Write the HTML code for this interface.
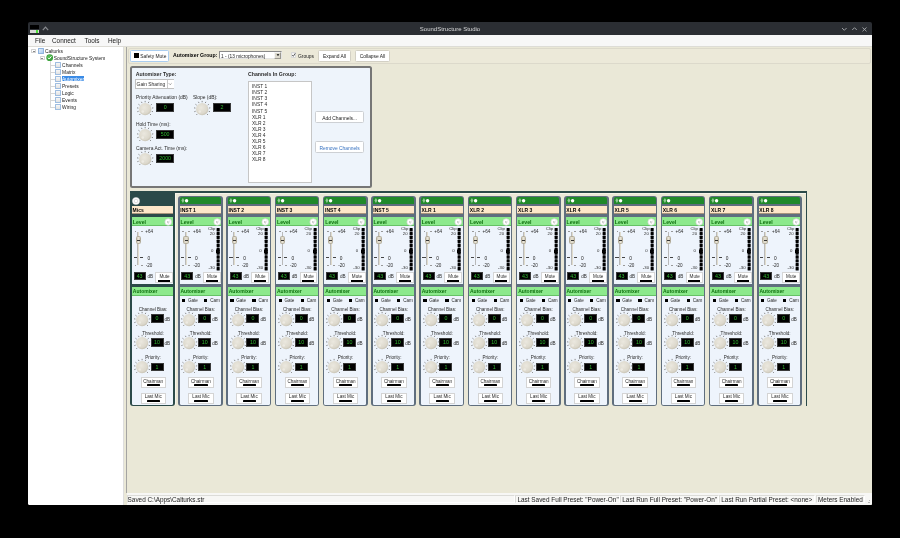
<!DOCTYPE html><html><head><meta charset="utf-8"><style>html,body{margin:0;padding:0;background:#000;width:900px;height:538px;overflow:hidden;position:relative}div{box-sizing:border-box}body{will-change:transform}</style></head><body>
<svg width="0" height="0" style="position:absolute"><defs><radialGradient id="kg" cx="0.42" cy="0.38" r="0.68"><stop offset="0" stop-color="#ebe8df"/><stop offset="0.7" stop-color="#dcd8cc"/><stop offset="1" stop-color="#c2bdae"/></radialGradient></defs></svg>
<div style="position:absolute;left:28px;top:22px;width:844px;height:13px;background:#2b2e33;border-radius:2px 2px 0 0"></div>
<div style="position:absolute;left:30px;top:25px;width:9px;height:4px;background:#000"></div>
<div style="position:absolute;left:30px;top:29.8px;width:9px;height:3.2px;background:#d8d8d8"></div>
<div style="position:absolute;left:36px;top:29.8px;width:1.8px;height:3.2px;background:#4fe03a"></div>
<svg style="position:absolute;left:42px;top:25px" width="7" height="7"><path d="M0.8 5.2 L3.5 2.2 L6.2 5.2" fill="none" stroke="#8a8c90" stroke-width="1.2"/></svg>
<div style="position:absolute;left:400px;top:25.5px;width:100px;text-align:center;font:normal 6.0px/6.90px 'Liberation Sans', sans-serif;color:#d8d9da;white-space:nowrap;">SoundStructure Studio</div>
<svg style="position:absolute;left:840px;top:25px" width="32" height="8"><g fill="none" stroke="#a8aaad" stroke-width="0.9"><path d="M2 3 L4.3 5.3 L6.6 3"/><path d="M12.2 5 L14.5 2.7 L16.8 5"/><path d="M22.5 2.5 L26.5 6.3 M26.5 2.5 L22.5 6.3"/></g></svg>
<div style="position:absolute;left:28px;top:35px;width:844px;height:11.5px;background:#f7f7f7"></div>
<div style="position:absolute;left:28px;top:46.0px;width:844px;height:1.0px;background:#dddcd6"></div>
<div style="position:absolute;left:35px;top:37.2px;font:normal 6.4px/7.36px 'Liberation Sans', sans-serif;color:#202020;white-space:nowrap;">File</div>
<div style="position:absolute;left:52px;top:37.2px;font:normal 6.4px/7.36px 'Liberation Sans', sans-serif;color:#202020;white-space:nowrap;">Connect</div>
<div style="position:absolute;left:84.5px;top:37.2px;font:normal 6.4px/7.36px 'Liberation Sans', sans-serif;color:#202020;white-space:nowrap;">Tools</div>
<div style="position:absolute;left:108px;top:37.2px;font:normal 6.4px/7.36px 'Liberation Sans', sans-serif;color:#202020;white-space:nowrap;">Help</div>
<div style="position:absolute;left:28px;top:47px;width:95.5px;height:457.6px;background:#fff;border-radius:0 0 0 1.5px"></div>
<div style="position:absolute;left:123.5px;top:47px;width:748.5px;height:457.6px;background:#eae8d7;border-radius:0 0 1.5px 0"></div>
<div style="position:absolute;left:125.8px;top:47px;width:1.0px;height:445.5px;background:#a4a4a2"></div>
<div style="position:absolute;left:122.7px;top:47px;width:1.2px;height:457.6px;background:#dedede"></div>
<div style="position:absolute;left:50.3px;top:61px;width:0.8px;height:46.5px;background:#d6d6d6"></div>
<div style="position:absolute;left:31.3px;top:48.699999999999996px;width:4.6px;height:4.0px;border:0.6px solid #d2d2d2;background:#fff;border-radius:0.6px"></div>
<div style="position:absolute;left:32.5px;top:50.5px;width:2.2px;height:0.6px;background:#888"></div>
<div style="position:absolute;left:38.4px;top:47.599999999999994px;width:5.6px;height:6.4px;background:linear-gradient(135deg,#e6f0fb,#a9c9ef);border:0.6px solid #8fb3de;border-radius:0.5px"></div>
<div style="position:absolute;left:44.9px;top:49.099999999999994px;font:normal 4.9px/5.63px 'Liberation Sans', sans-serif;color:#1a1a1a;white-space:nowrap;">Calturks</div>
<div style="position:absolute;left:40.1px;top:55.699999999999996px;width:4.6px;height:4.0px;border:0.6px solid #d2d2d2;background:#fff;border-radius:0.6px"></div>
<div style="position:absolute;left:41.3px;top:57.5px;width:2.2px;height:0.6px;background:#888"></div>
<svg style="position:absolute;left:46px;top:54.199999999999996px" width="7.5" height="7.5"><circle cx="3.7" cy="3.7" r="3.4" fill="#3fa43f"/><circle cx="3.3" cy="3.0" r="2.0" fill="#6fd06f" opacity="0.5"/><path d="M2.0 3.8 L3.2 5.0 L5.5 2.4" fill="none" stroke="#fff" stroke-width="1"/></svg>
<div style="position:absolute;left:53.7px;top:56.099999999999994px;font:normal 4.9px/5.63px 'Liberation Sans', sans-serif;color:#1a1a1a;white-space:nowrap;">SoundStructure System</div>
<div style="position:absolute;left:50.6px;top:64.5px;width:4.6px;height:0.7px;background:#d6d6d6"></div>
<div style="position:absolute;left:55.0px;top:61.8px;width:5.7px;height:6.1px;background:linear-gradient(#f7f7f7,#e2e2e2);border:0.6px solid #9fbde0;border-radius:0.5px"></div>
<div style="position:absolute;left:62.1px;top:63.099999999999994px;font:normal 4.9px/5.63px 'Liberation Sans', sans-serif;color:#1a1a1a;white-space:nowrap;">Channels</div>
<div style="position:absolute;left:50.6px;top:71.5px;width:4.6px;height:0.7px;background:#d6d6d6"></div>
<div style="position:absolute;left:55.0px;top:68.8px;width:5.7px;height:6.1px;background:linear-gradient(#f7f7f7,#e2e2e2);border:0.6px solid #9fbde0;border-radius:0.5px"></div>
<div style="position:absolute;left:62.1px;top:70.1px;font:normal 4.9px/5.63px 'Liberation Sans', sans-serif;color:#1a1a1a;white-space:nowrap;">Matrix</div>
<div style="position:absolute;left:50.6px;top:78.5px;width:4.6px;height:0.7px;background:#d6d6d6"></div>
<div style="position:absolute;left:55.0px;top:75.8px;width:5.7px;height:6.1px;background:linear-gradient(#f7f7f7,#e2e2e2);border:0.6px solid #9fbde0;border-radius:0.5px"></div>
<div style="position:absolute;left:61.9px;top:75.6px;width:22.5px;height:5.9px;background:#3a8be6"></div>
<div style="position:absolute;left:62.1px;top:77.1px;font:normal 4.9px/5.63px 'Liberation Sans', sans-serif;color:#fff;white-space:nowrap;">Automixer</div>
<div style="position:absolute;left:50.6px;top:85.5px;width:4.6px;height:0.7px;background:#d6d6d6"></div>
<div style="position:absolute;left:55.0px;top:82.8px;width:5.7px;height:6.1px;background:linear-gradient(#f7f7f7,#e2e2e2);border:0.6px solid #9fbde0;border-radius:0.5px"></div>
<div style="position:absolute;left:62.1px;top:84.1px;font:normal 4.9px/5.63px 'Liberation Sans', sans-serif;color:#1a1a1a;white-space:nowrap;">Presets</div>
<div style="position:absolute;left:50.6px;top:92.5px;width:4.6px;height:0.7px;background:#d6d6d6"></div>
<div style="position:absolute;left:55.0px;top:89.8px;width:5.7px;height:6.1px;background:linear-gradient(#f7f7f7,#e2e2e2);border:0.6px solid #9fbde0;border-radius:0.5px"></div>
<div style="position:absolute;left:62.1px;top:91.1px;font:normal 4.9px/5.63px 'Liberation Sans', sans-serif;color:#1a1a1a;white-space:nowrap;">Logic</div>
<div style="position:absolute;left:50.6px;top:99.5px;width:4.6px;height:0.7px;background:#d6d6d6"></div>
<div style="position:absolute;left:55.0px;top:96.8px;width:5.7px;height:6.1px;background:linear-gradient(#f7f7f7,#e2e2e2);border:0.6px solid #9fbde0;border-radius:0.5px"></div>
<div style="position:absolute;left:62.1px;top:98.1px;font:normal 4.9px/5.63px 'Liberation Sans', sans-serif;color:#1a1a1a;white-space:nowrap;">Events</div>
<div style="position:absolute;left:50.6px;top:106.5px;width:4.6px;height:0.7px;background:#d6d6d6"></div>
<div style="position:absolute;left:55.0px;top:103.8px;width:5.7px;height:6.1px;background:linear-gradient(#f7f7f7,#e2e2e2);border:0.6px solid #9fbde0;border-radius:0.5px"></div>
<div style="position:absolute;left:62.1px;top:105.1px;font:normal 4.9px/5.63px 'Liberation Sans', sans-serif;color:#1a1a1a;white-space:nowrap;">Wiring</div>
<div style="position:absolute;left:127.8px;top:48.2px;width:743.5px;height:15.8px;background:#ece9d9;border:0.7px solid #dcd9cb;border-radius:2px"></div>
<div style="position:absolute;left:130px;top:50px;width:39px;height:12.3px;background:#fff;border:0.8px solid #aacdf0;border-radius:1.5px"></div>
<div style="position:absolute;left:133.7px;top:53px;width:5px;height:5px;background:#000"></div>
<div style="position:absolute;left:140.3px;top:54.1px;font:normal 4.9px/5.63px 'Liberation Sans', sans-serif;color:#222;white-space:nowrap;">Safety Mute</div>
<div style="position:absolute;left:173px;top:52.1px;font:bold 5.2px/5.98px 'Liberation Sans', sans-serif;color:#000;white-space:nowrap;">Automixer Group:</div>
<div style="position:absolute;left:219px;top:51px;width:62.6px;height:8.4px;background:#fff;border:0.8px solid;border-color:#8a8a8a #e4e4e4 #e4e4e4 #8a8a8a"></div>
<div style="position:absolute;left:221px;top:53.6px;font:normal 4.8px/5.52px 'Liberation Sans', sans-serif;color:#222;white-space:nowrap;">1 - (13 microphones)</div>
<div style="position:absolute;left:274.1px;top:51.8px;width:6.9px;height:6.9px;background:#dcd9cd;border:0.5px solid;border-color:#f4f4f4 #9a9890 #9a9890 #f4f4f4"></div>
<svg style="position:absolute;left:274.6px;top:52.4px" width="6" height="6"><path d="M1.6 2.3 L4.4 2.3 L3 3.9 Z" fill="#000"/></svg>
<div style="position:absolute;left:290.7px;top:52.2px;width:5.4px;height:5.8px;background:linear-gradient(#f0f0f0,#fff);border:0.6px solid #d8d8d8;border-radius:0.8px"></div>
<svg style="position:absolute;left:290.7px;top:52.2px" width="6" height="6"><path d="M1.2 3.0 L2.3 4.3 L4.3 1.3" fill="none" stroke="#333" stroke-width="0.75"/></svg>
<div style="position:absolute;left:298px;top:53.9px;font:normal 4.9px/5.63px 'Liberation Sans', sans-serif;color:#222;white-space:nowrap;">Groups</div>
<div style="position:absolute;left:318px;top:50.3px;width:33px;height:12px;background:#fff;border:0.7px solid #d3d0c4;border-radius:1.5px"></div>
<div style="position:absolute;left:284.5px;top:54.2px;width:100px;text-align:center;font:normal 4.9px/5.63px 'Liberation Sans', sans-serif;color:#222;white-space:nowrap;">Expand All</div>
<div style="position:absolute;left:355px;top:50.3px;width:35px;height:12px;background:#fff;border:0.7px solid #d3d0c4;border-radius:1.5px"></div>
<div style="position:absolute;left:322.5px;top:54.2px;width:100px;text-align:center;font:normal 4.9px/5.63px 'Liberation Sans', sans-serif;color:#222;white-space:nowrap;">Collapse All</div>
<div style="position:absolute;left:129.9px;top:66.2px;width:242px;height:121.6px;background:#eef4fb;border:2.2px solid #767676;border-radius:2.5px"></div>
<div style="position:absolute;left:135.8px;top:71.3px;font:bold 5.2px/5.98px 'Liberation Sans', sans-serif;color:#2b2b2b;white-space:nowrap;">Automixer Type:</div>
<div style="position:absolute;left:135.4px;top:79.4px;width:39px;height:9.2px;background:#fff;border:0.7px solid #c0c0c0"></div>
<div style="position:absolute;left:136.6px;top:81.6px;font:normal 4.9px/5.63px 'Liberation Sans', sans-serif;color:#2b2b2b;white-space:nowrap;">Gain Sharing</div>
<div style="position:absolute;left:166.5px;top:80.2px;width:7.4px;height:7.6px;background:#fff;border-left:0.6px solid #c8c8c8"></div>
<svg style="position:absolute;left:167px;top:81px" width="6" height="6"><path d="M1.8 2.3 L3.2 3.7 L4.6 2.3" fill="none" stroke="#666" stroke-width="0.6"/></svg>
<div style="position:absolute;left:136px;top:95.4px;font:normal 4.9px/5.63px 'Liberation Sans', sans-serif;color:#2b2b2b;white-space:nowrap;">Priority Attenuation (dB)</div>
<svg style="position:absolute;left:135.60px;top:100.25px;overflow:visible" width="18.30" height="18.30"><g stroke="#858585" stroke-width="0.95"><line x1="4.31" y1="13.99" x2="3.32" y2="14.98"/><line x1="2.64" y1="11.27" x2="1.30" y2="11.70"/><line x1="2.38" y1="8.08" x2="1.00" y2="7.86"/><line x1="3.61" y1="5.12" x2="2.48" y2="4.30"/><line x1="6.04" y1="3.05" x2="5.40" y2="1.80"/><line x1="9.15" y1="2.30" x2="9.15" y2="0.90"/><line x1="12.26" y1="3.05" x2="12.90" y2="1.80"/><line x1="14.69" y1="5.12" x2="15.82" y2="4.30"/><line x1="15.92" y1="8.08" x2="17.30" y2="7.86"/><line x1="15.66" y1="11.27" x2="17.00" y2="11.70"/><line x1="13.99" y1="13.99" x2="14.98" y2="14.98"/></g><circle cx="9.15" cy="9.15" r="6.15" fill="url(#kg)"/><circle cx="6.76" cy="11.54" r="1.35" fill="#f0eee6" opacity="0.8"/></svg>
<div style="position:absolute;left:156.4px;top:103.3px;width:17.5px;height:8.8px;background:#000;border:0.5px solid #3a3a3a;box-sizing:border-box;color:#2fb52f;font:5.3px/7.800000000000001px 'Liberation Sans', sans-serif;text-align:center">0</div>
<div style="position:absolute;left:193px;top:95.4px;font:normal 4.9px/5.63px 'Liberation Sans', sans-serif;color:#2b2b2b;white-space:nowrap;">Slope (dB):</div>
<svg style="position:absolute;left:192.65px;top:100.25px;overflow:visible" width="18.30" height="18.30"><g stroke="#858585" stroke-width="0.95"><line x1="4.31" y1="13.99" x2="3.32" y2="14.98"/><line x1="2.64" y1="11.27" x2="1.30" y2="11.70"/><line x1="2.38" y1="8.08" x2="1.00" y2="7.86"/><line x1="3.61" y1="5.12" x2="2.48" y2="4.30"/><line x1="6.04" y1="3.05" x2="5.40" y2="1.80"/><line x1="9.15" y1="2.30" x2="9.15" y2="0.90"/><line x1="12.26" y1="3.05" x2="12.90" y2="1.80"/><line x1="14.69" y1="5.12" x2="15.82" y2="4.30"/><line x1="15.92" y1="8.08" x2="17.30" y2="7.86"/><line x1="15.66" y1="11.27" x2="17.00" y2="11.70"/><line x1="13.99" y1="13.99" x2="14.98" y2="14.98"/></g><circle cx="9.15" cy="9.15" r="6.15" fill="url(#kg)"/><circle cx="6.76" cy="11.54" r="1.35" fill="#f0eee6" opacity="0.8"/></svg>
<div style="position:absolute;left:213.3px;top:103.3px;width:17.5px;height:8.8px;background:#000;border:0.5px solid #3a3a3a;box-sizing:border-box;color:#2fb52f;font:5.3px/7.800000000000001px 'Liberation Sans', sans-serif;text-align:center">2</div>
<div style="position:absolute;left:136px;top:121.6px;font:normal 4.9px/5.63px 'Liberation Sans', sans-serif;color:#2b2b2b;white-space:nowrap;">Hold Time (ms):</div>
<svg style="position:absolute;left:135.60px;top:125.95px;overflow:visible" width="18.30" height="18.30"><g stroke="#858585" stroke-width="0.95"><line x1="4.31" y1="13.99" x2="3.32" y2="14.98"/><line x1="2.64" y1="11.27" x2="1.30" y2="11.70"/><line x1="2.38" y1="8.08" x2="1.00" y2="7.86"/><line x1="3.61" y1="5.12" x2="2.48" y2="4.30"/><line x1="6.04" y1="3.05" x2="5.40" y2="1.80"/><line x1="9.15" y1="2.30" x2="9.15" y2="0.90"/><line x1="12.26" y1="3.05" x2="12.90" y2="1.80"/><line x1="14.69" y1="5.12" x2="15.82" y2="4.30"/><line x1="15.92" y1="8.08" x2="17.30" y2="7.86"/><line x1="15.66" y1="11.27" x2="17.00" y2="11.70"/><line x1="13.99" y1="13.99" x2="14.98" y2="14.98"/></g><circle cx="9.15" cy="9.15" r="6.15" fill="url(#kg)"/><circle cx="6.76" cy="11.54" r="1.35" fill="#f0eee6" opacity="0.8"/></svg>
<div style="position:absolute;left:156.4px;top:129.8px;width:17.5px;height:8.9px;background:#000;border:0.5px solid #3a3a3a;box-sizing:border-box;color:#2fb52f;font:5.3px/7.9px 'Liberation Sans', sans-serif;text-align:center">500</div>
<div style="position:absolute;left:136px;top:145.6px;font:normal 4.9px/5.63px 'Liberation Sans', sans-serif;color:#2b2b2b;white-space:nowrap;">Camera Act. Time (ms):</div>
<svg style="position:absolute;left:135.60px;top:149.55px;overflow:visible" width="18.30" height="18.30"><g stroke="#858585" stroke-width="0.95"><line x1="4.31" y1="13.99" x2="3.32" y2="14.98"/><line x1="2.64" y1="11.27" x2="1.30" y2="11.70"/><line x1="2.38" y1="8.08" x2="1.00" y2="7.86"/><line x1="3.61" y1="5.12" x2="2.48" y2="4.30"/><line x1="6.04" y1="3.05" x2="5.40" y2="1.80"/><line x1="9.15" y1="2.30" x2="9.15" y2="0.90"/><line x1="12.26" y1="3.05" x2="12.90" y2="1.80"/><line x1="14.69" y1="5.12" x2="15.82" y2="4.30"/><line x1="15.92" y1="8.08" x2="17.30" y2="7.86"/><line x1="15.66" y1="11.27" x2="17.00" y2="11.70"/><line x1="13.99" y1="13.99" x2="14.98" y2="14.98"/></g><circle cx="9.15" cy="9.15" r="6.15" fill="url(#kg)"/><circle cx="6.76" cy="11.54" r="1.35" fill="#f0eee6" opacity="0.8"/></svg>
<div style="position:absolute;left:156.4px;top:153.9px;width:17.5px;height:8.7px;background:#000;border:0.5px solid #3a3a3a;box-sizing:border-box;color:#2fb52f;font:5.3px/7.699999999999999px 'Liberation Sans', sans-serif;text-align:center">2000</div>
<div style="position:absolute;left:248px;top:71.3px;font:bold 5.2px/5.98px 'Liberation Sans', sans-serif;color:#2b2b2b;white-space:nowrap;">Channels In Group:</div>
<div style="position:absolute;left:248.3px;top:81px;width:63.4px;height:101.8px;background:#fff;border:0.7px solid #c6c6c6"></div>
<div style="position:absolute;left:252px;top:84.1px;font:normal 4.9px/5.63px 'Liberation Sans', sans-serif;color:#2b2b2b;white-space:nowrap;">INST 1</div>
<div style="position:absolute;left:252px;top:90.19999999999999px;font:normal 4.9px/5.63px 'Liberation Sans', sans-serif;color:#2b2b2b;white-space:nowrap;">INST 2</div>
<div style="position:absolute;left:252px;top:96.3px;font:normal 4.9px/5.63px 'Liberation Sans', sans-serif;color:#2b2b2b;white-space:nowrap;">INST 3</div>
<div style="position:absolute;left:252px;top:102.39999999999999px;font:normal 4.9px/5.63px 'Liberation Sans', sans-serif;color:#2b2b2b;white-space:nowrap;">INST 4</div>
<div style="position:absolute;left:252px;top:108.5px;font:normal 4.9px/5.63px 'Liberation Sans', sans-serif;color:#2b2b2b;white-space:nowrap;">INST 5</div>
<div style="position:absolute;left:252px;top:114.6px;font:normal 4.9px/5.63px 'Liberation Sans', sans-serif;color:#2b2b2b;white-space:nowrap;">XLR 1</div>
<div style="position:absolute;left:252px;top:120.69999999999999px;font:normal 4.9px/5.63px 'Liberation Sans', sans-serif;color:#2b2b2b;white-space:nowrap;">XLR 2</div>
<div style="position:absolute;left:252px;top:126.79999999999998px;font:normal 4.9px/5.63px 'Liberation Sans', sans-serif;color:#2b2b2b;white-space:nowrap;">XLR 3</div>
<div style="position:absolute;left:252px;top:132.89999999999998px;font:normal 4.9px/5.63px 'Liberation Sans', sans-serif;color:#2b2b2b;white-space:nowrap;">XLR 4</div>
<div style="position:absolute;left:252px;top:139.0px;font:normal 4.9px/5.63px 'Liberation Sans', sans-serif;color:#2b2b2b;white-space:nowrap;">XLR 5</div>
<div style="position:absolute;left:252px;top:145.1px;font:normal 4.9px/5.63px 'Liberation Sans', sans-serif;color:#2b2b2b;white-space:nowrap;">XLR 6</div>
<div style="position:absolute;left:252px;top:151.2px;font:normal 4.9px/5.63px 'Liberation Sans', sans-serif;color:#2b2b2b;white-space:nowrap;">XLR 7</div>
<div style="position:absolute;left:252px;top:157.29999999999998px;font:normal 4.9px/5.63px 'Liberation Sans', sans-serif;color:#2b2b2b;white-space:nowrap;">XLR 8</div>
<div style="position:absolute;left:315.3px;top:111.3px;width:48.6px;height:12px;background:#fff;border:0.7px solid #cdd0d4;border-radius:1.5px"></div>
<div style="position:absolute;left:289.6px;top:115.9px;width:100px;text-align:center;font:normal 4.9px/5.63px 'Liberation Sans', sans-serif;color:#222;white-space:nowrap;">Add Channels...</div>
<div style="position:absolute;left:315.3px;top:140.9px;width:48.6px;height:12px;background:#fff;border:0.7px solid #cdd0d4;border-radius:1.5px"></div>
<div style="position:absolute;left:289.6px;top:145.5px;width:100px;text-align:center;font:normal 4.9px/5.63px 'Liberation Sans', sans-serif;color:#3470c0;white-space:nowrap;">Remove Channels</div>
<div style="position:absolute;left:130.3px;top:191.2px;width:677px;height:214.5px;border-top:2px solid #2b4a49;border-right:1.8px solid #2b4a49"></div>
<div style="position:absolute;left:130.3px;top:191.2px;width:44.8px;height:215.3px;background:#2b4a49;border-radius:3px 0 3px 3px"></div>
<div style="position:absolute;left:175.1px;top:193.2px;width:630.5px;height:0.8px;background:#f6f4ea"></div>
<div style="position:absolute;left:175.1px;top:193.2px;width:0.8px;height:212px;background:#f6f4ea"></div>
<svg style="position:absolute;left:131.6px;top:197.2px" width="8" height="8"><circle cx="4" cy="4" r="3.6" fill="#fff" stroke="#dcdcdc" stroke-width="0.5"/><circle cx="4" cy="4" r="1.8" fill="none" stroke="#c4c4c4" stroke-width="0.6"/></svg>
<div style="position:absolute;left:132.0px;top:206.4px;width:41.3px;height:8.0px;background:#fde7c9;border-bottom:0.8px solid #a8957c"></div>
<div style="position:absolute;left:132.6px;top:208.0px;font:bold 5.0px/5.75px 'Liberation Sans', sans-serif;color:#000;white-space:nowrap;">Mics</div>
<div style="position:absolute;left:132.0px;top:216.8px;width:41.3px;height:9.0px;background:#8ce98c;border-bottom:0.8px solid #66c266"></div>
<div style="position:absolute;left:132.8px;top:219.3px;font:bold 5.2px/5.98px 'Liberation Sans', sans-serif;color:#0f700f;white-space:nowrap;">Level</div>
<svg style="position:absolute;left:164.3px;top:217.5px" width="8" height="8"><circle cx="4.2" cy="4" r="3.3" fill="#fff" stroke="#d6d6d6" stroke-width="0.7"/><path d="M3 3.1 L4.2 4.1 L5.4 3.1 M3 4.2 L4.2 5.2 L5.4 4.2" fill="none" stroke="#a0a0a0" stroke-width="0.55"/></svg>
<div style="position:absolute;left:132.0px;top:225.9px;width:41.3px;height:57.8px;background:#eef4fc"></div>
<div style="position:absolute;left:137.4px;top:232.0px;width:1.8px;height:33.0px;background:#e0dccd;border-left:0.5px solid #b9b9b9"></div>
<div style="position:absolute;left:135.6px;top:235.8px;width:5.4px;height:8.2px;background:linear-gradient(90deg,#cdc7b4,#e8e4d8,#cdc7b4);border:0.4px solid #b3ac9a;border-radius:1.5px"></div>
<div style="position:absolute;left:136.8px;top:240.0px;width:3.0px;height:1.0px;background:#333"></div>
<div style="position:absolute;left:134.6px;top:231.25px;width:1.9px;height:0.75px;background:#999"></div>
<div style="position:absolute;left:140.7px;top:231.25px;width:1.9px;height:0.75px;background:#999"></div>
<div style="position:absolute;left:133.5px;top:257.05px;width:3.2px;height:1.1px;background:#444"></div>
<div style="position:absolute;left:140.1px;top:257.05px;width:3.2px;height:1.1px;background:#444"></div>
<div style="position:absolute;left:134.6px;top:265.15px;width:1.9px;height:0.75px;background:#999"></div>
<div style="position:absolute;left:140.7px;top:265.15px;width:1.9px;height:0.75px;background:#999"></div>
<div style="position:absolute;left:145.3px;top:229.2px;font:normal 4.6px/5.29px 'Liberation Sans', sans-serif;color:#2b2b2b;white-space:nowrap;">+64</div>
<div style="position:absolute;left:147.4px;top:255.6px;font:normal 4.8px/5.52px 'Liberation Sans', sans-serif;color:#222;white-space:nowrap;">0</div>
<div style="position:absolute;left:145.7px;top:263.1px;font:normal 4.6px/5.29px 'Liberation Sans', sans-serif;color:#2b2b2b;white-space:nowrap;">-20</div>
<div style="position:absolute;left:133.6px;top:271.9px;width:12px;height:8.6px;background:#000;border:0.5px solid #3a3a3a;box-sizing:border-box;color:#2fb52f;font:5.3px/7.6px 'Liberation Sans', sans-serif;text-align:center">43</div>
<div style="position:absolute;left:147.5px;top:274.3px;font:normal 4.6px/5.29px 'Liberation Sans', sans-serif;color:#2b2b2b;white-space:nowrap;">dB</div>
<div style="position:absolute;left:155.4px;top:272.4px;width:17.9px;height:10.9px;background:#fff;border:0.6px solid #d6d6d6"></div>
<div style="position:absolute;left:114.5px;top:274.2px;width:100px;text-align:center;font:normal 4.6px/5.29px 'Liberation Sans', sans-serif;color:#2b2b2b;white-space:nowrap;">Mute</div>
<div style="position:absolute;left:158.1px;top:280.0px;width:12.2px;height:1.7px;background:#000"></div>
<div style="position:absolute;left:132.0px;top:286.6px;width:41.3px;height:9.2px;background:#8ce98c;border-bottom:0.8px solid #66c266"></div>
<div style="position:absolute;left:132.8px;top:289.0px;font:bold 5.0px/5.75px 'Liberation Sans', sans-serif;color:#0f700f;white-space:nowrap;">Automixer</div>
<div style="position:absolute;left:132.0px;top:295.8px;width:41.3px;height:109.1px;background:#eef4fc;border-radius:0 0 1.5px 1.5px"></div>
<div style="position:absolute;left:103.0px;top:306.8px;width:100px;text-align:center;font:normal 4.6px/5.29px 'Liberation Sans', sans-serif;color:#2b2b2b;white-space:nowrap;">Channel Bias:</div>
<svg style="position:absolute;left:132.60px;top:310.70px;overflow:visible" width="18.20" height="18.20"><g stroke="#858585" stroke-width="0.95"><line x1="4.29" y1="13.91" x2="3.30" y2="14.90"/><line x1="2.63" y1="11.20" x2="1.30" y2="11.63"/><line x1="2.38" y1="8.04" x2="1.00" y2="7.82"/><line x1="3.60" y1="5.10" x2="2.47" y2="4.28"/><line x1="6.01" y1="3.04" x2="5.38" y2="1.79"/><line x1="9.10" y1="2.30" x2="9.10" y2="0.90"/><line x1="12.19" y1="3.04" x2="12.82" y2="1.79"/><line x1="14.60" y1="5.10" x2="15.73" y2="4.28"/><line x1="15.82" y1="8.04" x2="17.20" y2="7.82"/><line x1="15.57" y1="11.20" x2="16.90" y2="11.63"/><line x1="13.91" y1="13.91" x2="14.90" y2="14.90"/></g><circle cx="9.1" cy="9.1" r="6.1" fill="url(#kg)"/><circle cx="6.73" cy="11.47" r="1.34" fill="#f0eee6" opacity="0.8"/></svg>
<div style="position:absolute;left:150.5px;top:314.1px;width:13px;height:8.8px;background:#000;border:0.5px solid #3a3a3a;box-sizing:border-box;color:#2fb52f;font:5.3px/7.800000000000001px 'Liberation Sans', sans-serif;text-align:center">0</div>
<div style="position:absolute;left:164.5px;top:316.8px;font:normal 4.6px/5.29px 'Liberation Sans', sans-serif;color:#2b2b2b;white-space:nowrap;">dB</div>
<div style="position:absolute;left:103.0px;top:330.6px;width:100px;text-align:center;font:normal 4.6px/5.29px 'Liberation Sans', sans-serif;color:#2b2b2b;white-space:nowrap;">Threshold:</div>
<svg style="position:absolute;left:132.60px;top:334.30px;overflow:visible" width="18.20" height="18.20"><g stroke="#858585" stroke-width="0.95"><line x1="4.29" y1="13.91" x2="3.30" y2="14.90"/><line x1="2.63" y1="11.20" x2="1.30" y2="11.63"/><line x1="2.38" y1="8.04" x2="1.00" y2="7.82"/><line x1="3.60" y1="5.10" x2="2.47" y2="4.28"/><line x1="6.01" y1="3.04" x2="5.38" y2="1.79"/><line x1="9.10" y1="2.30" x2="9.10" y2="0.90"/><line x1="12.19" y1="3.04" x2="12.82" y2="1.79"/><line x1="14.60" y1="5.10" x2="15.73" y2="4.28"/><line x1="15.82" y1="8.04" x2="17.20" y2="7.82"/><line x1="15.57" y1="11.20" x2="16.90" y2="11.63"/><line x1="13.91" y1="13.91" x2="14.90" y2="14.90"/></g><circle cx="9.1" cy="9.1" r="6.1" fill="url(#kg)"/><circle cx="6.73" cy="11.47" r="1.34" fill="#f0eee6" opacity="0.8"/></svg>
<div style="position:absolute;left:150.5px;top:338.3px;width:13px;height:8.8px;background:#000;border:0.5px solid #3a3a3a;box-sizing:border-box;color:#2fb52f;font:5.3px/7.800000000000001px 'Liberation Sans', sans-serif;text-align:center">10</div>
<div style="position:absolute;left:164.5px;top:340.8px;font:normal 4.6px/5.29px 'Liberation Sans', sans-serif;color:#2b2b2b;white-space:nowrap;">dB</div>
<div style="position:absolute;left:103.0px;top:354.9px;width:100px;text-align:center;font:normal 4.6px/5.29px 'Liberation Sans', sans-serif;color:#2b2b2b;white-space:nowrap;">Priority:</div>
<svg style="position:absolute;left:132.60px;top:358.20px;overflow:visible" width="18.20" height="18.20"><g stroke="#858585" stroke-width="0.95"><line x1="4.29" y1="13.91" x2="3.30" y2="14.90"/><line x1="2.63" y1="11.20" x2="1.30" y2="11.63"/><line x1="2.38" y1="8.04" x2="1.00" y2="7.82"/><line x1="3.60" y1="5.10" x2="2.47" y2="4.28"/><line x1="6.01" y1="3.04" x2="5.38" y2="1.79"/><line x1="9.10" y1="2.30" x2="9.10" y2="0.90"/><line x1="12.19" y1="3.04" x2="12.82" y2="1.79"/><line x1="14.60" y1="5.10" x2="15.73" y2="4.28"/><line x1="15.82" y1="8.04" x2="17.20" y2="7.82"/><line x1="15.57" y1="11.20" x2="16.90" y2="11.63"/><line x1="13.91" y1="13.91" x2="14.90" y2="14.90"/></g><circle cx="9.1" cy="9.1" r="6.1" fill="url(#kg)"/><circle cx="6.73" cy="11.47" r="1.34" fill="#f0eee6" opacity="0.8"/></svg>
<div style="position:absolute;left:150.5px;top:362.5px;width:13px;height:8.8px;background:#000;border:0.5px solid #3a3a3a;box-sizing:border-box;color:#2fb52f;font:5.3px/7.800000000000001px 'Liberation Sans', sans-serif;text-align:center">1</div>
<div style="position:absolute;left:140.5px;top:377.4px;width:25.5px;height:10.9px;background:#fff;border:0.6px solid #d4d4d4"></div>
<div style="position:absolute;left:103.19999999999999px;top:379.0px;width:100px;text-align:center;font:normal 4.6px/5.29px 'Liberation Sans', sans-serif;color:#2b2b2b;white-space:nowrap;">Chairman</div>
<div style="position:absolute;left:146.6px;top:384.29999999999995px;width:13.4px;height:2.0px;background:#000;border-radius:0.5px"></div>
<div style="position:absolute;left:140.5px;top:392.8px;width:25.5px;height:10.9px;background:#fff;border:0.6px solid #d4d4d4"></div>
<div style="position:absolute;left:103.19999999999999px;top:394.40000000000003px;width:100px;text-align:center;font:normal 4.6px/5.29px 'Liberation Sans', sans-serif;color:#2b2b2b;white-space:nowrap;">Last Mic</div>
<div style="position:absolute;left:146.6px;top:399.7px;width:13.4px;height:2.0px;background:#000;border-radius:0.5px"></div>
<div style="position:absolute;left:178.2px;top:195.8px;width:44.8px;height:210.6px;background:#5f6e7e;border-radius:3px"></div>
<div style="position:absolute;left:179.7px;top:197.4px;width:41.8px;height:6.6px;background:#20892a;border-radius:2px 2px 0 0"></div>
<svg style="position:absolute;left:179.7px;top:197px" width="10" height="7"><path d="M1.4 3.5 L2.9 1.1 L4.4 3.5 L2.9 6.0 Z" fill="#9fd39f" opacity="0.9"/><circle cx="6.6" cy="3.8" r="1.7" fill="#fff"/></svg>
<div style="position:absolute;left:179.7px;top:206.4px;width:41.8px;height:8.0px;background:#fde7c9;border-bottom:0.8px solid #a8957c"></div>
<div style="position:absolute;left:180.29999999999998px;top:208.0px;font:bold 5.0px/5.75px 'Liberation Sans', sans-serif;color:#000;white-space:nowrap;">INST 1</div>
<div style="position:absolute;left:179.7px;top:216.8px;width:41.8px;height:9.0px;background:#8ce98c;border-bottom:0.8px solid #66c266"></div>
<div style="position:absolute;left:180.5px;top:219.3px;font:bold 5.2px/5.98px 'Liberation Sans', sans-serif;color:#0f700f;white-space:nowrap;">Level</div>
<svg style="position:absolute;left:212.5px;top:217.5px" width="8" height="8"><circle cx="4.2" cy="4" r="3.3" fill="#fff" stroke="#d6d6d6" stroke-width="0.7"/><path d="M3 3.1 L4.2 4.1 L5.4 3.1 M3 4.2 L4.2 5.2 L5.4 4.2" fill="none" stroke="#a0a0a0" stroke-width="0.55"/></svg>
<div style="position:absolute;left:179.7px;top:225.9px;width:41.8px;height:57.8px;background:#eef4fc"></div>
<div style="position:absolute;left:185.1px;top:232.0px;width:1.8px;height:33.0px;background:#e0dccd;border-left:0.5px solid #b9b9b9"></div>
<div style="position:absolute;left:183.29999999999998px;top:235.8px;width:5.4px;height:8.2px;background:linear-gradient(90deg,#cdc7b4,#e8e4d8,#cdc7b4);border:0.4px solid #b3ac9a;border-radius:1.5px"></div>
<div style="position:absolute;left:184.5px;top:240.0px;width:3.0px;height:1.0px;background:#333"></div>
<div style="position:absolute;left:182.29999999999998px;top:231.25px;width:1.9px;height:0.75px;background:#999"></div>
<div style="position:absolute;left:188.39999999999998px;top:231.25px;width:1.9px;height:0.75px;background:#999"></div>
<div style="position:absolute;left:181.2px;top:257.05px;width:3.2px;height:1.1px;background:#444"></div>
<div style="position:absolute;left:187.79999999999998px;top:257.05px;width:3.2px;height:1.1px;background:#444"></div>
<div style="position:absolute;left:182.29999999999998px;top:265.15px;width:1.9px;height:0.75px;background:#999"></div>
<div style="position:absolute;left:188.39999999999998px;top:265.15px;width:1.9px;height:0.75px;background:#999"></div>
<div style="position:absolute;left:193.0px;top:229.2px;font:normal 4.6px/5.29px 'Liberation Sans', sans-serif;color:#2b2b2b;white-space:nowrap;">+64</div>
<div style="position:absolute;left:195.1px;top:255.6px;font:normal 4.8px/5.52px 'Liberation Sans', sans-serif;color:#222;white-space:nowrap;">0</div>
<div style="position:absolute;left:193.39999999999998px;top:263.1px;font:normal 4.6px/5.29px 'Liberation Sans', sans-serif;color:#2b2b2b;white-space:nowrap;">-20</div>
<svg style="position:absolute;left:216.1px;top:227.6px" width="5" height="44"><rect x="0.6" y="0.00" width="3.1" height="3.4" rx="0.5" fill="#000"/><rect x="0.6" y="3.90" width="3.1" height="3.4" rx="0.5" fill="#000"/><rect x="0.6" y="7.80" width="3.1" height="3.4" rx="0.5" fill="#000"/><rect x="0.6" y="11.70" width="3.1" height="3.4" rx="0.5" fill="#000"/><rect x="0.6" y="15.60" width="3.1" height="3.4" rx="0.5" fill="#000"/><rect x="0.6" y="19.50" width="3.1" height="3.4" rx="0.5" fill="#000"/><rect x="0.6" y="23.40" width="3.1" height="3.4" rx="0.5" fill="#000"/><rect x="0.6" y="27.30" width="3.1" height="3.4" rx="0.5" fill="#000"/><rect x="0.6" y="31.20" width="3.1" height="3.4" rx="0.5" fill="#000"/><rect x="0.6" y="35.10" width="3.1" height="3.4" rx="0.5" fill="#000"/><rect x="0.6" y="39.00" width="3.1" height="3.4" rx="0.5" fill="#000"/><rect x="0" y="21.5" width="3.8" height="3.7" fill="#000"/></svg>
<div style="position:absolute;left:208.0px;top:227.2px;font:normal 4.3px/4.94px 'Liberation Sans', sans-serif;color:#2b2b2b;white-space:nowrap;">Clip</div>
<div style="position:absolute;left:209.79999999999998px;top:231.5px;font:normal 4.3px/4.94px 'Liberation Sans', sans-serif;color:#2b2b2b;white-space:nowrap;">20</div>
<div style="position:absolute;left:211.0px;top:249.2px;font:normal 4.3px/4.94px 'Liberation Sans', sans-serif;color:#2b2b2b;white-space:nowrap;">0</div>
<div style="position:absolute;left:208.6px;top:266.0px;font:normal 4.3px/4.94px 'Liberation Sans', sans-serif;color:#2b2b2b;white-space:nowrap;">-30</div>
<div style="position:absolute;left:181.29999999999998px;top:271.9px;width:12px;height:8.6px;background:#000;border:0.5px solid #3a3a3a;box-sizing:border-box;color:#2fb52f;font:5.3px/7.6px 'Liberation Sans', sans-serif;text-align:center">43</div>
<div style="position:absolute;left:195.2px;top:274.3px;font:normal 4.6px/5.29px 'Liberation Sans', sans-serif;color:#2b2b2b;white-space:nowrap;">dB</div>
<div style="position:absolute;left:203.1px;top:272.4px;width:17.9px;height:10.9px;background:#fff;border:0.6px solid #d6d6d6"></div>
<div style="position:absolute;left:162.2px;top:274.2px;width:100px;text-align:center;font:normal 4.6px/5.29px 'Liberation Sans', sans-serif;color:#2b2b2b;white-space:nowrap;">Mute</div>
<div style="position:absolute;left:205.79999999999998px;top:280.0px;width:12.2px;height:1.7px;background:#000"></div>
<div style="position:absolute;left:179.7px;top:286.6px;width:41.8px;height:9.2px;background:#8ce98c;border-bottom:0.8px solid #66c266"></div>
<div style="position:absolute;left:180.5px;top:289.0px;font:bold 5.0px/5.75px 'Liberation Sans', sans-serif;color:#0f700f;white-space:nowrap;">Automixer</div>
<div style="position:absolute;left:179.7px;top:295.8px;width:41.8px;height:109.1px;background:#eef4fc;border-radius:0 0 1.5px 1.5px"></div>
<div style="position:absolute;left:182.1px;top:299.0px;width:3.2px;height:3.0px;background:#000"></div>
<div style="position:absolute;left:187.89999999999998px;top:298.4px;font:normal 4.6px/5.29px 'Liberation Sans', sans-serif;color:#2b2b2b;white-space:nowrap;">Gate</div>
<div style="position:absolute;left:204.1px;top:299.0px;width:3.2px;height:3.0px;background:#000"></div>
<div style="position:absolute;left:210.2px;top:298.4px;font:normal 4.6px/5.29px 'Liberation Sans', sans-serif;color:#2b2b2b;white-space:nowrap;">Cam</div>
<div style="position:absolute;left:150.7px;top:306.8px;width:100px;text-align:center;font:normal 4.6px/5.29px 'Liberation Sans', sans-serif;color:#2b2b2b;white-space:nowrap;">Channel Bias:</div>
<svg style="position:absolute;left:180.30px;top:310.70px;overflow:visible" width="18.20" height="18.20"><g stroke="#858585" stroke-width="0.95"><line x1="4.29" y1="13.91" x2="3.30" y2="14.90"/><line x1="2.63" y1="11.20" x2="1.30" y2="11.63"/><line x1="2.38" y1="8.04" x2="1.00" y2="7.82"/><line x1="3.60" y1="5.10" x2="2.47" y2="4.28"/><line x1="6.01" y1="3.04" x2="5.38" y2="1.79"/><line x1="9.10" y1="2.30" x2="9.10" y2="0.90"/><line x1="12.19" y1="3.04" x2="12.82" y2="1.79"/><line x1="14.60" y1="5.10" x2="15.73" y2="4.28"/><line x1="15.82" y1="8.04" x2="17.20" y2="7.82"/><line x1="15.57" y1="11.20" x2="16.90" y2="11.63"/><line x1="13.91" y1="13.91" x2="14.90" y2="14.90"/></g><circle cx="9.1" cy="9.1" r="6.1" fill="url(#kg)"/><circle cx="6.73" cy="11.47" r="1.34" fill="#f0eee6" opacity="0.8"/></svg>
<div style="position:absolute;left:198.2px;top:314.1px;width:13px;height:8.8px;background:#000;border:0.5px solid #3a3a3a;box-sizing:border-box;color:#2fb52f;font:5.3px/7.800000000000001px 'Liberation Sans', sans-serif;text-align:center">0</div>
<div style="position:absolute;left:212.2px;top:316.8px;font:normal 4.6px/5.29px 'Liberation Sans', sans-serif;color:#2b2b2b;white-space:nowrap;">dB</div>
<div style="position:absolute;left:150.7px;top:330.6px;width:100px;text-align:center;font:normal 4.6px/5.29px 'Liberation Sans', sans-serif;color:#2b2b2b;white-space:nowrap;">Threshold:</div>
<svg style="position:absolute;left:180.30px;top:334.30px;overflow:visible" width="18.20" height="18.20"><g stroke="#858585" stroke-width="0.95"><line x1="4.29" y1="13.91" x2="3.30" y2="14.90"/><line x1="2.63" y1="11.20" x2="1.30" y2="11.63"/><line x1="2.38" y1="8.04" x2="1.00" y2="7.82"/><line x1="3.60" y1="5.10" x2="2.47" y2="4.28"/><line x1="6.01" y1="3.04" x2="5.38" y2="1.79"/><line x1="9.10" y1="2.30" x2="9.10" y2="0.90"/><line x1="12.19" y1="3.04" x2="12.82" y2="1.79"/><line x1="14.60" y1="5.10" x2="15.73" y2="4.28"/><line x1="15.82" y1="8.04" x2="17.20" y2="7.82"/><line x1="15.57" y1="11.20" x2="16.90" y2="11.63"/><line x1="13.91" y1="13.91" x2="14.90" y2="14.90"/></g><circle cx="9.1" cy="9.1" r="6.1" fill="url(#kg)"/><circle cx="6.73" cy="11.47" r="1.34" fill="#f0eee6" opacity="0.8"/></svg>
<div style="position:absolute;left:198.2px;top:338.3px;width:13px;height:8.8px;background:#000;border:0.5px solid #3a3a3a;box-sizing:border-box;color:#2fb52f;font:5.3px/7.800000000000001px 'Liberation Sans', sans-serif;text-align:center">10</div>
<div style="position:absolute;left:212.2px;top:340.8px;font:normal 4.6px/5.29px 'Liberation Sans', sans-serif;color:#2b2b2b;white-space:nowrap;">dB</div>
<div style="position:absolute;left:150.7px;top:354.9px;width:100px;text-align:center;font:normal 4.6px/5.29px 'Liberation Sans', sans-serif;color:#2b2b2b;white-space:nowrap;">Priority:</div>
<svg style="position:absolute;left:180.30px;top:358.20px;overflow:visible" width="18.20" height="18.20"><g stroke="#858585" stroke-width="0.95"><line x1="4.29" y1="13.91" x2="3.30" y2="14.90"/><line x1="2.63" y1="11.20" x2="1.30" y2="11.63"/><line x1="2.38" y1="8.04" x2="1.00" y2="7.82"/><line x1="3.60" y1="5.10" x2="2.47" y2="4.28"/><line x1="6.01" y1="3.04" x2="5.38" y2="1.79"/><line x1="9.10" y1="2.30" x2="9.10" y2="0.90"/><line x1="12.19" y1="3.04" x2="12.82" y2="1.79"/><line x1="14.60" y1="5.10" x2="15.73" y2="4.28"/><line x1="15.82" y1="8.04" x2="17.20" y2="7.82"/><line x1="15.57" y1="11.20" x2="16.90" y2="11.63"/><line x1="13.91" y1="13.91" x2="14.90" y2="14.90"/></g><circle cx="9.1" cy="9.1" r="6.1" fill="url(#kg)"/><circle cx="6.73" cy="11.47" r="1.34" fill="#f0eee6" opacity="0.8"/></svg>
<div style="position:absolute;left:198.2px;top:362.5px;width:13px;height:8.8px;background:#000;border:0.5px solid #3a3a3a;box-sizing:border-box;color:#2fb52f;font:5.3px/7.800000000000001px 'Liberation Sans', sans-serif;text-align:center">1</div>
<div style="position:absolute;left:188.2px;top:377.4px;width:25.5px;height:10.9px;background:#fff;border:0.6px solid #d4d4d4"></div>
<div style="position:absolute;left:150.89999999999998px;top:379.0px;width:100px;text-align:center;font:normal 4.6px/5.29px 'Liberation Sans', sans-serif;color:#2b2b2b;white-space:nowrap;">Chairman</div>
<div style="position:absolute;left:194.29999999999998px;top:384.29999999999995px;width:13.4px;height:2.0px;background:#000;border-radius:0.5px"></div>
<div style="position:absolute;left:188.2px;top:392.8px;width:25.5px;height:10.9px;background:#fff;border:0.6px solid #d4d4d4"></div>
<div style="position:absolute;left:150.89999999999998px;top:394.40000000000003px;width:100px;text-align:center;font:normal 4.6px/5.29px 'Liberation Sans', sans-serif;color:#2b2b2b;white-space:nowrap;">Last Mic</div>
<div style="position:absolute;left:194.29999999999998px;top:399.7px;width:13.4px;height:2.0px;background:#000;border-radius:0.5px"></div>
<div style="position:absolute;left:226.45px;top:195.8px;width:44.8px;height:210.6px;background:#5f6e7e;border-radius:3px"></div>
<div style="position:absolute;left:227.95px;top:197.4px;width:41.8px;height:6.6px;background:#20892a;border-radius:2px 2px 0 0"></div>
<svg style="position:absolute;left:227.95px;top:197px" width="10" height="7"><path d="M1.4 3.5 L2.9 1.1 L4.4 3.5 L2.9 6.0 Z" fill="#9fd39f" opacity="0.9"/><circle cx="6.6" cy="3.8" r="1.7" fill="#fff"/></svg>
<div style="position:absolute;left:227.95px;top:206.4px;width:41.8px;height:8.0px;background:#fde7c9;border-bottom:0.8px solid #a8957c"></div>
<div style="position:absolute;left:228.54999999999998px;top:208.0px;font:bold 5.0px/5.75px 'Liberation Sans', sans-serif;color:#000;white-space:nowrap;">INST 2</div>
<div style="position:absolute;left:227.95px;top:216.8px;width:41.8px;height:9.0px;background:#8ce98c;border-bottom:0.8px solid #66c266"></div>
<div style="position:absolute;left:228.75px;top:219.3px;font:bold 5.2px/5.98px 'Liberation Sans', sans-serif;color:#0f700f;white-space:nowrap;">Level</div>
<svg style="position:absolute;left:260.75px;top:217.5px" width="8" height="8"><circle cx="4.2" cy="4" r="3.3" fill="#fff" stroke="#d6d6d6" stroke-width="0.7"/><path d="M3 3.1 L4.2 4.1 L5.4 3.1 M3 4.2 L4.2 5.2 L5.4 4.2" fill="none" stroke="#a0a0a0" stroke-width="0.55"/></svg>
<div style="position:absolute;left:227.95px;top:225.9px;width:41.8px;height:57.8px;background:#eef4fc"></div>
<div style="position:absolute;left:233.35px;top:232.0px;width:1.8px;height:33.0px;background:#e0dccd;border-left:0.5px solid #b9b9b9"></div>
<div style="position:absolute;left:231.54999999999998px;top:235.8px;width:5.4px;height:8.2px;background:linear-gradient(90deg,#cdc7b4,#e8e4d8,#cdc7b4);border:0.4px solid #b3ac9a;border-radius:1.5px"></div>
<div style="position:absolute;left:232.75px;top:240.0px;width:3.0px;height:1.0px;background:#333"></div>
<div style="position:absolute;left:230.54999999999998px;top:231.25px;width:1.9px;height:0.75px;background:#999"></div>
<div style="position:absolute;left:236.64999999999998px;top:231.25px;width:1.9px;height:0.75px;background:#999"></div>
<div style="position:absolute;left:229.45px;top:257.05px;width:3.2px;height:1.1px;background:#444"></div>
<div style="position:absolute;left:236.04999999999998px;top:257.05px;width:3.2px;height:1.1px;background:#444"></div>
<div style="position:absolute;left:230.54999999999998px;top:265.15px;width:1.9px;height:0.75px;background:#999"></div>
<div style="position:absolute;left:236.64999999999998px;top:265.15px;width:1.9px;height:0.75px;background:#999"></div>
<div style="position:absolute;left:241.25px;top:229.2px;font:normal 4.6px/5.29px 'Liberation Sans', sans-serif;color:#2b2b2b;white-space:nowrap;">+64</div>
<div style="position:absolute;left:243.35px;top:255.6px;font:normal 4.8px/5.52px 'Liberation Sans', sans-serif;color:#222;white-space:nowrap;">0</div>
<div style="position:absolute;left:241.64999999999998px;top:263.1px;font:normal 4.6px/5.29px 'Liberation Sans', sans-serif;color:#2b2b2b;white-space:nowrap;">-20</div>
<svg style="position:absolute;left:264.34999999999997px;top:227.6px" width="5" height="44"><rect x="0.6" y="0.00" width="3.1" height="3.4" rx="0.5" fill="#000"/><rect x="0.6" y="3.90" width="3.1" height="3.4" rx="0.5" fill="#000"/><rect x="0.6" y="7.80" width="3.1" height="3.4" rx="0.5" fill="#000"/><rect x="0.6" y="11.70" width="3.1" height="3.4" rx="0.5" fill="#000"/><rect x="0.6" y="15.60" width="3.1" height="3.4" rx="0.5" fill="#000"/><rect x="0.6" y="19.50" width="3.1" height="3.4" rx="0.5" fill="#000"/><rect x="0.6" y="23.40" width="3.1" height="3.4" rx="0.5" fill="#000"/><rect x="0.6" y="27.30" width="3.1" height="3.4" rx="0.5" fill="#000"/><rect x="0.6" y="31.20" width="3.1" height="3.4" rx="0.5" fill="#000"/><rect x="0.6" y="35.10" width="3.1" height="3.4" rx="0.5" fill="#000"/><rect x="0.6" y="39.00" width="3.1" height="3.4" rx="0.5" fill="#000"/><rect x="0" y="21.5" width="3.8" height="3.7" fill="#000"/></svg>
<div style="position:absolute;left:256.25px;top:227.2px;font:normal 4.3px/4.94px 'Liberation Sans', sans-serif;color:#2b2b2b;white-space:nowrap;">Clip</div>
<div style="position:absolute;left:258.05px;top:231.5px;font:normal 4.3px/4.94px 'Liberation Sans', sans-serif;color:#2b2b2b;white-space:nowrap;">20</div>
<div style="position:absolute;left:259.25px;top:249.2px;font:normal 4.3px/4.94px 'Liberation Sans', sans-serif;color:#2b2b2b;white-space:nowrap;">0</div>
<div style="position:absolute;left:256.84999999999997px;top:266.0px;font:normal 4.3px/4.94px 'Liberation Sans', sans-serif;color:#2b2b2b;white-space:nowrap;">-30</div>
<div style="position:absolute;left:229.54999999999998px;top:271.9px;width:12px;height:8.6px;background:#000;border:0.5px solid #3a3a3a;box-sizing:border-box;color:#2fb52f;font:5.3px/7.6px 'Liberation Sans', sans-serif;text-align:center">43</div>
<div style="position:absolute;left:243.45px;top:274.3px;font:normal 4.6px/5.29px 'Liberation Sans', sans-serif;color:#2b2b2b;white-space:nowrap;">dB</div>
<div style="position:absolute;left:251.35px;top:272.4px;width:17.9px;height:10.9px;background:#fff;border:0.6px solid #d6d6d6"></div>
<div style="position:absolute;left:210.45px;top:274.2px;width:100px;text-align:center;font:normal 4.6px/5.29px 'Liberation Sans', sans-serif;color:#2b2b2b;white-space:nowrap;">Mute</div>
<div style="position:absolute;left:254.04999999999998px;top:280.0px;width:12.2px;height:1.7px;background:#000"></div>
<div style="position:absolute;left:227.95px;top:286.6px;width:41.8px;height:9.2px;background:#8ce98c;border-bottom:0.8px solid #66c266"></div>
<div style="position:absolute;left:228.75px;top:289.0px;font:bold 5.0px/5.75px 'Liberation Sans', sans-serif;color:#0f700f;white-space:nowrap;">Automixer</div>
<div style="position:absolute;left:227.95px;top:295.8px;width:41.8px;height:109.1px;background:#eef4fc;border-radius:0 0 1.5px 1.5px"></div>
<div style="position:absolute;left:230.35px;top:299.0px;width:3.2px;height:3.0px;background:#000"></div>
<div style="position:absolute;left:236.14999999999998px;top:298.4px;font:normal 4.6px/5.29px 'Liberation Sans', sans-serif;color:#2b2b2b;white-space:nowrap;">Gate</div>
<div style="position:absolute;left:252.35px;top:299.0px;width:3.2px;height:3.0px;background:#000"></div>
<div style="position:absolute;left:258.45px;top:298.4px;font:normal 4.6px/5.29px 'Liberation Sans', sans-serif;color:#2b2b2b;white-space:nowrap;">Cam</div>
<div style="position:absolute;left:198.95px;top:306.8px;width:100px;text-align:center;font:normal 4.6px/5.29px 'Liberation Sans', sans-serif;color:#2b2b2b;white-space:nowrap;">Channel Bias:</div>
<svg style="position:absolute;left:228.55px;top:310.70px;overflow:visible" width="18.20" height="18.20"><g stroke="#858585" stroke-width="0.95"><line x1="4.29" y1="13.91" x2="3.30" y2="14.90"/><line x1="2.63" y1="11.20" x2="1.30" y2="11.63"/><line x1="2.38" y1="8.04" x2="1.00" y2="7.82"/><line x1="3.60" y1="5.10" x2="2.47" y2="4.28"/><line x1="6.01" y1="3.04" x2="5.38" y2="1.79"/><line x1="9.10" y1="2.30" x2="9.10" y2="0.90"/><line x1="12.19" y1="3.04" x2="12.82" y2="1.79"/><line x1="14.60" y1="5.10" x2="15.73" y2="4.28"/><line x1="15.82" y1="8.04" x2="17.20" y2="7.82"/><line x1="15.57" y1="11.20" x2="16.90" y2="11.63"/><line x1="13.91" y1="13.91" x2="14.90" y2="14.90"/></g><circle cx="9.1" cy="9.1" r="6.1" fill="url(#kg)"/><circle cx="6.73" cy="11.47" r="1.34" fill="#f0eee6" opacity="0.8"/></svg>
<div style="position:absolute;left:246.45px;top:314.1px;width:13px;height:8.8px;background:#000;border:0.5px solid #3a3a3a;box-sizing:border-box;color:#2fb52f;font:5.3px/7.800000000000001px 'Liberation Sans', sans-serif;text-align:center">0</div>
<div style="position:absolute;left:260.45px;top:316.8px;font:normal 4.6px/5.29px 'Liberation Sans', sans-serif;color:#2b2b2b;white-space:nowrap;">dB</div>
<div style="position:absolute;left:198.95px;top:330.6px;width:100px;text-align:center;font:normal 4.6px/5.29px 'Liberation Sans', sans-serif;color:#2b2b2b;white-space:nowrap;">Threshold:</div>
<svg style="position:absolute;left:228.55px;top:334.30px;overflow:visible" width="18.20" height="18.20"><g stroke="#858585" stroke-width="0.95"><line x1="4.29" y1="13.91" x2="3.30" y2="14.90"/><line x1="2.63" y1="11.20" x2="1.30" y2="11.63"/><line x1="2.38" y1="8.04" x2="1.00" y2="7.82"/><line x1="3.60" y1="5.10" x2="2.47" y2="4.28"/><line x1="6.01" y1="3.04" x2="5.38" y2="1.79"/><line x1="9.10" y1="2.30" x2="9.10" y2="0.90"/><line x1="12.19" y1="3.04" x2="12.82" y2="1.79"/><line x1="14.60" y1="5.10" x2="15.73" y2="4.28"/><line x1="15.82" y1="8.04" x2="17.20" y2="7.82"/><line x1="15.57" y1="11.20" x2="16.90" y2="11.63"/><line x1="13.91" y1="13.91" x2="14.90" y2="14.90"/></g><circle cx="9.1" cy="9.1" r="6.1" fill="url(#kg)"/><circle cx="6.73" cy="11.47" r="1.34" fill="#f0eee6" opacity="0.8"/></svg>
<div style="position:absolute;left:246.45px;top:338.3px;width:13px;height:8.8px;background:#000;border:0.5px solid #3a3a3a;box-sizing:border-box;color:#2fb52f;font:5.3px/7.800000000000001px 'Liberation Sans', sans-serif;text-align:center">10</div>
<div style="position:absolute;left:260.45px;top:340.8px;font:normal 4.6px/5.29px 'Liberation Sans', sans-serif;color:#2b2b2b;white-space:nowrap;">dB</div>
<div style="position:absolute;left:198.95px;top:354.9px;width:100px;text-align:center;font:normal 4.6px/5.29px 'Liberation Sans', sans-serif;color:#2b2b2b;white-space:nowrap;">Priority:</div>
<svg style="position:absolute;left:228.55px;top:358.20px;overflow:visible" width="18.20" height="18.20"><g stroke="#858585" stroke-width="0.95"><line x1="4.29" y1="13.91" x2="3.30" y2="14.90"/><line x1="2.63" y1="11.20" x2="1.30" y2="11.63"/><line x1="2.38" y1="8.04" x2="1.00" y2="7.82"/><line x1="3.60" y1="5.10" x2="2.47" y2="4.28"/><line x1="6.01" y1="3.04" x2="5.38" y2="1.79"/><line x1="9.10" y1="2.30" x2="9.10" y2="0.90"/><line x1="12.19" y1="3.04" x2="12.82" y2="1.79"/><line x1="14.60" y1="5.10" x2="15.73" y2="4.28"/><line x1="15.82" y1="8.04" x2="17.20" y2="7.82"/><line x1="15.57" y1="11.20" x2="16.90" y2="11.63"/><line x1="13.91" y1="13.91" x2="14.90" y2="14.90"/></g><circle cx="9.1" cy="9.1" r="6.1" fill="url(#kg)"/><circle cx="6.73" cy="11.47" r="1.34" fill="#f0eee6" opacity="0.8"/></svg>
<div style="position:absolute;left:246.45px;top:362.5px;width:13px;height:8.8px;background:#000;border:0.5px solid #3a3a3a;box-sizing:border-box;color:#2fb52f;font:5.3px/7.800000000000001px 'Liberation Sans', sans-serif;text-align:center">1</div>
<div style="position:absolute;left:236.45px;top:377.4px;width:25.5px;height:10.9px;background:#fff;border:0.6px solid #d4d4d4"></div>
<div style="position:absolute;left:199.14999999999998px;top:379.0px;width:100px;text-align:center;font:normal 4.6px/5.29px 'Liberation Sans', sans-serif;color:#2b2b2b;white-space:nowrap;">Chairman</div>
<div style="position:absolute;left:242.54999999999998px;top:384.29999999999995px;width:13.4px;height:2.0px;background:#000;border-radius:0.5px"></div>
<div style="position:absolute;left:236.45px;top:392.8px;width:25.5px;height:10.9px;background:#fff;border:0.6px solid #d4d4d4"></div>
<div style="position:absolute;left:199.14999999999998px;top:394.40000000000003px;width:100px;text-align:center;font:normal 4.6px/5.29px 'Liberation Sans', sans-serif;color:#2b2b2b;white-space:nowrap;">Last Mic</div>
<div style="position:absolute;left:242.54999999999998px;top:399.7px;width:13.4px;height:2.0px;background:#000;border-radius:0.5px"></div>
<div style="position:absolute;left:274.7px;top:195.8px;width:44.8px;height:210.6px;background:#5f6e7e;border-radius:3px"></div>
<div style="position:absolute;left:276.2px;top:197.4px;width:41.8px;height:6.6px;background:#20892a;border-radius:2px 2px 0 0"></div>
<svg style="position:absolute;left:276.2px;top:197px" width="10" height="7"><path d="M1.4 3.5 L2.9 1.1 L4.4 3.5 L2.9 6.0 Z" fill="#9fd39f" opacity="0.9"/><circle cx="6.6" cy="3.8" r="1.7" fill="#fff"/></svg>
<div style="position:absolute;left:276.2px;top:206.4px;width:41.8px;height:8.0px;background:#fde7c9;border-bottom:0.8px solid #a8957c"></div>
<div style="position:absolute;left:276.8px;top:208.0px;font:bold 5.0px/5.75px 'Liberation Sans', sans-serif;color:#000;white-space:nowrap;">INST 3</div>
<div style="position:absolute;left:276.2px;top:216.8px;width:41.8px;height:9.0px;background:#8ce98c;border-bottom:0.8px solid #66c266"></div>
<div style="position:absolute;left:277.0px;top:219.3px;font:bold 5.2px/5.98px 'Liberation Sans', sans-serif;color:#0f700f;white-space:nowrap;">Level</div>
<svg style="position:absolute;left:309.0px;top:217.5px" width="8" height="8"><circle cx="4.2" cy="4" r="3.3" fill="#fff" stroke="#d6d6d6" stroke-width="0.7"/><path d="M3 3.1 L4.2 4.1 L5.4 3.1 M3 4.2 L4.2 5.2 L5.4 4.2" fill="none" stroke="#a0a0a0" stroke-width="0.55"/></svg>
<div style="position:absolute;left:276.2px;top:225.9px;width:41.8px;height:57.8px;background:#eef4fc"></div>
<div style="position:absolute;left:281.59999999999997px;top:232.0px;width:1.8px;height:33.0px;background:#e0dccd;border-left:0.5px solid #b9b9b9"></div>
<div style="position:absolute;left:279.8px;top:235.8px;width:5.4px;height:8.2px;background:linear-gradient(90deg,#cdc7b4,#e8e4d8,#cdc7b4);border:0.4px solid #b3ac9a;border-radius:1.5px"></div>
<div style="position:absolute;left:281.0px;top:240.0px;width:3.0px;height:1.0px;background:#333"></div>
<div style="position:absolute;left:278.8px;top:231.25px;width:1.9px;height:0.75px;background:#999"></div>
<div style="position:absolute;left:284.9px;top:231.25px;width:1.9px;height:0.75px;background:#999"></div>
<div style="position:absolute;left:277.7px;top:257.05px;width:3.2px;height:1.1px;background:#444"></div>
<div style="position:absolute;left:284.3px;top:257.05px;width:3.2px;height:1.1px;background:#444"></div>
<div style="position:absolute;left:278.8px;top:265.15px;width:1.9px;height:0.75px;background:#999"></div>
<div style="position:absolute;left:284.9px;top:265.15px;width:1.9px;height:0.75px;background:#999"></div>
<div style="position:absolute;left:289.5px;top:229.2px;font:normal 4.6px/5.29px 'Liberation Sans', sans-serif;color:#2b2b2b;white-space:nowrap;">+64</div>
<div style="position:absolute;left:291.59999999999997px;top:255.6px;font:normal 4.8px/5.52px 'Liberation Sans', sans-serif;color:#222;white-space:nowrap;">0</div>
<div style="position:absolute;left:289.9px;top:263.1px;font:normal 4.6px/5.29px 'Liberation Sans', sans-serif;color:#2b2b2b;white-space:nowrap;">-20</div>
<svg style="position:absolute;left:312.59999999999997px;top:227.6px" width="5" height="44"><rect x="0.6" y="0.00" width="3.1" height="3.4" rx="0.5" fill="#000"/><rect x="0.6" y="3.90" width="3.1" height="3.4" rx="0.5" fill="#000"/><rect x="0.6" y="7.80" width="3.1" height="3.4" rx="0.5" fill="#000"/><rect x="0.6" y="11.70" width="3.1" height="3.4" rx="0.5" fill="#000"/><rect x="0.6" y="15.60" width="3.1" height="3.4" rx="0.5" fill="#000"/><rect x="0.6" y="19.50" width="3.1" height="3.4" rx="0.5" fill="#000"/><rect x="0.6" y="23.40" width="3.1" height="3.4" rx="0.5" fill="#000"/><rect x="0.6" y="27.30" width="3.1" height="3.4" rx="0.5" fill="#000"/><rect x="0.6" y="31.20" width="3.1" height="3.4" rx="0.5" fill="#000"/><rect x="0.6" y="35.10" width="3.1" height="3.4" rx="0.5" fill="#000"/><rect x="0.6" y="39.00" width="3.1" height="3.4" rx="0.5" fill="#000"/><rect x="0" y="21.5" width="3.8" height="3.7" fill="#000"/></svg>
<div style="position:absolute;left:304.5px;top:227.2px;font:normal 4.3px/4.94px 'Liberation Sans', sans-serif;color:#2b2b2b;white-space:nowrap;">Clip</div>
<div style="position:absolute;left:306.3px;top:231.5px;font:normal 4.3px/4.94px 'Liberation Sans', sans-serif;color:#2b2b2b;white-space:nowrap;">20</div>
<div style="position:absolute;left:307.5px;top:249.2px;font:normal 4.3px/4.94px 'Liberation Sans', sans-serif;color:#2b2b2b;white-space:nowrap;">0</div>
<div style="position:absolute;left:305.09999999999997px;top:266.0px;font:normal 4.3px/4.94px 'Liberation Sans', sans-serif;color:#2b2b2b;white-space:nowrap;">-30</div>
<div style="position:absolute;left:277.8px;top:271.9px;width:12px;height:8.6px;background:#000;border:0.5px solid #3a3a3a;box-sizing:border-box;color:#2fb52f;font:5.3px/7.6px 'Liberation Sans', sans-serif;text-align:center">43</div>
<div style="position:absolute;left:291.7px;top:274.3px;font:normal 4.6px/5.29px 'Liberation Sans', sans-serif;color:#2b2b2b;white-space:nowrap;">dB</div>
<div style="position:absolute;left:299.59999999999997px;top:272.4px;width:17.9px;height:10.9px;background:#fff;border:0.6px solid #d6d6d6"></div>
<div style="position:absolute;left:258.7px;top:274.2px;width:100px;text-align:center;font:normal 4.6px/5.29px 'Liberation Sans', sans-serif;color:#2b2b2b;white-space:nowrap;">Mute</div>
<div style="position:absolute;left:302.3px;top:280.0px;width:12.2px;height:1.7px;background:#000"></div>
<div style="position:absolute;left:276.2px;top:286.6px;width:41.8px;height:9.2px;background:#8ce98c;border-bottom:0.8px solid #66c266"></div>
<div style="position:absolute;left:277.0px;top:289.0px;font:bold 5.0px/5.75px 'Liberation Sans', sans-serif;color:#0f700f;white-space:nowrap;">Automixer</div>
<div style="position:absolute;left:276.2px;top:295.8px;width:41.8px;height:109.1px;background:#eef4fc;border-radius:0 0 1.5px 1.5px"></div>
<div style="position:absolute;left:278.59999999999997px;top:299.0px;width:3.2px;height:3.0px;background:#000"></div>
<div style="position:absolute;left:284.4px;top:298.4px;font:normal 4.6px/5.29px 'Liberation Sans', sans-serif;color:#2b2b2b;white-space:nowrap;">Gate</div>
<div style="position:absolute;left:300.59999999999997px;top:299.0px;width:3.2px;height:3.0px;background:#000"></div>
<div style="position:absolute;left:306.7px;top:298.4px;font:normal 4.6px/5.29px 'Liberation Sans', sans-serif;color:#2b2b2b;white-space:nowrap;">Cam</div>
<div style="position:absolute;left:247.2px;top:306.8px;width:100px;text-align:center;font:normal 4.6px/5.29px 'Liberation Sans', sans-serif;color:#2b2b2b;white-space:nowrap;">Channel Bias:</div>
<svg style="position:absolute;left:276.80px;top:310.70px;overflow:visible" width="18.20" height="18.20"><g stroke="#858585" stroke-width="0.95"><line x1="4.29" y1="13.91" x2="3.30" y2="14.90"/><line x1="2.63" y1="11.20" x2="1.30" y2="11.63"/><line x1="2.38" y1="8.04" x2="1.00" y2="7.82"/><line x1="3.60" y1="5.10" x2="2.47" y2="4.28"/><line x1="6.01" y1="3.04" x2="5.38" y2="1.79"/><line x1="9.10" y1="2.30" x2="9.10" y2="0.90"/><line x1="12.19" y1="3.04" x2="12.82" y2="1.79"/><line x1="14.60" y1="5.10" x2="15.73" y2="4.28"/><line x1="15.82" y1="8.04" x2="17.20" y2="7.82"/><line x1="15.57" y1="11.20" x2="16.90" y2="11.63"/><line x1="13.91" y1="13.91" x2="14.90" y2="14.90"/></g><circle cx="9.1" cy="9.1" r="6.1" fill="url(#kg)"/><circle cx="6.73" cy="11.47" r="1.34" fill="#f0eee6" opacity="0.8"/></svg>
<div style="position:absolute;left:294.7px;top:314.1px;width:13px;height:8.8px;background:#000;border:0.5px solid #3a3a3a;box-sizing:border-box;color:#2fb52f;font:5.3px/7.800000000000001px 'Liberation Sans', sans-serif;text-align:center">0</div>
<div style="position:absolute;left:308.7px;top:316.8px;font:normal 4.6px/5.29px 'Liberation Sans', sans-serif;color:#2b2b2b;white-space:nowrap;">dB</div>
<div style="position:absolute;left:247.2px;top:330.6px;width:100px;text-align:center;font:normal 4.6px/5.29px 'Liberation Sans', sans-serif;color:#2b2b2b;white-space:nowrap;">Threshold:</div>
<svg style="position:absolute;left:276.80px;top:334.30px;overflow:visible" width="18.20" height="18.20"><g stroke="#858585" stroke-width="0.95"><line x1="4.29" y1="13.91" x2="3.30" y2="14.90"/><line x1="2.63" y1="11.20" x2="1.30" y2="11.63"/><line x1="2.38" y1="8.04" x2="1.00" y2="7.82"/><line x1="3.60" y1="5.10" x2="2.47" y2="4.28"/><line x1="6.01" y1="3.04" x2="5.38" y2="1.79"/><line x1="9.10" y1="2.30" x2="9.10" y2="0.90"/><line x1="12.19" y1="3.04" x2="12.82" y2="1.79"/><line x1="14.60" y1="5.10" x2="15.73" y2="4.28"/><line x1="15.82" y1="8.04" x2="17.20" y2="7.82"/><line x1="15.57" y1="11.20" x2="16.90" y2="11.63"/><line x1="13.91" y1="13.91" x2="14.90" y2="14.90"/></g><circle cx="9.1" cy="9.1" r="6.1" fill="url(#kg)"/><circle cx="6.73" cy="11.47" r="1.34" fill="#f0eee6" opacity="0.8"/></svg>
<div style="position:absolute;left:294.7px;top:338.3px;width:13px;height:8.8px;background:#000;border:0.5px solid #3a3a3a;box-sizing:border-box;color:#2fb52f;font:5.3px/7.800000000000001px 'Liberation Sans', sans-serif;text-align:center">10</div>
<div style="position:absolute;left:308.7px;top:340.8px;font:normal 4.6px/5.29px 'Liberation Sans', sans-serif;color:#2b2b2b;white-space:nowrap;">dB</div>
<div style="position:absolute;left:247.2px;top:354.9px;width:100px;text-align:center;font:normal 4.6px/5.29px 'Liberation Sans', sans-serif;color:#2b2b2b;white-space:nowrap;">Priority:</div>
<svg style="position:absolute;left:276.80px;top:358.20px;overflow:visible" width="18.20" height="18.20"><g stroke="#858585" stroke-width="0.95"><line x1="4.29" y1="13.91" x2="3.30" y2="14.90"/><line x1="2.63" y1="11.20" x2="1.30" y2="11.63"/><line x1="2.38" y1="8.04" x2="1.00" y2="7.82"/><line x1="3.60" y1="5.10" x2="2.47" y2="4.28"/><line x1="6.01" y1="3.04" x2="5.38" y2="1.79"/><line x1="9.10" y1="2.30" x2="9.10" y2="0.90"/><line x1="12.19" y1="3.04" x2="12.82" y2="1.79"/><line x1="14.60" y1="5.10" x2="15.73" y2="4.28"/><line x1="15.82" y1="8.04" x2="17.20" y2="7.82"/><line x1="15.57" y1="11.20" x2="16.90" y2="11.63"/><line x1="13.91" y1="13.91" x2="14.90" y2="14.90"/></g><circle cx="9.1" cy="9.1" r="6.1" fill="url(#kg)"/><circle cx="6.73" cy="11.47" r="1.34" fill="#f0eee6" opacity="0.8"/></svg>
<div style="position:absolute;left:294.7px;top:362.5px;width:13px;height:8.8px;background:#000;border:0.5px solid #3a3a3a;box-sizing:border-box;color:#2fb52f;font:5.3px/7.800000000000001px 'Liberation Sans', sans-serif;text-align:center">1</div>
<div style="position:absolute;left:284.7px;top:377.4px;width:25.5px;height:10.9px;background:#fff;border:0.6px solid #d4d4d4"></div>
<div style="position:absolute;left:247.39999999999998px;top:379.0px;width:100px;text-align:center;font:normal 4.6px/5.29px 'Liberation Sans', sans-serif;color:#2b2b2b;white-space:nowrap;">Chairman</div>
<div style="position:absolute;left:290.8px;top:384.29999999999995px;width:13.4px;height:2.0px;background:#000;border-radius:0.5px"></div>
<div style="position:absolute;left:284.7px;top:392.8px;width:25.5px;height:10.9px;background:#fff;border:0.6px solid #d4d4d4"></div>
<div style="position:absolute;left:247.39999999999998px;top:394.40000000000003px;width:100px;text-align:center;font:normal 4.6px/5.29px 'Liberation Sans', sans-serif;color:#2b2b2b;white-space:nowrap;">Last Mic</div>
<div style="position:absolute;left:290.8px;top:399.7px;width:13.4px;height:2.0px;background:#000;border-radius:0.5px"></div>
<div style="position:absolute;left:322.95px;top:195.8px;width:44.8px;height:210.6px;background:#5f6e7e;border-radius:3px"></div>
<div style="position:absolute;left:324.45px;top:197.4px;width:41.8px;height:6.6px;background:#20892a;border-radius:2px 2px 0 0"></div>
<svg style="position:absolute;left:324.45px;top:197px" width="10" height="7"><path d="M1.4 3.5 L2.9 1.1 L4.4 3.5 L2.9 6.0 Z" fill="#9fd39f" opacity="0.9"/><circle cx="6.6" cy="3.8" r="1.7" fill="#fff"/></svg>
<div style="position:absolute;left:324.45px;top:206.4px;width:41.8px;height:8.0px;background:#fde7c9;border-bottom:0.8px solid #a8957c"></div>
<div style="position:absolute;left:325.05px;top:208.0px;font:bold 5.0px/5.75px 'Liberation Sans', sans-serif;color:#000;white-space:nowrap;">INST 4</div>
<div style="position:absolute;left:324.45px;top:216.8px;width:41.8px;height:9.0px;background:#8ce98c;border-bottom:0.8px solid #66c266"></div>
<div style="position:absolute;left:325.25px;top:219.3px;font:bold 5.2px/5.98px 'Liberation Sans', sans-serif;color:#0f700f;white-space:nowrap;">Level</div>
<svg style="position:absolute;left:357.25px;top:217.5px" width="8" height="8"><circle cx="4.2" cy="4" r="3.3" fill="#fff" stroke="#d6d6d6" stroke-width="0.7"/><path d="M3 3.1 L4.2 4.1 L5.4 3.1 M3 4.2 L4.2 5.2 L5.4 4.2" fill="none" stroke="#a0a0a0" stroke-width="0.55"/></svg>
<div style="position:absolute;left:324.45px;top:225.9px;width:41.8px;height:57.8px;background:#eef4fc"></div>
<div style="position:absolute;left:329.84999999999997px;top:232.0px;width:1.8px;height:33.0px;background:#e0dccd;border-left:0.5px solid #b9b9b9"></div>
<div style="position:absolute;left:328.05px;top:235.8px;width:5.4px;height:8.2px;background:linear-gradient(90deg,#cdc7b4,#e8e4d8,#cdc7b4);border:0.4px solid #b3ac9a;border-radius:1.5px"></div>
<div style="position:absolute;left:329.25px;top:240.0px;width:3.0px;height:1.0px;background:#333"></div>
<div style="position:absolute;left:327.05px;top:231.25px;width:1.9px;height:0.75px;background:#999"></div>
<div style="position:absolute;left:333.15px;top:231.25px;width:1.9px;height:0.75px;background:#999"></div>
<div style="position:absolute;left:325.95px;top:257.05px;width:3.2px;height:1.1px;background:#444"></div>
<div style="position:absolute;left:332.55px;top:257.05px;width:3.2px;height:1.1px;background:#444"></div>
<div style="position:absolute;left:327.05px;top:265.15px;width:1.9px;height:0.75px;background:#999"></div>
<div style="position:absolute;left:333.15px;top:265.15px;width:1.9px;height:0.75px;background:#999"></div>
<div style="position:absolute;left:337.75px;top:229.2px;font:normal 4.6px/5.29px 'Liberation Sans', sans-serif;color:#2b2b2b;white-space:nowrap;">+64</div>
<div style="position:absolute;left:339.84999999999997px;top:255.6px;font:normal 4.8px/5.52px 'Liberation Sans', sans-serif;color:#222;white-space:nowrap;">0</div>
<div style="position:absolute;left:338.15px;top:263.1px;font:normal 4.6px/5.29px 'Liberation Sans', sans-serif;color:#2b2b2b;white-space:nowrap;">-20</div>
<svg style="position:absolute;left:360.84999999999997px;top:227.6px" width="5" height="44"><rect x="0.6" y="0.00" width="3.1" height="3.4" rx="0.5" fill="#000"/><rect x="0.6" y="3.90" width="3.1" height="3.4" rx="0.5" fill="#000"/><rect x="0.6" y="7.80" width="3.1" height="3.4" rx="0.5" fill="#000"/><rect x="0.6" y="11.70" width="3.1" height="3.4" rx="0.5" fill="#000"/><rect x="0.6" y="15.60" width="3.1" height="3.4" rx="0.5" fill="#000"/><rect x="0.6" y="19.50" width="3.1" height="3.4" rx="0.5" fill="#000"/><rect x="0.6" y="23.40" width="3.1" height="3.4" rx="0.5" fill="#000"/><rect x="0.6" y="27.30" width="3.1" height="3.4" rx="0.5" fill="#000"/><rect x="0.6" y="31.20" width="3.1" height="3.4" rx="0.5" fill="#000"/><rect x="0.6" y="35.10" width="3.1" height="3.4" rx="0.5" fill="#000"/><rect x="0.6" y="39.00" width="3.1" height="3.4" rx="0.5" fill="#000"/><rect x="0" y="21.5" width="3.8" height="3.7" fill="#000"/></svg>
<div style="position:absolute;left:352.75px;top:227.2px;font:normal 4.3px/4.94px 'Liberation Sans', sans-serif;color:#2b2b2b;white-space:nowrap;">Clip</div>
<div style="position:absolute;left:354.55px;top:231.5px;font:normal 4.3px/4.94px 'Liberation Sans', sans-serif;color:#2b2b2b;white-space:nowrap;">20</div>
<div style="position:absolute;left:355.75px;top:249.2px;font:normal 4.3px/4.94px 'Liberation Sans', sans-serif;color:#2b2b2b;white-space:nowrap;">0</div>
<div style="position:absolute;left:353.34999999999997px;top:266.0px;font:normal 4.3px/4.94px 'Liberation Sans', sans-serif;color:#2b2b2b;white-space:nowrap;">-30</div>
<div style="position:absolute;left:326.05px;top:271.9px;width:12px;height:8.6px;background:#000;border:0.5px solid #3a3a3a;box-sizing:border-box;color:#2fb52f;font:5.3px/7.6px 'Liberation Sans', sans-serif;text-align:center">43</div>
<div style="position:absolute;left:339.95px;top:274.3px;font:normal 4.6px/5.29px 'Liberation Sans', sans-serif;color:#2b2b2b;white-space:nowrap;">dB</div>
<div style="position:absolute;left:347.84999999999997px;top:272.4px;width:17.9px;height:10.9px;background:#fff;border:0.6px solid #d6d6d6"></div>
<div style="position:absolute;left:306.95px;top:274.2px;width:100px;text-align:center;font:normal 4.6px/5.29px 'Liberation Sans', sans-serif;color:#2b2b2b;white-space:nowrap;">Mute</div>
<div style="position:absolute;left:350.55px;top:280.0px;width:12.2px;height:1.7px;background:#000"></div>
<div style="position:absolute;left:324.45px;top:286.6px;width:41.8px;height:9.2px;background:#8ce98c;border-bottom:0.8px solid #66c266"></div>
<div style="position:absolute;left:325.25px;top:289.0px;font:bold 5.0px/5.75px 'Liberation Sans', sans-serif;color:#0f700f;white-space:nowrap;">Automixer</div>
<div style="position:absolute;left:324.45px;top:295.8px;width:41.8px;height:109.1px;background:#eef4fc;border-radius:0 0 1.5px 1.5px"></div>
<div style="position:absolute;left:326.84999999999997px;top:299.0px;width:3.2px;height:3.0px;background:#000"></div>
<div style="position:absolute;left:332.65px;top:298.4px;font:normal 4.6px/5.29px 'Liberation Sans', sans-serif;color:#2b2b2b;white-space:nowrap;">Gate</div>
<div style="position:absolute;left:348.84999999999997px;top:299.0px;width:3.2px;height:3.0px;background:#000"></div>
<div style="position:absolute;left:354.95px;top:298.4px;font:normal 4.6px/5.29px 'Liberation Sans', sans-serif;color:#2b2b2b;white-space:nowrap;">Cam</div>
<div style="position:absolute;left:295.45px;top:306.8px;width:100px;text-align:center;font:normal 4.6px/5.29px 'Liberation Sans', sans-serif;color:#2b2b2b;white-space:nowrap;">Channel Bias:</div>
<svg style="position:absolute;left:325.05px;top:310.70px;overflow:visible" width="18.20" height="18.20"><g stroke="#858585" stroke-width="0.95"><line x1="4.29" y1="13.91" x2="3.30" y2="14.90"/><line x1="2.63" y1="11.20" x2="1.30" y2="11.63"/><line x1="2.38" y1="8.04" x2="1.00" y2="7.82"/><line x1="3.60" y1="5.10" x2="2.47" y2="4.28"/><line x1="6.01" y1="3.04" x2="5.38" y2="1.79"/><line x1="9.10" y1="2.30" x2="9.10" y2="0.90"/><line x1="12.19" y1="3.04" x2="12.82" y2="1.79"/><line x1="14.60" y1="5.10" x2="15.73" y2="4.28"/><line x1="15.82" y1="8.04" x2="17.20" y2="7.82"/><line x1="15.57" y1="11.20" x2="16.90" y2="11.63"/><line x1="13.91" y1="13.91" x2="14.90" y2="14.90"/></g><circle cx="9.1" cy="9.1" r="6.1" fill="url(#kg)"/><circle cx="6.73" cy="11.47" r="1.34" fill="#f0eee6" opacity="0.8"/></svg>
<div style="position:absolute;left:342.95px;top:314.1px;width:13px;height:8.8px;background:#000;border:0.5px solid #3a3a3a;box-sizing:border-box;color:#2fb52f;font:5.3px/7.800000000000001px 'Liberation Sans', sans-serif;text-align:center">0</div>
<div style="position:absolute;left:356.95px;top:316.8px;font:normal 4.6px/5.29px 'Liberation Sans', sans-serif;color:#2b2b2b;white-space:nowrap;">dB</div>
<div style="position:absolute;left:295.45px;top:330.6px;width:100px;text-align:center;font:normal 4.6px/5.29px 'Liberation Sans', sans-serif;color:#2b2b2b;white-space:nowrap;">Threshold:</div>
<svg style="position:absolute;left:325.05px;top:334.30px;overflow:visible" width="18.20" height="18.20"><g stroke="#858585" stroke-width="0.95"><line x1="4.29" y1="13.91" x2="3.30" y2="14.90"/><line x1="2.63" y1="11.20" x2="1.30" y2="11.63"/><line x1="2.38" y1="8.04" x2="1.00" y2="7.82"/><line x1="3.60" y1="5.10" x2="2.47" y2="4.28"/><line x1="6.01" y1="3.04" x2="5.38" y2="1.79"/><line x1="9.10" y1="2.30" x2="9.10" y2="0.90"/><line x1="12.19" y1="3.04" x2="12.82" y2="1.79"/><line x1="14.60" y1="5.10" x2="15.73" y2="4.28"/><line x1="15.82" y1="8.04" x2="17.20" y2="7.82"/><line x1="15.57" y1="11.20" x2="16.90" y2="11.63"/><line x1="13.91" y1="13.91" x2="14.90" y2="14.90"/></g><circle cx="9.1" cy="9.1" r="6.1" fill="url(#kg)"/><circle cx="6.73" cy="11.47" r="1.34" fill="#f0eee6" opacity="0.8"/></svg>
<div style="position:absolute;left:342.95px;top:338.3px;width:13px;height:8.8px;background:#000;border:0.5px solid #3a3a3a;box-sizing:border-box;color:#2fb52f;font:5.3px/7.800000000000001px 'Liberation Sans', sans-serif;text-align:center">10</div>
<div style="position:absolute;left:356.95px;top:340.8px;font:normal 4.6px/5.29px 'Liberation Sans', sans-serif;color:#2b2b2b;white-space:nowrap;">dB</div>
<div style="position:absolute;left:295.45px;top:354.9px;width:100px;text-align:center;font:normal 4.6px/5.29px 'Liberation Sans', sans-serif;color:#2b2b2b;white-space:nowrap;">Priority:</div>
<svg style="position:absolute;left:325.05px;top:358.20px;overflow:visible" width="18.20" height="18.20"><g stroke="#858585" stroke-width="0.95"><line x1="4.29" y1="13.91" x2="3.30" y2="14.90"/><line x1="2.63" y1="11.20" x2="1.30" y2="11.63"/><line x1="2.38" y1="8.04" x2="1.00" y2="7.82"/><line x1="3.60" y1="5.10" x2="2.47" y2="4.28"/><line x1="6.01" y1="3.04" x2="5.38" y2="1.79"/><line x1="9.10" y1="2.30" x2="9.10" y2="0.90"/><line x1="12.19" y1="3.04" x2="12.82" y2="1.79"/><line x1="14.60" y1="5.10" x2="15.73" y2="4.28"/><line x1="15.82" y1="8.04" x2="17.20" y2="7.82"/><line x1="15.57" y1="11.20" x2="16.90" y2="11.63"/><line x1="13.91" y1="13.91" x2="14.90" y2="14.90"/></g><circle cx="9.1" cy="9.1" r="6.1" fill="url(#kg)"/><circle cx="6.73" cy="11.47" r="1.34" fill="#f0eee6" opacity="0.8"/></svg>
<div style="position:absolute;left:342.95px;top:362.5px;width:13px;height:8.8px;background:#000;border:0.5px solid #3a3a3a;box-sizing:border-box;color:#2fb52f;font:5.3px/7.800000000000001px 'Liberation Sans', sans-serif;text-align:center">1</div>
<div style="position:absolute;left:332.95px;top:377.4px;width:25.5px;height:10.9px;background:#fff;border:0.6px solid #d4d4d4"></div>
<div style="position:absolute;left:295.65px;top:379.0px;width:100px;text-align:center;font:normal 4.6px/5.29px 'Liberation Sans', sans-serif;color:#2b2b2b;white-space:nowrap;">Chairman</div>
<div style="position:absolute;left:339.05px;top:384.29999999999995px;width:13.4px;height:2.0px;background:#000;border-radius:0.5px"></div>
<div style="position:absolute;left:332.95px;top:392.8px;width:25.5px;height:10.9px;background:#fff;border:0.6px solid #d4d4d4"></div>
<div style="position:absolute;left:295.65px;top:394.40000000000003px;width:100px;text-align:center;font:normal 4.6px/5.29px 'Liberation Sans', sans-serif;color:#2b2b2b;white-space:nowrap;">Last Mic</div>
<div style="position:absolute;left:339.05px;top:399.7px;width:13.4px;height:2.0px;background:#000;border-radius:0.5px"></div>
<div style="position:absolute;left:371.2px;top:195.8px;width:44.8px;height:210.6px;background:#5f6e7e;border-radius:3px"></div>
<div style="position:absolute;left:372.7px;top:197.4px;width:41.8px;height:6.6px;background:#20892a;border-radius:2px 2px 0 0"></div>
<svg style="position:absolute;left:372.7px;top:197px" width="10" height="7"><path d="M1.4 3.5 L2.9 1.1 L4.4 3.5 L2.9 6.0 Z" fill="#9fd39f" opacity="0.9"/><circle cx="6.6" cy="3.8" r="1.7" fill="#fff"/></svg>
<div style="position:absolute;left:372.7px;top:206.4px;width:41.8px;height:8.0px;background:#fde7c9;border-bottom:0.8px solid #a8957c"></div>
<div style="position:absolute;left:373.3px;top:208.0px;font:bold 5.0px/5.75px 'Liberation Sans', sans-serif;color:#000;white-space:nowrap;">INST 5</div>
<div style="position:absolute;left:372.7px;top:216.8px;width:41.8px;height:9.0px;background:#8ce98c;border-bottom:0.8px solid #66c266"></div>
<div style="position:absolute;left:373.5px;top:219.3px;font:bold 5.2px/5.98px 'Liberation Sans', sans-serif;color:#0f700f;white-space:nowrap;">Level</div>
<svg style="position:absolute;left:405.5px;top:217.5px" width="8" height="8"><circle cx="4.2" cy="4" r="3.3" fill="#fff" stroke="#d6d6d6" stroke-width="0.7"/><path d="M3 3.1 L4.2 4.1 L5.4 3.1 M3 4.2 L4.2 5.2 L5.4 4.2" fill="none" stroke="#a0a0a0" stroke-width="0.55"/></svg>
<div style="position:absolute;left:372.7px;top:225.9px;width:41.8px;height:57.8px;background:#eef4fc"></div>
<div style="position:absolute;left:378.09999999999997px;top:232.0px;width:1.8px;height:33.0px;background:#e0dccd;border-left:0.5px solid #b9b9b9"></div>
<div style="position:absolute;left:376.3px;top:235.8px;width:5.4px;height:8.2px;background:linear-gradient(90deg,#cdc7b4,#e8e4d8,#cdc7b4);border:0.4px solid #b3ac9a;border-radius:1.5px"></div>
<div style="position:absolute;left:377.5px;top:240.0px;width:3.0px;height:1.0px;background:#333"></div>
<div style="position:absolute;left:375.3px;top:231.25px;width:1.9px;height:0.75px;background:#999"></div>
<div style="position:absolute;left:381.4px;top:231.25px;width:1.9px;height:0.75px;background:#999"></div>
<div style="position:absolute;left:374.2px;top:257.05px;width:3.2px;height:1.1px;background:#444"></div>
<div style="position:absolute;left:380.8px;top:257.05px;width:3.2px;height:1.1px;background:#444"></div>
<div style="position:absolute;left:375.3px;top:265.15px;width:1.9px;height:0.75px;background:#999"></div>
<div style="position:absolute;left:381.4px;top:265.15px;width:1.9px;height:0.75px;background:#999"></div>
<div style="position:absolute;left:386.0px;top:229.2px;font:normal 4.6px/5.29px 'Liberation Sans', sans-serif;color:#2b2b2b;white-space:nowrap;">+64</div>
<div style="position:absolute;left:388.09999999999997px;top:255.6px;font:normal 4.8px/5.52px 'Liberation Sans', sans-serif;color:#222;white-space:nowrap;">0</div>
<div style="position:absolute;left:386.4px;top:263.1px;font:normal 4.6px/5.29px 'Liberation Sans', sans-serif;color:#2b2b2b;white-space:nowrap;">-20</div>
<svg style="position:absolute;left:409.09999999999997px;top:227.6px" width="5" height="44"><rect x="0.6" y="0.00" width="3.1" height="3.4" rx="0.5" fill="#000"/><rect x="0.6" y="3.90" width="3.1" height="3.4" rx="0.5" fill="#000"/><rect x="0.6" y="7.80" width="3.1" height="3.4" rx="0.5" fill="#000"/><rect x="0.6" y="11.70" width="3.1" height="3.4" rx="0.5" fill="#000"/><rect x="0.6" y="15.60" width="3.1" height="3.4" rx="0.5" fill="#000"/><rect x="0.6" y="19.50" width="3.1" height="3.4" rx="0.5" fill="#000"/><rect x="0.6" y="23.40" width="3.1" height="3.4" rx="0.5" fill="#000"/><rect x="0.6" y="27.30" width="3.1" height="3.4" rx="0.5" fill="#000"/><rect x="0.6" y="31.20" width="3.1" height="3.4" rx="0.5" fill="#000"/><rect x="0.6" y="35.10" width="3.1" height="3.4" rx="0.5" fill="#000"/><rect x="0.6" y="39.00" width="3.1" height="3.4" rx="0.5" fill="#000"/><rect x="0" y="21.5" width="3.8" height="3.7" fill="#000"/></svg>
<div style="position:absolute;left:401.0px;top:227.2px;font:normal 4.3px/4.94px 'Liberation Sans', sans-serif;color:#2b2b2b;white-space:nowrap;">Clip</div>
<div style="position:absolute;left:402.8px;top:231.5px;font:normal 4.3px/4.94px 'Liberation Sans', sans-serif;color:#2b2b2b;white-space:nowrap;">20</div>
<div style="position:absolute;left:404.0px;top:249.2px;font:normal 4.3px/4.94px 'Liberation Sans', sans-serif;color:#2b2b2b;white-space:nowrap;">0</div>
<div style="position:absolute;left:401.59999999999997px;top:266.0px;font:normal 4.3px/4.94px 'Liberation Sans', sans-serif;color:#2b2b2b;white-space:nowrap;">-30</div>
<div style="position:absolute;left:374.3px;top:271.9px;width:12px;height:8.6px;background:#000;border:0.5px solid #3a3a3a;box-sizing:border-box;color:#2fb52f;font:5.3px/7.6px 'Liberation Sans', sans-serif;text-align:center">43</div>
<div style="position:absolute;left:388.2px;top:274.3px;font:normal 4.6px/5.29px 'Liberation Sans', sans-serif;color:#2b2b2b;white-space:nowrap;">dB</div>
<div style="position:absolute;left:396.09999999999997px;top:272.4px;width:17.9px;height:10.9px;background:#fff;border:0.6px solid #d6d6d6"></div>
<div style="position:absolute;left:355.2px;top:274.2px;width:100px;text-align:center;font:normal 4.6px/5.29px 'Liberation Sans', sans-serif;color:#2b2b2b;white-space:nowrap;">Mute</div>
<div style="position:absolute;left:398.8px;top:280.0px;width:12.2px;height:1.7px;background:#000"></div>
<div style="position:absolute;left:372.7px;top:286.6px;width:41.8px;height:9.2px;background:#8ce98c;border-bottom:0.8px solid #66c266"></div>
<div style="position:absolute;left:373.5px;top:289.0px;font:bold 5.0px/5.75px 'Liberation Sans', sans-serif;color:#0f700f;white-space:nowrap;">Automixer</div>
<div style="position:absolute;left:372.7px;top:295.8px;width:41.8px;height:109.1px;background:#eef4fc;border-radius:0 0 1.5px 1.5px"></div>
<div style="position:absolute;left:375.09999999999997px;top:299.0px;width:3.2px;height:3.0px;background:#000"></div>
<div style="position:absolute;left:380.9px;top:298.4px;font:normal 4.6px/5.29px 'Liberation Sans', sans-serif;color:#2b2b2b;white-space:nowrap;">Gate</div>
<div style="position:absolute;left:397.09999999999997px;top:299.0px;width:3.2px;height:3.0px;background:#000"></div>
<div style="position:absolute;left:403.2px;top:298.4px;font:normal 4.6px/5.29px 'Liberation Sans', sans-serif;color:#2b2b2b;white-space:nowrap;">Cam</div>
<div style="position:absolute;left:343.7px;top:306.8px;width:100px;text-align:center;font:normal 4.6px/5.29px 'Liberation Sans', sans-serif;color:#2b2b2b;white-space:nowrap;">Channel Bias:</div>
<svg style="position:absolute;left:373.30px;top:310.70px;overflow:visible" width="18.20" height="18.20"><g stroke="#858585" stroke-width="0.95"><line x1="4.29" y1="13.91" x2="3.30" y2="14.90"/><line x1="2.63" y1="11.20" x2="1.30" y2="11.63"/><line x1="2.38" y1="8.04" x2="1.00" y2="7.82"/><line x1="3.60" y1="5.10" x2="2.47" y2="4.28"/><line x1="6.01" y1="3.04" x2="5.38" y2="1.79"/><line x1="9.10" y1="2.30" x2="9.10" y2="0.90"/><line x1="12.19" y1="3.04" x2="12.82" y2="1.79"/><line x1="14.60" y1="5.10" x2="15.73" y2="4.28"/><line x1="15.82" y1="8.04" x2="17.20" y2="7.82"/><line x1="15.57" y1="11.20" x2="16.90" y2="11.63"/><line x1="13.91" y1="13.91" x2="14.90" y2="14.90"/></g><circle cx="9.1" cy="9.1" r="6.1" fill="url(#kg)"/><circle cx="6.73" cy="11.47" r="1.34" fill="#f0eee6" opacity="0.8"/></svg>
<div style="position:absolute;left:391.2px;top:314.1px;width:13px;height:8.8px;background:#000;border:0.5px solid #3a3a3a;box-sizing:border-box;color:#2fb52f;font:5.3px/7.800000000000001px 'Liberation Sans', sans-serif;text-align:center">0</div>
<div style="position:absolute;left:405.2px;top:316.8px;font:normal 4.6px/5.29px 'Liberation Sans', sans-serif;color:#2b2b2b;white-space:nowrap;">dB</div>
<div style="position:absolute;left:343.7px;top:330.6px;width:100px;text-align:center;font:normal 4.6px/5.29px 'Liberation Sans', sans-serif;color:#2b2b2b;white-space:nowrap;">Threshold:</div>
<svg style="position:absolute;left:373.30px;top:334.30px;overflow:visible" width="18.20" height="18.20"><g stroke="#858585" stroke-width="0.95"><line x1="4.29" y1="13.91" x2="3.30" y2="14.90"/><line x1="2.63" y1="11.20" x2="1.30" y2="11.63"/><line x1="2.38" y1="8.04" x2="1.00" y2="7.82"/><line x1="3.60" y1="5.10" x2="2.47" y2="4.28"/><line x1="6.01" y1="3.04" x2="5.38" y2="1.79"/><line x1="9.10" y1="2.30" x2="9.10" y2="0.90"/><line x1="12.19" y1="3.04" x2="12.82" y2="1.79"/><line x1="14.60" y1="5.10" x2="15.73" y2="4.28"/><line x1="15.82" y1="8.04" x2="17.20" y2="7.82"/><line x1="15.57" y1="11.20" x2="16.90" y2="11.63"/><line x1="13.91" y1="13.91" x2="14.90" y2="14.90"/></g><circle cx="9.1" cy="9.1" r="6.1" fill="url(#kg)"/><circle cx="6.73" cy="11.47" r="1.34" fill="#f0eee6" opacity="0.8"/></svg>
<div style="position:absolute;left:391.2px;top:338.3px;width:13px;height:8.8px;background:#000;border:0.5px solid #3a3a3a;box-sizing:border-box;color:#2fb52f;font:5.3px/7.800000000000001px 'Liberation Sans', sans-serif;text-align:center">10</div>
<div style="position:absolute;left:405.2px;top:340.8px;font:normal 4.6px/5.29px 'Liberation Sans', sans-serif;color:#2b2b2b;white-space:nowrap;">dB</div>
<div style="position:absolute;left:343.7px;top:354.9px;width:100px;text-align:center;font:normal 4.6px/5.29px 'Liberation Sans', sans-serif;color:#2b2b2b;white-space:nowrap;">Priority:</div>
<svg style="position:absolute;left:373.30px;top:358.20px;overflow:visible" width="18.20" height="18.20"><g stroke="#858585" stroke-width="0.95"><line x1="4.29" y1="13.91" x2="3.30" y2="14.90"/><line x1="2.63" y1="11.20" x2="1.30" y2="11.63"/><line x1="2.38" y1="8.04" x2="1.00" y2="7.82"/><line x1="3.60" y1="5.10" x2="2.47" y2="4.28"/><line x1="6.01" y1="3.04" x2="5.38" y2="1.79"/><line x1="9.10" y1="2.30" x2="9.10" y2="0.90"/><line x1="12.19" y1="3.04" x2="12.82" y2="1.79"/><line x1="14.60" y1="5.10" x2="15.73" y2="4.28"/><line x1="15.82" y1="8.04" x2="17.20" y2="7.82"/><line x1="15.57" y1="11.20" x2="16.90" y2="11.63"/><line x1="13.91" y1="13.91" x2="14.90" y2="14.90"/></g><circle cx="9.1" cy="9.1" r="6.1" fill="url(#kg)"/><circle cx="6.73" cy="11.47" r="1.34" fill="#f0eee6" opacity="0.8"/></svg>
<div style="position:absolute;left:391.2px;top:362.5px;width:13px;height:8.8px;background:#000;border:0.5px solid #3a3a3a;box-sizing:border-box;color:#2fb52f;font:5.3px/7.800000000000001px 'Liberation Sans', sans-serif;text-align:center">1</div>
<div style="position:absolute;left:381.2px;top:377.4px;width:25.5px;height:10.9px;background:#fff;border:0.6px solid #d4d4d4"></div>
<div style="position:absolute;left:343.9px;top:379.0px;width:100px;text-align:center;font:normal 4.6px/5.29px 'Liberation Sans', sans-serif;color:#2b2b2b;white-space:nowrap;">Chairman</div>
<div style="position:absolute;left:387.3px;top:384.29999999999995px;width:13.4px;height:2.0px;background:#000;border-radius:0.5px"></div>
<div style="position:absolute;left:381.2px;top:392.8px;width:25.5px;height:10.9px;background:#fff;border:0.6px solid #d4d4d4"></div>
<div style="position:absolute;left:343.9px;top:394.40000000000003px;width:100px;text-align:center;font:normal 4.6px/5.29px 'Liberation Sans', sans-serif;color:#2b2b2b;white-space:nowrap;">Last Mic</div>
<div style="position:absolute;left:387.3px;top:399.7px;width:13.4px;height:2.0px;background:#000;border-radius:0.5px"></div>
<div style="position:absolute;left:419.45px;top:195.8px;width:44.8px;height:210.6px;background:#5f6e7e;border-radius:3px"></div>
<div style="position:absolute;left:420.95px;top:197.4px;width:41.8px;height:6.6px;background:#20892a;border-radius:2px 2px 0 0"></div>
<svg style="position:absolute;left:420.95px;top:197px" width="10" height="7"><path d="M1.4 3.5 L2.9 1.1 L4.4 3.5 L2.9 6.0 Z" fill="#9fd39f" opacity="0.9"/><circle cx="6.6" cy="3.8" r="1.7" fill="#fff"/></svg>
<div style="position:absolute;left:420.95px;top:206.4px;width:41.8px;height:8.0px;background:#fde7c9;border-bottom:0.8px solid #a8957c"></div>
<div style="position:absolute;left:421.55px;top:208.0px;font:bold 5.0px/5.75px 'Liberation Sans', sans-serif;color:#000;white-space:nowrap;">XLR 1</div>
<div style="position:absolute;left:420.95px;top:216.8px;width:41.8px;height:9.0px;background:#8ce98c;border-bottom:0.8px solid #66c266"></div>
<div style="position:absolute;left:421.75px;top:219.3px;font:bold 5.2px/5.98px 'Liberation Sans', sans-serif;color:#0f700f;white-space:nowrap;">Level</div>
<svg style="position:absolute;left:453.75px;top:217.5px" width="8" height="8"><circle cx="4.2" cy="4" r="3.3" fill="#fff" stroke="#d6d6d6" stroke-width="0.7"/><path d="M3 3.1 L4.2 4.1 L5.4 3.1 M3 4.2 L4.2 5.2 L5.4 4.2" fill="none" stroke="#a0a0a0" stroke-width="0.55"/></svg>
<div style="position:absolute;left:420.95px;top:225.9px;width:41.8px;height:57.8px;background:#eef4fc"></div>
<div style="position:absolute;left:426.34999999999997px;top:232.0px;width:1.8px;height:33.0px;background:#e0dccd;border-left:0.5px solid #b9b9b9"></div>
<div style="position:absolute;left:424.55px;top:235.8px;width:5.4px;height:8.2px;background:linear-gradient(90deg,#cdc7b4,#e8e4d8,#cdc7b4);border:0.4px solid #b3ac9a;border-radius:1.5px"></div>
<div style="position:absolute;left:425.75px;top:240.0px;width:3.0px;height:1.0px;background:#333"></div>
<div style="position:absolute;left:423.55px;top:231.25px;width:1.9px;height:0.75px;background:#999"></div>
<div style="position:absolute;left:429.65px;top:231.25px;width:1.9px;height:0.75px;background:#999"></div>
<div style="position:absolute;left:422.45px;top:257.05px;width:3.2px;height:1.1px;background:#444"></div>
<div style="position:absolute;left:429.05px;top:257.05px;width:3.2px;height:1.1px;background:#444"></div>
<div style="position:absolute;left:423.55px;top:265.15px;width:1.9px;height:0.75px;background:#999"></div>
<div style="position:absolute;left:429.65px;top:265.15px;width:1.9px;height:0.75px;background:#999"></div>
<div style="position:absolute;left:434.25px;top:229.2px;font:normal 4.6px/5.29px 'Liberation Sans', sans-serif;color:#2b2b2b;white-space:nowrap;">+64</div>
<div style="position:absolute;left:436.34999999999997px;top:255.6px;font:normal 4.8px/5.52px 'Liberation Sans', sans-serif;color:#222;white-space:nowrap;">0</div>
<div style="position:absolute;left:434.65px;top:263.1px;font:normal 4.6px/5.29px 'Liberation Sans', sans-serif;color:#2b2b2b;white-space:nowrap;">-20</div>
<svg style="position:absolute;left:457.34999999999997px;top:227.6px" width="5" height="44"><rect x="0.6" y="0.00" width="3.1" height="3.4" rx="0.5" fill="#000"/><rect x="0.6" y="3.90" width="3.1" height="3.4" rx="0.5" fill="#000"/><rect x="0.6" y="7.80" width="3.1" height="3.4" rx="0.5" fill="#000"/><rect x="0.6" y="11.70" width="3.1" height="3.4" rx="0.5" fill="#000"/><rect x="0.6" y="15.60" width="3.1" height="3.4" rx="0.5" fill="#000"/><rect x="0.6" y="19.50" width="3.1" height="3.4" rx="0.5" fill="#000"/><rect x="0.6" y="23.40" width="3.1" height="3.4" rx="0.5" fill="#000"/><rect x="0.6" y="27.30" width="3.1" height="3.4" rx="0.5" fill="#000"/><rect x="0.6" y="31.20" width="3.1" height="3.4" rx="0.5" fill="#000"/><rect x="0.6" y="35.10" width="3.1" height="3.4" rx="0.5" fill="#000"/><rect x="0.6" y="39.00" width="3.1" height="3.4" rx="0.5" fill="#000"/><rect x="0" y="21.5" width="3.8" height="3.7" fill="#000"/></svg>
<div style="position:absolute;left:449.25px;top:227.2px;font:normal 4.3px/4.94px 'Liberation Sans', sans-serif;color:#2b2b2b;white-space:nowrap;">Clip</div>
<div style="position:absolute;left:451.05px;top:231.5px;font:normal 4.3px/4.94px 'Liberation Sans', sans-serif;color:#2b2b2b;white-space:nowrap;">20</div>
<div style="position:absolute;left:452.25px;top:249.2px;font:normal 4.3px/4.94px 'Liberation Sans', sans-serif;color:#2b2b2b;white-space:nowrap;">0</div>
<div style="position:absolute;left:449.84999999999997px;top:266.0px;font:normal 4.3px/4.94px 'Liberation Sans', sans-serif;color:#2b2b2b;white-space:nowrap;">-30</div>
<div style="position:absolute;left:422.55px;top:271.9px;width:12px;height:8.6px;background:#000;border:0.5px solid #3a3a3a;box-sizing:border-box;color:#2fb52f;font:5.3px/7.6px 'Liberation Sans', sans-serif;text-align:center">43</div>
<div style="position:absolute;left:436.45px;top:274.3px;font:normal 4.6px/5.29px 'Liberation Sans', sans-serif;color:#2b2b2b;white-space:nowrap;">dB</div>
<div style="position:absolute;left:444.34999999999997px;top:272.4px;width:17.9px;height:10.9px;background:#fff;border:0.6px solid #d6d6d6"></div>
<div style="position:absolute;left:403.45px;top:274.2px;width:100px;text-align:center;font:normal 4.6px/5.29px 'Liberation Sans', sans-serif;color:#2b2b2b;white-space:nowrap;">Mute</div>
<div style="position:absolute;left:447.05px;top:280.0px;width:12.2px;height:1.7px;background:#000"></div>
<div style="position:absolute;left:420.95px;top:286.6px;width:41.8px;height:9.2px;background:#8ce98c;border-bottom:0.8px solid #66c266"></div>
<div style="position:absolute;left:421.75px;top:289.0px;font:bold 5.0px/5.75px 'Liberation Sans', sans-serif;color:#0f700f;white-space:nowrap;">Automixer</div>
<div style="position:absolute;left:420.95px;top:295.8px;width:41.8px;height:109.1px;background:#eef4fc;border-radius:0 0 1.5px 1.5px"></div>
<div style="position:absolute;left:423.34999999999997px;top:299.0px;width:3.2px;height:3.0px;background:#000"></div>
<div style="position:absolute;left:429.15px;top:298.4px;font:normal 4.6px/5.29px 'Liberation Sans', sans-serif;color:#2b2b2b;white-space:nowrap;">Gate</div>
<div style="position:absolute;left:445.34999999999997px;top:299.0px;width:3.2px;height:3.0px;background:#000"></div>
<div style="position:absolute;left:451.45px;top:298.4px;font:normal 4.6px/5.29px 'Liberation Sans', sans-serif;color:#2b2b2b;white-space:nowrap;">Cam</div>
<div style="position:absolute;left:391.95px;top:306.8px;width:100px;text-align:center;font:normal 4.6px/5.29px 'Liberation Sans', sans-serif;color:#2b2b2b;white-space:nowrap;">Channel Bias:</div>
<svg style="position:absolute;left:421.55px;top:310.70px;overflow:visible" width="18.20" height="18.20"><g stroke="#858585" stroke-width="0.95"><line x1="4.29" y1="13.91" x2="3.30" y2="14.90"/><line x1="2.63" y1="11.20" x2="1.30" y2="11.63"/><line x1="2.38" y1="8.04" x2="1.00" y2="7.82"/><line x1="3.60" y1="5.10" x2="2.47" y2="4.28"/><line x1="6.01" y1="3.04" x2="5.38" y2="1.79"/><line x1="9.10" y1="2.30" x2="9.10" y2="0.90"/><line x1="12.19" y1="3.04" x2="12.82" y2="1.79"/><line x1="14.60" y1="5.10" x2="15.73" y2="4.28"/><line x1="15.82" y1="8.04" x2="17.20" y2="7.82"/><line x1="15.57" y1="11.20" x2="16.90" y2="11.63"/><line x1="13.91" y1="13.91" x2="14.90" y2="14.90"/></g><circle cx="9.1" cy="9.1" r="6.1" fill="url(#kg)"/><circle cx="6.73" cy="11.47" r="1.34" fill="#f0eee6" opacity="0.8"/></svg>
<div style="position:absolute;left:439.45px;top:314.1px;width:13px;height:8.8px;background:#000;border:0.5px solid #3a3a3a;box-sizing:border-box;color:#2fb52f;font:5.3px/7.800000000000001px 'Liberation Sans', sans-serif;text-align:center">0</div>
<div style="position:absolute;left:453.45px;top:316.8px;font:normal 4.6px/5.29px 'Liberation Sans', sans-serif;color:#2b2b2b;white-space:nowrap;">dB</div>
<div style="position:absolute;left:391.95px;top:330.6px;width:100px;text-align:center;font:normal 4.6px/5.29px 'Liberation Sans', sans-serif;color:#2b2b2b;white-space:nowrap;">Threshold:</div>
<svg style="position:absolute;left:421.55px;top:334.30px;overflow:visible" width="18.20" height="18.20"><g stroke="#858585" stroke-width="0.95"><line x1="4.29" y1="13.91" x2="3.30" y2="14.90"/><line x1="2.63" y1="11.20" x2="1.30" y2="11.63"/><line x1="2.38" y1="8.04" x2="1.00" y2="7.82"/><line x1="3.60" y1="5.10" x2="2.47" y2="4.28"/><line x1="6.01" y1="3.04" x2="5.38" y2="1.79"/><line x1="9.10" y1="2.30" x2="9.10" y2="0.90"/><line x1="12.19" y1="3.04" x2="12.82" y2="1.79"/><line x1="14.60" y1="5.10" x2="15.73" y2="4.28"/><line x1="15.82" y1="8.04" x2="17.20" y2="7.82"/><line x1="15.57" y1="11.20" x2="16.90" y2="11.63"/><line x1="13.91" y1="13.91" x2="14.90" y2="14.90"/></g><circle cx="9.1" cy="9.1" r="6.1" fill="url(#kg)"/><circle cx="6.73" cy="11.47" r="1.34" fill="#f0eee6" opacity="0.8"/></svg>
<div style="position:absolute;left:439.45px;top:338.3px;width:13px;height:8.8px;background:#000;border:0.5px solid #3a3a3a;box-sizing:border-box;color:#2fb52f;font:5.3px/7.800000000000001px 'Liberation Sans', sans-serif;text-align:center">10</div>
<div style="position:absolute;left:453.45px;top:340.8px;font:normal 4.6px/5.29px 'Liberation Sans', sans-serif;color:#2b2b2b;white-space:nowrap;">dB</div>
<div style="position:absolute;left:391.95px;top:354.9px;width:100px;text-align:center;font:normal 4.6px/5.29px 'Liberation Sans', sans-serif;color:#2b2b2b;white-space:nowrap;">Priority:</div>
<svg style="position:absolute;left:421.55px;top:358.20px;overflow:visible" width="18.20" height="18.20"><g stroke="#858585" stroke-width="0.95"><line x1="4.29" y1="13.91" x2="3.30" y2="14.90"/><line x1="2.63" y1="11.20" x2="1.30" y2="11.63"/><line x1="2.38" y1="8.04" x2="1.00" y2="7.82"/><line x1="3.60" y1="5.10" x2="2.47" y2="4.28"/><line x1="6.01" y1="3.04" x2="5.38" y2="1.79"/><line x1="9.10" y1="2.30" x2="9.10" y2="0.90"/><line x1="12.19" y1="3.04" x2="12.82" y2="1.79"/><line x1="14.60" y1="5.10" x2="15.73" y2="4.28"/><line x1="15.82" y1="8.04" x2="17.20" y2="7.82"/><line x1="15.57" y1="11.20" x2="16.90" y2="11.63"/><line x1="13.91" y1="13.91" x2="14.90" y2="14.90"/></g><circle cx="9.1" cy="9.1" r="6.1" fill="url(#kg)"/><circle cx="6.73" cy="11.47" r="1.34" fill="#f0eee6" opacity="0.8"/></svg>
<div style="position:absolute;left:439.45px;top:362.5px;width:13px;height:8.8px;background:#000;border:0.5px solid #3a3a3a;box-sizing:border-box;color:#2fb52f;font:5.3px/7.800000000000001px 'Liberation Sans', sans-serif;text-align:center">1</div>
<div style="position:absolute;left:429.45px;top:377.4px;width:25.5px;height:10.9px;background:#fff;border:0.6px solid #d4d4d4"></div>
<div style="position:absolute;left:392.15px;top:379.0px;width:100px;text-align:center;font:normal 4.6px/5.29px 'Liberation Sans', sans-serif;color:#2b2b2b;white-space:nowrap;">Chairman</div>
<div style="position:absolute;left:435.55px;top:384.29999999999995px;width:13.4px;height:2.0px;background:#000;border-radius:0.5px"></div>
<div style="position:absolute;left:429.45px;top:392.8px;width:25.5px;height:10.9px;background:#fff;border:0.6px solid #d4d4d4"></div>
<div style="position:absolute;left:392.15px;top:394.40000000000003px;width:100px;text-align:center;font:normal 4.6px/5.29px 'Liberation Sans', sans-serif;color:#2b2b2b;white-space:nowrap;">Last Mic</div>
<div style="position:absolute;left:435.55px;top:399.7px;width:13.4px;height:2.0px;background:#000;border-radius:0.5px"></div>
<div style="position:absolute;left:467.7px;top:195.8px;width:44.8px;height:210.6px;background:#5f6e7e;border-radius:3px"></div>
<div style="position:absolute;left:469.2px;top:197.4px;width:41.8px;height:6.6px;background:#20892a;border-radius:2px 2px 0 0"></div>
<svg style="position:absolute;left:469.2px;top:197px" width="10" height="7"><path d="M1.4 3.5 L2.9 1.1 L4.4 3.5 L2.9 6.0 Z" fill="#9fd39f" opacity="0.9"/><circle cx="6.6" cy="3.8" r="1.7" fill="#fff"/></svg>
<div style="position:absolute;left:469.2px;top:206.4px;width:41.8px;height:8.0px;background:#fde7c9;border-bottom:0.8px solid #a8957c"></div>
<div style="position:absolute;left:469.8px;top:208.0px;font:bold 5.0px/5.75px 'Liberation Sans', sans-serif;color:#000;white-space:nowrap;">XLR 2</div>
<div style="position:absolute;left:469.2px;top:216.8px;width:41.8px;height:9.0px;background:#8ce98c;border-bottom:0.8px solid #66c266"></div>
<div style="position:absolute;left:470.0px;top:219.3px;font:bold 5.2px/5.98px 'Liberation Sans', sans-serif;color:#0f700f;white-space:nowrap;">Level</div>
<svg style="position:absolute;left:502.0px;top:217.5px" width="8" height="8"><circle cx="4.2" cy="4" r="3.3" fill="#fff" stroke="#d6d6d6" stroke-width="0.7"/><path d="M3 3.1 L4.2 4.1 L5.4 3.1 M3 4.2 L4.2 5.2 L5.4 4.2" fill="none" stroke="#a0a0a0" stroke-width="0.55"/></svg>
<div style="position:absolute;left:469.2px;top:225.9px;width:41.8px;height:57.8px;background:#eef4fc"></div>
<div style="position:absolute;left:474.59999999999997px;top:232.0px;width:1.8px;height:33.0px;background:#e0dccd;border-left:0.5px solid #b9b9b9"></div>
<div style="position:absolute;left:472.8px;top:235.8px;width:5.4px;height:8.2px;background:linear-gradient(90deg,#cdc7b4,#e8e4d8,#cdc7b4);border:0.4px solid #b3ac9a;border-radius:1.5px"></div>
<div style="position:absolute;left:474.0px;top:240.0px;width:3.0px;height:1.0px;background:#333"></div>
<div style="position:absolute;left:471.8px;top:231.25px;width:1.9px;height:0.75px;background:#999"></div>
<div style="position:absolute;left:477.9px;top:231.25px;width:1.9px;height:0.75px;background:#999"></div>
<div style="position:absolute;left:470.7px;top:257.05px;width:3.2px;height:1.1px;background:#444"></div>
<div style="position:absolute;left:477.3px;top:257.05px;width:3.2px;height:1.1px;background:#444"></div>
<div style="position:absolute;left:471.8px;top:265.15px;width:1.9px;height:0.75px;background:#999"></div>
<div style="position:absolute;left:477.9px;top:265.15px;width:1.9px;height:0.75px;background:#999"></div>
<div style="position:absolute;left:482.5px;top:229.2px;font:normal 4.6px/5.29px 'Liberation Sans', sans-serif;color:#2b2b2b;white-space:nowrap;">+64</div>
<div style="position:absolute;left:484.59999999999997px;top:255.6px;font:normal 4.8px/5.52px 'Liberation Sans', sans-serif;color:#222;white-space:nowrap;">0</div>
<div style="position:absolute;left:482.9px;top:263.1px;font:normal 4.6px/5.29px 'Liberation Sans', sans-serif;color:#2b2b2b;white-space:nowrap;">-20</div>
<svg style="position:absolute;left:505.59999999999997px;top:227.6px" width="5" height="44"><rect x="0.6" y="0.00" width="3.1" height="3.4" rx="0.5" fill="#000"/><rect x="0.6" y="3.90" width="3.1" height="3.4" rx="0.5" fill="#000"/><rect x="0.6" y="7.80" width="3.1" height="3.4" rx="0.5" fill="#000"/><rect x="0.6" y="11.70" width="3.1" height="3.4" rx="0.5" fill="#000"/><rect x="0.6" y="15.60" width="3.1" height="3.4" rx="0.5" fill="#000"/><rect x="0.6" y="19.50" width="3.1" height="3.4" rx="0.5" fill="#000"/><rect x="0.6" y="23.40" width="3.1" height="3.4" rx="0.5" fill="#000"/><rect x="0.6" y="27.30" width="3.1" height="3.4" rx="0.5" fill="#000"/><rect x="0.6" y="31.20" width="3.1" height="3.4" rx="0.5" fill="#000"/><rect x="0.6" y="35.10" width="3.1" height="3.4" rx="0.5" fill="#000"/><rect x="0.6" y="39.00" width="3.1" height="3.4" rx="0.5" fill="#000"/><rect x="0" y="21.5" width="3.8" height="3.7" fill="#000"/></svg>
<div style="position:absolute;left:497.5px;top:227.2px;font:normal 4.3px/4.94px 'Liberation Sans', sans-serif;color:#2b2b2b;white-space:nowrap;">Clip</div>
<div style="position:absolute;left:499.3px;top:231.5px;font:normal 4.3px/4.94px 'Liberation Sans', sans-serif;color:#2b2b2b;white-space:nowrap;">20</div>
<div style="position:absolute;left:500.5px;top:249.2px;font:normal 4.3px/4.94px 'Liberation Sans', sans-serif;color:#2b2b2b;white-space:nowrap;">0</div>
<div style="position:absolute;left:498.09999999999997px;top:266.0px;font:normal 4.3px/4.94px 'Liberation Sans', sans-serif;color:#2b2b2b;white-space:nowrap;">-30</div>
<div style="position:absolute;left:470.8px;top:271.9px;width:12px;height:8.6px;background:#000;border:0.5px solid #3a3a3a;box-sizing:border-box;color:#2fb52f;font:5.3px/7.6px 'Liberation Sans', sans-serif;text-align:center">43</div>
<div style="position:absolute;left:484.7px;top:274.3px;font:normal 4.6px/5.29px 'Liberation Sans', sans-serif;color:#2b2b2b;white-space:nowrap;">dB</div>
<div style="position:absolute;left:492.59999999999997px;top:272.4px;width:17.9px;height:10.9px;background:#fff;border:0.6px solid #d6d6d6"></div>
<div style="position:absolute;left:451.7px;top:274.2px;width:100px;text-align:center;font:normal 4.6px/5.29px 'Liberation Sans', sans-serif;color:#2b2b2b;white-space:nowrap;">Mute</div>
<div style="position:absolute;left:495.3px;top:280.0px;width:12.2px;height:1.7px;background:#000"></div>
<div style="position:absolute;left:469.2px;top:286.6px;width:41.8px;height:9.2px;background:#8ce98c;border-bottom:0.8px solid #66c266"></div>
<div style="position:absolute;left:470.0px;top:289.0px;font:bold 5.0px/5.75px 'Liberation Sans', sans-serif;color:#0f700f;white-space:nowrap;">Automixer</div>
<div style="position:absolute;left:469.2px;top:295.8px;width:41.8px;height:109.1px;background:#eef4fc;border-radius:0 0 1.5px 1.5px"></div>
<div style="position:absolute;left:471.59999999999997px;top:299.0px;width:3.2px;height:3.0px;background:#000"></div>
<div style="position:absolute;left:477.4px;top:298.4px;font:normal 4.6px/5.29px 'Liberation Sans', sans-serif;color:#2b2b2b;white-space:nowrap;">Gate</div>
<div style="position:absolute;left:493.59999999999997px;top:299.0px;width:3.2px;height:3.0px;background:#000"></div>
<div style="position:absolute;left:499.7px;top:298.4px;font:normal 4.6px/5.29px 'Liberation Sans', sans-serif;color:#2b2b2b;white-space:nowrap;">Cam</div>
<div style="position:absolute;left:440.2px;top:306.8px;width:100px;text-align:center;font:normal 4.6px/5.29px 'Liberation Sans', sans-serif;color:#2b2b2b;white-space:nowrap;">Channel Bias:</div>
<svg style="position:absolute;left:469.80px;top:310.70px;overflow:visible" width="18.20" height="18.20"><g stroke="#858585" stroke-width="0.95"><line x1="4.29" y1="13.91" x2="3.30" y2="14.90"/><line x1="2.63" y1="11.20" x2="1.30" y2="11.63"/><line x1="2.38" y1="8.04" x2="1.00" y2="7.82"/><line x1="3.60" y1="5.10" x2="2.47" y2="4.28"/><line x1="6.01" y1="3.04" x2="5.38" y2="1.79"/><line x1="9.10" y1="2.30" x2="9.10" y2="0.90"/><line x1="12.19" y1="3.04" x2="12.82" y2="1.79"/><line x1="14.60" y1="5.10" x2="15.73" y2="4.28"/><line x1="15.82" y1="8.04" x2="17.20" y2="7.82"/><line x1="15.57" y1="11.20" x2="16.90" y2="11.63"/><line x1="13.91" y1="13.91" x2="14.90" y2="14.90"/></g><circle cx="9.1" cy="9.1" r="6.1" fill="url(#kg)"/><circle cx="6.73" cy="11.47" r="1.34" fill="#f0eee6" opacity="0.8"/></svg>
<div style="position:absolute;left:487.7px;top:314.1px;width:13px;height:8.8px;background:#000;border:0.5px solid #3a3a3a;box-sizing:border-box;color:#2fb52f;font:5.3px/7.800000000000001px 'Liberation Sans', sans-serif;text-align:center">0</div>
<div style="position:absolute;left:501.7px;top:316.8px;font:normal 4.6px/5.29px 'Liberation Sans', sans-serif;color:#2b2b2b;white-space:nowrap;">dB</div>
<div style="position:absolute;left:440.2px;top:330.6px;width:100px;text-align:center;font:normal 4.6px/5.29px 'Liberation Sans', sans-serif;color:#2b2b2b;white-space:nowrap;">Threshold:</div>
<svg style="position:absolute;left:469.80px;top:334.30px;overflow:visible" width="18.20" height="18.20"><g stroke="#858585" stroke-width="0.95"><line x1="4.29" y1="13.91" x2="3.30" y2="14.90"/><line x1="2.63" y1="11.20" x2="1.30" y2="11.63"/><line x1="2.38" y1="8.04" x2="1.00" y2="7.82"/><line x1="3.60" y1="5.10" x2="2.47" y2="4.28"/><line x1="6.01" y1="3.04" x2="5.38" y2="1.79"/><line x1="9.10" y1="2.30" x2="9.10" y2="0.90"/><line x1="12.19" y1="3.04" x2="12.82" y2="1.79"/><line x1="14.60" y1="5.10" x2="15.73" y2="4.28"/><line x1="15.82" y1="8.04" x2="17.20" y2="7.82"/><line x1="15.57" y1="11.20" x2="16.90" y2="11.63"/><line x1="13.91" y1="13.91" x2="14.90" y2="14.90"/></g><circle cx="9.1" cy="9.1" r="6.1" fill="url(#kg)"/><circle cx="6.73" cy="11.47" r="1.34" fill="#f0eee6" opacity="0.8"/></svg>
<div style="position:absolute;left:487.7px;top:338.3px;width:13px;height:8.8px;background:#000;border:0.5px solid #3a3a3a;box-sizing:border-box;color:#2fb52f;font:5.3px/7.800000000000001px 'Liberation Sans', sans-serif;text-align:center">10</div>
<div style="position:absolute;left:501.7px;top:340.8px;font:normal 4.6px/5.29px 'Liberation Sans', sans-serif;color:#2b2b2b;white-space:nowrap;">dB</div>
<div style="position:absolute;left:440.2px;top:354.9px;width:100px;text-align:center;font:normal 4.6px/5.29px 'Liberation Sans', sans-serif;color:#2b2b2b;white-space:nowrap;">Priority:</div>
<svg style="position:absolute;left:469.80px;top:358.20px;overflow:visible" width="18.20" height="18.20"><g stroke="#858585" stroke-width="0.95"><line x1="4.29" y1="13.91" x2="3.30" y2="14.90"/><line x1="2.63" y1="11.20" x2="1.30" y2="11.63"/><line x1="2.38" y1="8.04" x2="1.00" y2="7.82"/><line x1="3.60" y1="5.10" x2="2.47" y2="4.28"/><line x1="6.01" y1="3.04" x2="5.38" y2="1.79"/><line x1="9.10" y1="2.30" x2="9.10" y2="0.90"/><line x1="12.19" y1="3.04" x2="12.82" y2="1.79"/><line x1="14.60" y1="5.10" x2="15.73" y2="4.28"/><line x1="15.82" y1="8.04" x2="17.20" y2="7.82"/><line x1="15.57" y1="11.20" x2="16.90" y2="11.63"/><line x1="13.91" y1="13.91" x2="14.90" y2="14.90"/></g><circle cx="9.1" cy="9.1" r="6.1" fill="url(#kg)"/><circle cx="6.73" cy="11.47" r="1.34" fill="#f0eee6" opacity="0.8"/></svg>
<div style="position:absolute;left:487.7px;top:362.5px;width:13px;height:8.8px;background:#000;border:0.5px solid #3a3a3a;box-sizing:border-box;color:#2fb52f;font:5.3px/7.800000000000001px 'Liberation Sans', sans-serif;text-align:center">1</div>
<div style="position:absolute;left:477.7px;top:377.4px;width:25.5px;height:10.9px;background:#fff;border:0.6px solid #d4d4d4"></div>
<div style="position:absolute;left:440.4px;top:379.0px;width:100px;text-align:center;font:normal 4.6px/5.29px 'Liberation Sans', sans-serif;color:#2b2b2b;white-space:nowrap;">Chairman</div>
<div style="position:absolute;left:483.8px;top:384.29999999999995px;width:13.4px;height:2.0px;background:#000;border-radius:0.5px"></div>
<div style="position:absolute;left:477.7px;top:392.8px;width:25.5px;height:10.9px;background:#fff;border:0.6px solid #d4d4d4"></div>
<div style="position:absolute;left:440.4px;top:394.40000000000003px;width:100px;text-align:center;font:normal 4.6px/5.29px 'Liberation Sans', sans-serif;color:#2b2b2b;white-space:nowrap;">Last Mic</div>
<div style="position:absolute;left:483.8px;top:399.7px;width:13.4px;height:2.0px;background:#000;border-radius:0.5px"></div>
<div style="position:absolute;left:515.95px;top:195.8px;width:44.8px;height:210.6px;background:#5f6e7e;border-radius:3px"></div>
<div style="position:absolute;left:517.45px;top:197.4px;width:41.8px;height:6.6px;background:#20892a;border-radius:2px 2px 0 0"></div>
<svg style="position:absolute;left:517.45px;top:197px" width="10" height="7"><path d="M1.4 3.5 L2.9 1.1 L4.4 3.5 L2.9 6.0 Z" fill="#9fd39f" opacity="0.9"/><circle cx="6.6" cy="3.8" r="1.7" fill="#fff"/></svg>
<div style="position:absolute;left:517.45px;top:206.4px;width:41.8px;height:8.0px;background:#fde7c9;border-bottom:0.8px solid #a8957c"></div>
<div style="position:absolute;left:518.0500000000001px;top:208.0px;font:bold 5.0px/5.75px 'Liberation Sans', sans-serif;color:#000;white-space:nowrap;">XLR 3</div>
<div style="position:absolute;left:517.45px;top:216.8px;width:41.8px;height:9.0px;background:#8ce98c;border-bottom:0.8px solid #66c266"></div>
<div style="position:absolute;left:518.25px;top:219.3px;font:bold 5.2px/5.98px 'Liberation Sans', sans-serif;color:#0f700f;white-space:nowrap;">Level</div>
<svg style="position:absolute;left:550.25px;top:217.5px" width="8" height="8"><circle cx="4.2" cy="4" r="3.3" fill="#fff" stroke="#d6d6d6" stroke-width="0.7"/><path d="M3 3.1 L4.2 4.1 L5.4 3.1 M3 4.2 L4.2 5.2 L5.4 4.2" fill="none" stroke="#a0a0a0" stroke-width="0.55"/></svg>
<div style="position:absolute;left:517.45px;top:225.9px;width:41.8px;height:57.8px;background:#eef4fc"></div>
<div style="position:absolute;left:522.85px;top:232.0px;width:1.8px;height:33.0px;background:#e0dccd;border-left:0.5px solid #b9b9b9"></div>
<div style="position:absolute;left:521.0500000000001px;top:235.8px;width:5.4px;height:8.2px;background:linear-gradient(90deg,#cdc7b4,#e8e4d8,#cdc7b4);border:0.4px solid #b3ac9a;border-radius:1.5px"></div>
<div style="position:absolute;left:522.25px;top:240.0px;width:3.0px;height:1.0px;background:#333"></div>
<div style="position:absolute;left:520.0500000000001px;top:231.25px;width:1.9px;height:0.75px;background:#999"></div>
<div style="position:absolute;left:526.1500000000001px;top:231.25px;width:1.9px;height:0.75px;background:#999"></div>
<div style="position:absolute;left:518.95px;top:257.05px;width:3.2px;height:1.1px;background:#444"></div>
<div style="position:absolute;left:525.5500000000001px;top:257.05px;width:3.2px;height:1.1px;background:#444"></div>
<div style="position:absolute;left:520.0500000000001px;top:265.15px;width:1.9px;height:0.75px;background:#999"></div>
<div style="position:absolute;left:526.1500000000001px;top:265.15px;width:1.9px;height:0.75px;background:#999"></div>
<div style="position:absolute;left:530.75px;top:229.2px;font:normal 4.6px/5.29px 'Liberation Sans', sans-serif;color:#2b2b2b;white-space:nowrap;">+64</div>
<div style="position:absolute;left:532.85px;top:255.6px;font:normal 4.8px/5.52px 'Liberation Sans', sans-serif;color:#222;white-space:nowrap;">0</div>
<div style="position:absolute;left:531.1500000000001px;top:263.1px;font:normal 4.6px/5.29px 'Liberation Sans', sans-serif;color:#2b2b2b;white-space:nowrap;">-20</div>
<svg style="position:absolute;left:553.85px;top:227.6px" width="5" height="44"><rect x="0.6" y="0.00" width="3.1" height="3.4" rx="0.5" fill="#000"/><rect x="0.6" y="3.90" width="3.1" height="3.4" rx="0.5" fill="#000"/><rect x="0.6" y="7.80" width="3.1" height="3.4" rx="0.5" fill="#000"/><rect x="0.6" y="11.70" width="3.1" height="3.4" rx="0.5" fill="#000"/><rect x="0.6" y="15.60" width="3.1" height="3.4" rx="0.5" fill="#000"/><rect x="0.6" y="19.50" width="3.1" height="3.4" rx="0.5" fill="#000"/><rect x="0.6" y="23.40" width="3.1" height="3.4" rx="0.5" fill="#000"/><rect x="0.6" y="27.30" width="3.1" height="3.4" rx="0.5" fill="#000"/><rect x="0.6" y="31.20" width="3.1" height="3.4" rx="0.5" fill="#000"/><rect x="0.6" y="35.10" width="3.1" height="3.4" rx="0.5" fill="#000"/><rect x="0.6" y="39.00" width="3.1" height="3.4" rx="0.5" fill="#000"/><rect x="0" y="21.5" width="3.8" height="3.7" fill="#000"/></svg>
<div style="position:absolute;left:545.75px;top:227.2px;font:normal 4.3px/4.94px 'Liberation Sans', sans-serif;color:#2b2b2b;white-space:nowrap;">Clip</div>
<div style="position:absolute;left:547.5500000000001px;top:231.5px;font:normal 4.3px/4.94px 'Liberation Sans', sans-serif;color:#2b2b2b;white-space:nowrap;">20</div>
<div style="position:absolute;left:548.75px;top:249.2px;font:normal 4.3px/4.94px 'Liberation Sans', sans-serif;color:#2b2b2b;white-space:nowrap;">0</div>
<div style="position:absolute;left:546.35px;top:266.0px;font:normal 4.3px/4.94px 'Liberation Sans', sans-serif;color:#2b2b2b;white-space:nowrap;">-30</div>
<div style="position:absolute;left:519.0500000000001px;top:271.9px;width:12px;height:8.6px;background:#000;border:0.5px solid #3a3a3a;box-sizing:border-box;color:#2fb52f;font:5.3px/7.6px 'Liberation Sans', sans-serif;text-align:center">43</div>
<div style="position:absolute;left:532.95px;top:274.3px;font:normal 4.6px/5.29px 'Liberation Sans', sans-serif;color:#2b2b2b;white-space:nowrap;">dB</div>
<div style="position:absolute;left:540.85px;top:272.4px;width:17.9px;height:10.9px;background:#fff;border:0.6px solid #d6d6d6"></div>
<div style="position:absolute;left:499.95000000000005px;top:274.2px;width:100px;text-align:center;font:normal 4.6px/5.29px 'Liberation Sans', sans-serif;color:#2b2b2b;white-space:nowrap;">Mute</div>
<div style="position:absolute;left:543.5500000000001px;top:280.0px;width:12.2px;height:1.7px;background:#000"></div>
<div style="position:absolute;left:517.45px;top:286.6px;width:41.8px;height:9.2px;background:#8ce98c;border-bottom:0.8px solid #66c266"></div>
<div style="position:absolute;left:518.25px;top:289.0px;font:bold 5.0px/5.75px 'Liberation Sans', sans-serif;color:#0f700f;white-space:nowrap;">Automixer</div>
<div style="position:absolute;left:517.45px;top:295.8px;width:41.8px;height:109.1px;background:#eef4fc;border-radius:0 0 1.5px 1.5px"></div>
<div style="position:absolute;left:519.85px;top:299.0px;width:3.2px;height:3.0px;background:#000"></div>
<div style="position:absolute;left:525.6500000000001px;top:298.4px;font:normal 4.6px/5.29px 'Liberation Sans', sans-serif;color:#2b2b2b;white-space:nowrap;">Gate</div>
<div style="position:absolute;left:541.85px;top:299.0px;width:3.2px;height:3.0px;background:#000"></div>
<div style="position:absolute;left:547.95px;top:298.4px;font:normal 4.6px/5.29px 'Liberation Sans', sans-serif;color:#2b2b2b;white-space:nowrap;">Cam</div>
<div style="position:absolute;left:488.45000000000005px;top:306.8px;width:100px;text-align:center;font:normal 4.6px/5.29px 'Liberation Sans', sans-serif;color:#2b2b2b;white-space:nowrap;">Channel Bias:</div>
<svg style="position:absolute;left:518.05px;top:310.70px;overflow:visible" width="18.20" height="18.20"><g stroke="#858585" stroke-width="0.95"><line x1="4.29" y1="13.91" x2="3.30" y2="14.90"/><line x1="2.63" y1="11.20" x2="1.30" y2="11.63"/><line x1="2.38" y1="8.04" x2="1.00" y2="7.82"/><line x1="3.60" y1="5.10" x2="2.47" y2="4.28"/><line x1="6.01" y1="3.04" x2="5.38" y2="1.79"/><line x1="9.10" y1="2.30" x2="9.10" y2="0.90"/><line x1="12.19" y1="3.04" x2="12.82" y2="1.79"/><line x1="14.60" y1="5.10" x2="15.73" y2="4.28"/><line x1="15.82" y1="8.04" x2="17.20" y2="7.82"/><line x1="15.57" y1="11.20" x2="16.90" y2="11.63"/><line x1="13.91" y1="13.91" x2="14.90" y2="14.90"/></g><circle cx="9.1" cy="9.1" r="6.1" fill="url(#kg)"/><circle cx="6.73" cy="11.47" r="1.34" fill="#f0eee6" opacity="0.8"/></svg>
<div style="position:absolute;left:535.95px;top:314.1px;width:13px;height:8.8px;background:#000;border:0.5px solid #3a3a3a;box-sizing:border-box;color:#2fb52f;font:5.3px/7.800000000000001px 'Liberation Sans', sans-serif;text-align:center">0</div>
<div style="position:absolute;left:549.95px;top:316.8px;font:normal 4.6px/5.29px 'Liberation Sans', sans-serif;color:#2b2b2b;white-space:nowrap;">dB</div>
<div style="position:absolute;left:488.45000000000005px;top:330.6px;width:100px;text-align:center;font:normal 4.6px/5.29px 'Liberation Sans', sans-serif;color:#2b2b2b;white-space:nowrap;">Threshold:</div>
<svg style="position:absolute;left:518.05px;top:334.30px;overflow:visible" width="18.20" height="18.20"><g stroke="#858585" stroke-width="0.95"><line x1="4.29" y1="13.91" x2="3.30" y2="14.90"/><line x1="2.63" y1="11.20" x2="1.30" y2="11.63"/><line x1="2.38" y1="8.04" x2="1.00" y2="7.82"/><line x1="3.60" y1="5.10" x2="2.47" y2="4.28"/><line x1="6.01" y1="3.04" x2="5.38" y2="1.79"/><line x1="9.10" y1="2.30" x2="9.10" y2="0.90"/><line x1="12.19" y1="3.04" x2="12.82" y2="1.79"/><line x1="14.60" y1="5.10" x2="15.73" y2="4.28"/><line x1="15.82" y1="8.04" x2="17.20" y2="7.82"/><line x1="15.57" y1="11.20" x2="16.90" y2="11.63"/><line x1="13.91" y1="13.91" x2="14.90" y2="14.90"/></g><circle cx="9.1" cy="9.1" r="6.1" fill="url(#kg)"/><circle cx="6.73" cy="11.47" r="1.34" fill="#f0eee6" opacity="0.8"/></svg>
<div style="position:absolute;left:535.95px;top:338.3px;width:13px;height:8.8px;background:#000;border:0.5px solid #3a3a3a;box-sizing:border-box;color:#2fb52f;font:5.3px/7.800000000000001px 'Liberation Sans', sans-serif;text-align:center">10</div>
<div style="position:absolute;left:549.95px;top:340.8px;font:normal 4.6px/5.29px 'Liberation Sans', sans-serif;color:#2b2b2b;white-space:nowrap;">dB</div>
<div style="position:absolute;left:488.45000000000005px;top:354.9px;width:100px;text-align:center;font:normal 4.6px/5.29px 'Liberation Sans', sans-serif;color:#2b2b2b;white-space:nowrap;">Priority:</div>
<svg style="position:absolute;left:518.05px;top:358.20px;overflow:visible" width="18.20" height="18.20"><g stroke="#858585" stroke-width="0.95"><line x1="4.29" y1="13.91" x2="3.30" y2="14.90"/><line x1="2.63" y1="11.20" x2="1.30" y2="11.63"/><line x1="2.38" y1="8.04" x2="1.00" y2="7.82"/><line x1="3.60" y1="5.10" x2="2.47" y2="4.28"/><line x1="6.01" y1="3.04" x2="5.38" y2="1.79"/><line x1="9.10" y1="2.30" x2="9.10" y2="0.90"/><line x1="12.19" y1="3.04" x2="12.82" y2="1.79"/><line x1="14.60" y1="5.10" x2="15.73" y2="4.28"/><line x1="15.82" y1="8.04" x2="17.20" y2="7.82"/><line x1="15.57" y1="11.20" x2="16.90" y2="11.63"/><line x1="13.91" y1="13.91" x2="14.90" y2="14.90"/></g><circle cx="9.1" cy="9.1" r="6.1" fill="url(#kg)"/><circle cx="6.73" cy="11.47" r="1.34" fill="#f0eee6" opacity="0.8"/></svg>
<div style="position:absolute;left:535.95px;top:362.5px;width:13px;height:8.8px;background:#000;border:0.5px solid #3a3a3a;box-sizing:border-box;color:#2fb52f;font:5.3px/7.800000000000001px 'Liberation Sans', sans-serif;text-align:center">1</div>
<div style="position:absolute;left:525.95px;top:377.4px;width:25.5px;height:10.9px;background:#fff;border:0.6px solid #d4d4d4"></div>
<div style="position:absolute;left:488.6500000000001px;top:379.0px;width:100px;text-align:center;font:normal 4.6px/5.29px 'Liberation Sans', sans-serif;color:#2b2b2b;white-space:nowrap;">Chairman</div>
<div style="position:absolute;left:532.0500000000001px;top:384.29999999999995px;width:13.4px;height:2.0px;background:#000;border-radius:0.5px"></div>
<div style="position:absolute;left:525.95px;top:392.8px;width:25.5px;height:10.9px;background:#fff;border:0.6px solid #d4d4d4"></div>
<div style="position:absolute;left:488.6500000000001px;top:394.40000000000003px;width:100px;text-align:center;font:normal 4.6px/5.29px 'Liberation Sans', sans-serif;color:#2b2b2b;white-space:nowrap;">Last Mic</div>
<div style="position:absolute;left:532.0500000000001px;top:399.7px;width:13.4px;height:2.0px;background:#000;border-radius:0.5px"></div>
<div style="position:absolute;left:564.2px;top:195.8px;width:44.8px;height:210.6px;background:#5f6e7e;border-radius:3px"></div>
<div style="position:absolute;left:565.7px;top:197.4px;width:41.8px;height:6.6px;background:#20892a;border-radius:2px 2px 0 0"></div>
<svg style="position:absolute;left:565.7px;top:197px" width="10" height="7"><path d="M1.4 3.5 L2.9 1.1 L4.4 3.5 L2.9 6.0 Z" fill="#9fd39f" opacity="0.9"/><circle cx="6.6" cy="3.8" r="1.7" fill="#fff"/></svg>
<div style="position:absolute;left:565.7px;top:206.4px;width:41.8px;height:8.0px;background:#fde7c9;border-bottom:0.8px solid #a8957c"></div>
<div style="position:absolute;left:566.3000000000001px;top:208.0px;font:bold 5.0px/5.75px 'Liberation Sans', sans-serif;color:#000;white-space:nowrap;">XLR 4</div>
<div style="position:absolute;left:565.7px;top:216.8px;width:41.8px;height:9.0px;background:#8ce98c;border-bottom:0.8px solid #66c266"></div>
<div style="position:absolute;left:566.5px;top:219.3px;font:bold 5.2px/5.98px 'Liberation Sans', sans-serif;color:#0f700f;white-space:nowrap;">Level</div>
<svg style="position:absolute;left:598.5px;top:217.5px" width="8" height="8"><circle cx="4.2" cy="4" r="3.3" fill="#fff" stroke="#d6d6d6" stroke-width="0.7"/><path d="M3 3.1 L4.2 4.1 L5.4 3.1 M3 4.2 L4.2 5.2 L5.4 4.2" fill="none" stroke="#a0a0a0" stroke-width="0.55"/></svg>
<div style="position:absolute;left:565.7px;top:225.9px;width:41.8px;height:57.8px;background:#eef4fc"></div>
<div style="position:absolute;left:571.1px;top:232.0px;width:1.8px;height:33.0px;background:#e0dccd;border-left:0.5px solid #b9b9b9"></div>
<div style="position:absolute;left:569.3000000000001px;top:235.8px;width:5.4px;height:8.2px;background:linear-gradient(90deg,#cdc7b4,#e8e4d8,#cdc7b4);border:0.4px solid #b3ac9a;border-radius:1.5px"></div>
<div style="position:absolute;left:570.5px;top:240.0px;width:3.0px;height:1.0px;background:#333"></div>
<div style="position:absolute;left:568.3000000000001px;top:231.25px;width:1.9px;height:0.75px;background:#999"></div>
<div style="position:absolute;left:574.4000000000001px;top:231.25px;width:1.9px;height:0.75px;background:#999"></div>
<div style="position:absolute;left:567.2px;top:257.05px;width:3.2px;height:1.1px;background:#444"></div>
<div style="position:absolute;left:573.8000000000001px;top:257.05px;width:3.2px;height:1.1px;background:#444"></div>
<div style="position:absolute;left:568.3000000000001px;top:265.15px;width:1.9px;height:0.75px;background:#999"></div>
<div style="position:absolute;left:574.4000000000001px;top:265.15px;width:1.9px;height:0.75px;background:#999"></div>
<div style="position:absolute;left:579.0px;top:229.2px;font:normal 4.6px/5.29px 'Liberation Sans', sans-serif;color:#2b2b2b;white-space:nowrap;">+64</div>
<div style="position:absolute;left:581.1px;top:255.6px;font:normal 4.8px/5.52px 'Liberation Sans', sans-serif;color:#222;white-space:nowrap;">0</div>
<div style="position:absolute;left:579.4000000000001px;top:263.1px;font:normal 4.6px/5.29px 'Liberation Sans', sans-serif;color:#2b2b2b;white-space:nowrap;">-20</div>
<svg style="position:absolute;left:602.1px;top:227.6px" width="5" height="44"><rect x="0.6" y="0.00" width="3.1" height="3.4" rx="0.5" fill="#000"/><rect x="0.6" y="3.90" width="3.1" height="3.4" rx="0.5" fill="#000"/><rect x="0.6" y="7.80" width="3.1" height="3.4" rx="0.5" fill="#000"/><rect x="0.6" y="11.70" width="3.1" height="3.4" rx="0.5" fill="#000"/><rect x="0.6" y="15.60" width="3.1" height="3.4" rx="0.5" fill="#000"/><rect x="0.6" y="19.50" width="3.1" height="3.4" rx="0.5" fill="#000"/><rect x="0.6" y="23.40" width="3.1" height="3.4" rx="0.5" fill="#000"/><rect x="0.6" y="27.30" width="3.1" height="3.4" rx="0.5" fill="#000"/><rect x="0.6" y="31.20" width="3.1" height="3.4" rx="0.5" fill="#000"/><rect x="0.6" y="35.10" width="3.1" height="3.4" rx="0.5" fill="#000"/><rect x="0.6" y="39.00" width="3.1" height="3.4" rx="0.5" fill="#000"/><rect x="0" y="21.5" width="3.8" height="3.7" fill="#000"/></svg>
<div style="position:absolute;left:594.0px;top:227.2px;font:normal 4.3px/4.94px 'Liberation Sans', sans-serif;color:#2b2b2b;white-space:nowrap;">Clip</div>
<div style="position:absolute;left:595.8000000000001px;top:231.5px;font:normal 4.3px/4.94px 'Liberation Sans', sans-serif;color:#2b2b2b;white-space:nowrap;">20</div>
<div style="position:absolute;left:597.0px;top:249.2px;font:normal 4.3px/4.94px 'Liberation Sans', sans-serif;color:#2b2b2b;white-space:nowrap;">0</div>
<div style="position:absolute;left:594.6px;top:266.0px;font:normal 4.3px/4.94px 'Liberation Sans', sans-serif;color:#2b2b2b;white-space:nowrap;">-30</div>
<div style="position:absolute;left:567.3000000000001px;top:271.9px;width:12px;height:8.6px;background:#000;border:0.5px solid #3a3a3a;box-sizing:border-box;color:#2fb52f;font:5.3px/7.6px 'Liberation Sans', sans-serif;text-align:center">43</div>
<div style="position:absolute;left:581.2px;top:274.3px;font:normal 4.6px/5.29px 'Liberation Sans', sans-serif;color:#2b2b2b;white-space:nowrap;">dB</div>
<div style="position:absolute;left:589.1px;top:272.4px;width:17.9px;height:10.9px;background:#fff;border:0.6px solid #d6d6d6"></div>
<div style="position:absolute;left:548.2px;top:274.2px;width:100px;text-align:center;font:normal 4.6px/5.29px 'Liberation Sans', sans-serif;color:#2b2b2b;white-space:nowrap;">Mute</div>
<div style="position:absolute;left:591.8000000000001px;top:280.0px;width:12.2px;height:1.7px;background:#000"></div>
<div style="position:absolute;left:565.7px;top:286.6px;width:41.8px;height:9.2px;background:#8ce98c;border-bottom:0.8px solid #66c266"></div>
<div style="position:absolute;left:566.5px;top:289.0px;font:bold 5.0px/5.75px 'Liberation Sans', sans-serif;color:#0f700f;white-space:nowrap;">Automixer</div>
<div style="position:absolute;left:565.7px;top:295.8px;width:41.8px;height:109.1px;background:#eef4fc;border-radius:0 0 1.5px 1.5px"></div>
<div style="position:absolute;left:568.1px;top:299.0px;width:3.2px;height:3.0px;background:#000"></div>
<div style="position:absolute;left:573.9000000000001px;top:298.4px;font:normal 4.6px/5.29px 'Liberation Sans', sans-serif;color:#2b2b2b;white-space:nowrap;">Gate</div>
<div style="position:absolute;left:590.1px;top:299.0px;width:3.2px;height:3.0px;background:#000"></div>
<div style="position:absolute;left:596.2px;top:298.4px;font:normal 4.6px/5.29px 'Liberation Sans', sans-serif;color:#2b2b2b;white-space:nowrap;">Cam</div>
<div style="position:absolute;left:536.7px;top:306.8px;width:100px;text-align:center;font:normal 4.6px/5.29px 'Liberation Sans', sans-serif;color:#2b2b2b;white-space:nowrap;">Channel Bias:</div>
<svg style="position:absolute;left:566.30px;top:310.70px;overflow:visible" width="18.20" height="18.20"><g stroke="#858585" stroke-width="0.95"><line x1="4.29" y1="13.91" x2="3.30" y2="14.90"/><line x1="2.63" y1="11.20" x2="1.30" y2="11.63"/><line x1="2.38" y1="8.04" x2="1.00" y2="7.82"/><line x1="3.60" y1="5.10" x2="2.47" y2="4.28"/><line x1="6.01" y1="3.04" x2="5.38" y2="1.79"/><line x1="9.10" y1="2.30" x2="9.10" y2="0.90"/><line x1="12.19" y1="3.04" x2="12.82" y2="1.79"/><line x1="14.60" y1="5.10" x2="15.73" y2="4.28"/><line x1="15.82" y1="8.04" x2="17.20" y2="7.82"/><line x1="15.57" y1="11.20" x2="16.90" y2="11.63"/><line x1="13.91" y1="13.91" x2="14.90" y2="14.90"/></g><circle cx="9.1" cy="9.1" r="6.1" fill="url(#kg)"/><circle cx="6.73" cy="11.47" r="1.34" fill="#f0eee6" opacity="0.8"/></svg>
<div style="position:absolute;left:584.2px;top:314.1px;width:13px;height:8.8px;background:#000;border:0.5px solid #3a3a3a;box-sizing:border-box;color:#2fb52f;font:5.3px/7.800000000000001px 'Liberation Sans', sans-serif;text-align:center">0</div>
<div style="position:absolute;left:598.2px;top:316.8px;font:normal 4.6px/5.29px 'Liberation Sans', sans-serif;color:#2b2b2b;white-space:nowrap;">dB</div>
<div style="position:absolute;left:536.7px;top:330.6px;width:100px;text-align:center;font:normal 4.6px/5.29px 'Liberation Sans', sans-serif;color:#2b2b2b;white-space:nowrap;">Threshold:</div>
<svg style="position:absolute;left:566.30px;top:334.30px;overflow:visible" width="18.20" height="18.20"><g stroke="#858585" stroke-width="0.95"><line x1="4.29" y1="13.91" x2="3.30" y2="14.90"/><line x1="2.63" y1="11.20" x2="1.30" y2="11.63"/><line x1="2.38" y1="8.04" x2="1.00" y2="7.82"/><line x1="3.60" y1="5.10" x2="2.47" y2="4.28"/><line x1="6.01" y1="3.04" x2="5.38" y2="1.79"/><line x1="9.10" y1="2.30" x2="9.10" y2="0.90"/><line x1="12.19" y1="3.04" x2="12.82" y2="1.79"/><line x1="14.60" y1="5.10" x2="15.73" y2="4.28"/><line x1="15.82" y1="8.04" x2="17.20" y2="7.82"/><line x1="15.57" y1="11.20" x2="16.90" y2="11.63"/><line x1="13.91" y1="13.91" x2="14.90" y2="14.90"/></g><circle cx="9.1" cy="9.1" r="6.1" fill="url(#kg)"/><circle cx="6.73" cy="11.47" r="1.34" fill="#f0eee6" opacity="0.8"/></svg>
<div style="position:absolute;left:584.2px;top:338.3px;width:13px;height:8.8px;background:#000;border:0.5px solid #3a3a3a;box-sizing:border-box;color:#2fb52f;font:5.3px/7.800000000000001px 'Liberation Sans', sans-serif;text-align:center">10</div>
<div style="position:absolute;left:598.2px;top:340.8px;font:normal 4.6px/5.29px 'Liberation Sans', sans-serif;color:#2b2b2b;white-space:nowrap;">dB</div>
<div style="position:absolute;left:536.7px;top:354.9px;width:100px;text-align:center;font:normal 4.6px/5.29px 'Liberation Sans', sans-serif;color:#2b2b2b;white-space:nowrap;">Priority:</div>
<svg style="position:absolute;left:566.30px;top:358.20px;overflow:visible" width="18.20" height="18.20"><g stroke="#858585" stroke-width="0.95"><line x1="4.29" y1="13.91" x2="3.30" y2="14.90"/><line x1="2.63" y1="11.20" x2="1.30" y2="11.63"/><line x1="2.38" y1="8.04" x2="1.00" y2="7.82"/><line x1="3.60" y1="5.10" x2="2.47" y2="4.28"/><line x1="6.01" y1="3.04" x2="5.38" y2="1.79"/><line x1="9.10" y1="2.30" x2="9.10" y2="0.90"/><line x1="12.19" y1="3.04" x2="12.82" y2="1.79"/><line x1="14.60" y1="5.10" x2="15.73" y2="4.28"/><line x1="15.82" y1="8.04" x2="17.20" y2="7.82"/><line x1="15.57" y1="11.20" x2="16.90" y2="11.63"/><line x1="13.91" y1="13.91" x2="14.90" y2="14.90"/></g><circle cx="9.1" cy="9.1" r="6.1" fill="url(#kg)"/><circle cx="6.73" cy="11.47" r="1.34" fill="#f0eee6" opacity="0.8"/></svg>
<div style="position:absolute;left:584.2px;top:362.5px;width:13px;height:8.8px;background:#000;border:0.5px solid #3a3a3a;box-sizing:border-box;color:#2fb52f;font:5.3px/7.800000000000001px 'Liberation Sans', sans-serif;text-align:center">1</div>
<div style="position:absolute;left:574.2px;top:377.4px;width:25.5px;height:10.9px;background:#fff;border:0.6px solid #d4d4d4"></div>
<div style="position:absolute;left:536.9000000000001px;top:379.0px;width:100px;text-align:center;font:normal 4.6px/5.29px 'Liberation Sans', sans-serif;color:#2b2b2b;white-space:nowrap;">Chairman</div>
<div style="position:absolute;left:580.3000000000001px;top:384.29999999999995px;width:13.4px;height:2.0px;background:#000;border-radius:0.5px"></div>
<div style="position:absolute;left:574.2px;top:392.8px;width:25.5px;height:10.9px;background:#fff;border:0.6px solid #d4d4d4"></div>
<div style="position:absolute;left:536.9000000000001px;top:394.40000000000003px;width:100px;text-align:center;font:normal 4.6px/5.29px 'Liberation Sans', sans-serif;color:#2b2b2b;white-space:nowrap;">Last Mic</div>
<div style="position:absolute;left:580.3000000000001px;top:399.7px;width:13.4px;height:2.0px;background:#000;border-radius:0.5px"></div>
<div style="position:absolute;left:612.45px;top:195.8px;width:44.8px;height:210.6px;background:#5f6e7e;border-radius:3px"></div>
<div style="position:absolute;left:613.95px;top:197.4px;width:41.8px;height:6.6px;background:#20892a;border-radius:2px 2px 0 0"></div>
<svg style="position:absolute;left:613.95px;top:197px" width="10" height="7"><path d="M1.4 3.5 L2.9 1.1 L4.4 3.5 L2.9 6.0 Z" fill="#9fd39f" opacity="0.9"/><circle cx="6.6" cy="3.8" r="1.7" fill="#fff"/></svg>
<div style="position:absolute;left:613.95px;top:206.4px;width:41.8px;height:8.0px;background:#fde7c9;border-bottom:0.8px solid #a8957c"></div>
<div style="position:absolute;left:614.5500000000001px;top:208.0px;font:bold 5.0px/5.75px 'Liberation Sans', sans-serif;color:#000;white-space:nowrap;">XLR 5</div>
<div style="position:absolute;left:613.95px;top:216.8px;width:41.8px;height:9.0px;background:#8ce98c;border-bottom:0.8px solid #66c266"></div>
<div style="position:absolute;left:614.75px;top:219.3px;font:bold 5.2px/5.98px 'Liberation Sans', sans-serif;color:#0f700f;white-space:nowrap;">Level</div>
<svg style="position:absolute;left:646.75px;top:217.5px" width="8" height="8"><circle cx="4.2" cy="4" r="3.3" fill="#fff" stroke="#d6d6d6" stroke-width="0.7"/><path d="M3 3.1 L4.2 4.1 L5.4 3.1 M3 4.2 L4.2 5.2 L5.4 4.2" fill="none" stroke="#a0a0a0" stroke-width="0.55"/></svg>
<div style="position:absolute;left:613.95px;top:225.9px;width:41.8px;height:57.8px;background:#eef4fc"></div>
<div style="position:absolute;left:619.35px;top:232.0px;width:1.8px;height:33.0px;background:#e0dccd;border-left:0.5px solid #b9b9b9"></div>
<div style="position:absolute;left:617.5500000000001px;top:235.8px;width:5.4px;height:8.2px;background:linear-gradient(90deg,#cdc7b4,#e8e4d8,#cdc7b4);border:0.4px solid #b3ac9a;border-radius:1.5px"></div>
<div style="position:absolute;left:618.75px;top:240.0px;width:3.0px;height:1.0px;background:#333"></div>
<div style="position:absolute;left:616.5500000000001px;top:231.25px;width:1.9px;height:0.75px;background:#999"></div>
<div style="position:absolute;left:622.6500000000001px;top:231.25px;width:1.9px;height:0.75px;background:#999"></div>
<div style="position:absolute;left:615.45px;top:257.05px;width:3.2px;height:1.1px;background:#444"></div>
<div style="position:absolute;left:622.0500000000001px;top:257.05px;width:3.2px;height:1.1px;background:#444"></div>
<div style="position:absolute;left:616.5500000000001px;top:265.15px;width:1.9px;height:0.75px;background:#999"></div>
<div style="position:absolute;left:622.6500000000001px;top:265.15px;width:1.9px;height:0.75px;background:#999"></div>
<div style="position:absolute;left:627.25px;top:229.2px;font:normal 4.6px/5.29px 'Liberation Sans', sans-serif;color:#2b2b2b;white-space:nowrap;">+64</div>
<div style="position:absolute;left:629.35px;top:255.6px;font:normal 4.8px/5.52px 'Liberation Sans', sans-serif;color:#222;white-space:nowrap;">0</div>
<div style="position:absolute;left:627.6500000000001px;top:263.1px;font:normal 4.6px/5.29px 'Liberation Sans', sans-serif;color:#2b2b2b;white-space:nowrap;">-20</div>
<svg style="position:absolute;left:650.35px;top:227.6px" width="5" height="44"><rect x="0.6" y="0.00" width="3.1" height="3.4" rx="0.5" fill="#000"/><rect x="0.6" y="3.90" width="3.1" height="3.4" rx="0.5" fill="#000"/><rect x="0.6" y="7.80" width="3.1" height="3.4" rx="0.5" fill="#000"/><rect x="0.6" y="11.70" width="3.1" height="3.4" rx="0.5" fill="#000"/><rect x="0.6" y="15.60" width="3.1" height="3.4" rx="0.5" fill="#000"/><rect x="0.6" y="19.50" width="3.1" height="3.4" rx="0.5" fill="#000"/><rect x="0.6" y="23.40" width="3.1" height="3.4" rx="0.5" fill="#000"/><rect x="0.6" y="27.30" width="3.1" height="3.4" rx="0.5" fill="#000"/><rect x="0.6" y="31.20" width="3.1" height="3.4" rx="0.5" fill="#000"/><rect x="0.6" y="35.10" width="3.1" height="3.4" rx="0.5" fill="#000"/><rect x="0.6" y="39.00" width="3.1" height="3.4" rx="0.5" fill="#000"/><rect x="0" y="21.5" width="3.8" height="3.7" fill="#000"/></svg>
<div style="position:absolute;left:642.25px;top:227.2px;font:normal 4.3px/4.94px 'Liberation Sans', sans-serif;color:#2b2b2b;white-space:nowrap;">Clip</div>
<div style="position:absolute;left:644.0500000000001px;top:231.5px;font:normal 4.3px/4.94px 'Liberation Sans', sans-serif;color:#2b2b2b;white-space:nowrap;">20</div>
<div style="position:absolute;left:645.25px;top:249.2px;font:normal 4.3px/4.94px 'Liberation Sans', sans-serif;color:#2b2b2b;white-space:nowrap;">0</div>
<div style="position:absolute;left:642.85px;top:266.0px;font:normal 4.3px/4.94px 'Liberation Sans', sans-serif;color:#2b2b2b;white-space:nowrap;">-30</div>
<div style="position:absolute;left:615.5500000000001px;top:271.9px;width:12px;height:8.6px;background:#000;border:0.5px solid #3a3a3a;box-sizing:border-box;color:#2fb52f;font:5.3px/7.6px 'Liberation Sans', sans-serif;text-align:center">43</div>
<div style="position:absolute;left:629.45px;top:274.3px;font:normal 4.6px/5.29px 'Liberation Sans', sans-serif;color:#2b2b2b;white-space:nowrap;">dB</div>
<div style="position:absolute;left:637.35px;top:272.4px;width:17.9px;height:10.9px;background:#fff;border:0.6px solid #d6d6d6"></div>
<div style="position:absolute;left:596.45px;top:274.2px;width:100px;text-align:center;font:normal 4.6px/5.29px 'Liberation Sans', sans-serif;color:#2b2b2b;white-space:nowrap;">Mute</div>
<div style="position:absolute;left:640.0500000000001px;top:280.0px;width:12.2px;height:1.7px;background:#000"></div>
<div style="position:absolute;left:613.95px;top:286.6px;width:41.8px;height:9.2px;background:#8ce98c;border-bottom:0.8px solid #66c266"></div>
<div style="position:absolute;left:614.75px;top:289.0px;font:bold 5.0px/5.75px 'Liberation Sans', sans-serif;color:#0f700f;white-space:nowrap;">Automixer</div>
<div style="position:absolute;left:613.95px;top:295.8px;width:41.8px;height:109.1px;background:#eef4fc;border-radius:0 0 1.5px 1.5px"></div>
<div style="position:absolute;left:616.35px;top:299.0px;width:3.2px;height:3.0px;background:#000"></div>
<div style="position:absolute;left:622.1500000000001px;top:298.4px;font:normal 4.6px/5.29px 'Liberation Sans', sans-serif;color:#2b2b2b;white-space:nowrap;">Gate</div>
<div style="position:absolute;left:638.35px;top:299.0px;width:3.2px;height:3.0px;background:#000"></div>
<div style="position:absolute;left:644.45px;top:298.4px;font:normal 4.6px/5.29px 'Liberation Sans', sans-serif;color:#2b2b2b;white-space:nowrap;">Cam</div>
<div style="position:absolute;left:584.95px;top:306.8px;width:100px;text-align:center;font:normal 4.6px/5.29px 'Liberation Sans', sans-serif;color:#2b2b2b;white-space:nowrap;">Channel Bias:</div>
<svg style="position:absolute;left:614.55px;top:310.70px;overflow:visible" width="18.20" height="18.20"><g stroke="#858585" stroke-width="0.95"><line x1="4.29" y1="13.91" x2="3.30" y2="14.90"/><line x1="2.63" y1="11.20" x2="1.30" y2="11.63"/><line x1="2.38" y1="8.04" x2="1.00" y2="7.82"/><line x1="3.60" y1="5.10" x2="2.47" y2="4.28"/><line x1="6.01" y1="3.04" x2="5.38" y2="1.79"/><line x1="9.10" y1="2.30" x2="9.10" y2="0.90"/><line x1="12.19" y1="3.04" x2="12.82" y2="1.79"/><line x1="14.60" y1="5.10" x2="15.73" y2="4.28"/><line x1="15.82" y1="8.04" x2="17.20" y2="7.82"/><line x1="15.57" y1="11.20" x2="16.90" y2="11.63"/><line x1="13.91" y1="13.91" x2="14.90" y2="14.90"/></g><circle cx="9.1" cy="9.1" r="6.1" fill="url(#kg)"/><circle cx="6.73" cy="11.47" r="1.34" fill="#f0eee6" opacity="0.8"/></svg>
<div style="position:absolute;left:632.45px;top:314.1px;width:13px;height:8.8px;background:#000;border:0.5px solid #3a3a3a;box-sizing:border-box;color:#2fb52f;font:5.3px/7.800000000000001px 'Liberation Sans', sans-serif;text-align:center">0</div>
<div style="position:absolute;left:646.45px;top:316.8px;font:normal 4.6px/5.29px 'Liberation Sans', sans-serif;color:#2b2b2b;white-space:nowrap;">dB</div>
<div style="position:absolute;left:584.95px;top:330.6px;width:100px;text-align:center;font:normal 4.6px/5.29px 'Liberation Sans', sans-serif;color:#2b2b2b;white-space:nowrap;">Threshold:</div>
<svg style="position:absolute;left:614.55px;top:334.30px;overflow:visible" width="18.20" height="18.20"><g stroke="#858585" stroke-width="0.95"><line x1="4.29" y1="13.91" x2="3.30" y2="14.90"/><line x1="2.63" y1="11.20" x2="1.30" y2="11.63"/><line x1="2.38" y1="8.04" x2="1.00" y2="7.82"/><line x1="3.60" y1="5.10" x2="2.47" y2="4.28"/><line x1="6.01" y1="3.04" x2="5.38" y2="1.79"/><line x1="9.10" y1="2.30" x2="9.10" y2="0.90"/><line x1="12.19" y1="3.04" x2="12.82" y2="1.79"/><line x1="14.60" y1="5.10" x2="15.73" y2="4.28"/><line x1="15.82" y1="8.04" x2="17.20" y2="7.82"/><line x1="15.57" y1="11.20" x2="16.90" y2="11.63"/><line x1="13.91" y1="13.91" x2="14.90" y2="14.90"/></g><circle cx="9.1" cy="9.1" r="6.1" fill="url(#kg)"/><circle cx="6.73" cy="11.47" r="1.34" fill="#f0eee6" opacity="0.8"/></svg>
<div style="position:absolute;left:632.45px;top:338.3px;width:13px;height:8.8px;background:#000;border:0.5px solid #3a3a3a;box-sizing:border-box;color:#2fb52f;font:5.3px/7.800000000000001px 'Liberation Sans', sans-serif;text-align:center">10</div>
<div style="position:absolute;left:646.45px;top:340.8px;font:normal 4.6px/5.29px 'Liberation Sans', sans-serif;color:#2b2b2b;white-space:nowrap;">dB</div>
<div style="position:absolute;left:584.95px;top:354.9px;width:100px;text-align:center;font:normal 4.6px/5.29px 'Liberation Sans', sans-serif;color:#2b2b2b;white-space:nowrap;">Priority:</div>
<svg style="position:absolute;left:614.55px;top:358.20px;overflow:visible" width="18.20" height="18.20"><g stroke="#858585" stroke-width="0.95"><line x1="4.29" y1="13.91" x2="3.30" y2="14.90"/><line x1="2.63" y1="11.20" x2="1.30" y2="11.63"/><line x1="2.38" y1="8.04" x2="1.00" y2="7.82"/><line x1="3.60" y1="5.10" x2="2.47" y2="4.28"/><line x1="6.01" y1="3.04" x2="5.38" y2="1.79"/><line x1="9.10" y1="2.30" x2="9.10" y2="0.90"/><line x1="12.19" y1="3.04" x2="12.82" y2="1.79"/><line x1="14.60" y1="5.10" x2="15.73" y2="4.28"/><line x1="15.82" y1="8.04" x2="17.20" y2="7.82"/><line x1="15.57" y1="11.20" x2="16.90" y2="11.63"/><line x1="13.91" y1="13.91" x2="14.90" y2="14.90"/></g><circle cx="9.1" cy="9.1" r="6.1" fill="url(#kg)"/><circle cx="6.73" cy="11.47" r="1.34" fill="#f0eee6" opacity="0.8"/></svg>
<div style="position:absolute;left:632.45px;top:362.5px;width:13px;height:8.8px;background:#000;border:0.5px solid #3a3a3a;box-sizing:border-box;color:#2fb52f;font:5.3px/7.800000000000001px 'Liberation Sans', sans-serif;text-align:center">1</div>
<div style="position:absolute;left:622.45px;top:377.4px;width:25.5px;height:10.9px;background:#fff;border:0.6px solid #d4d4d4"></div>
<div style="position:absolute;left:585.1500000000001px;top:379.0px;width:100px;text-align:center;font:normal 4.6px/5.29px 'Liberation Sans', sans-serif;color:#2b2b2b;white-space:nowrap;">Chairman</div>
<div style="position:absolute;left:628.5500000000001px;top:384.29999999999995px;width:13.4px;height:2.0px;background:#000;border-radius:0.5px"></div>
<div style="position:absolute;left:622.45px;top:392.8px;width:25.5px;height:10.9px;background:#fff;border:0.6px solid #d4d4d4"></div>
<div style="position:absolute;left:585.1500000000001px;top:394.40000000000003px;width:100px;text-align:center;font:normal 4.6px/5.29px 'Liberation Sans', sans-serif;color:#2b2b2b;white-space:nowrap;">Last Mic</div>
<div style="position:absolute;left:628.5500000000001px;top:399.7px;width:13.4px;height:2.0px;background:#000;border-radius:0.5px"></div>
<div style="position:absolute;left:660.7px;top:195.8px;width:44.8px;height:210.6px;background:#5f6e7e;border-radius:3px"></div>
<div style="position:absolute;left:662.2px;top:197.4px;width:41.8px;height:6.6px;background:#20892a;border-radius:2px 2px 0 0"></div>
<svg style="position:absolute;left:662.2px;top:197px" width="10" height="7"><path d="M1.4 3.5 L2.9 1.1 L4.4 3.5 L2.9 6.0 Z" fill="#9fd39f" opacity="0.9"/><circle cx="6.6" cy="3.8" r="1.7" fill="#fff"/></svg>
<div style="position:absolute;left:662.2px;top:206.4px;width:41.8px;height:8.0px;background:#fde7c9;border-bottom:0.8px solid #a8957c"></div>
<div style="position:absolute;left:662.8000000000001px;top:208.0px;font:bold 5.0px/5.75px 'Liberation Sans', sans-serif;color:#000;white-space:nowrap;">XLR 6</div>
<div style="position:absolute;left:662.2px;top:216.8px;width:41.8px;height:9.0px;background:#8ce98c;border-bottom:0.8px solid #66c266"></div>
<div style="position:absolute;left:663.0px;top:219.3px;font:bold 5.2px/5.98px 'Liberation Sans', sans-serif;color:#0f700f;white-space:nowrap;">Level</div>
<svg style="position:absolute;left:695.0px;top:217.5px" width="8" height="8"><circle cx="4.2" cy="4" r="3.3" fill="#fff" stroke="#d6d6d6" stroke-width="0.7"/><path d="M3 3.1 L4.2 4.1 L5.4 3.1 M3 4.2 L4.2 5.2 L5.4 4.2" fill="none" stroke="#a0a0a0" stroke-width="0.55"/></svg>
<div style="position:absolute;left:662.2px;top:225.9px;width:41.8px;height:57.8px;background:#eef4fc"></div>
<div style="position:absolute;left:667.6px;top:232.0px;width:1.8px;height:33.0px;background:#e0dccd;border-left:0.5px solid #b9b9b9"></div>
<div style="position:absolute;left:665.8000000000001px;top:235.8px;width:5.4px;height:8.2px;background:linear-gradient(90deg,#cdc7b4,#e8e4d8,#cdc7b4);border:0.4px solid #b3ac9a;border-radius:1.5px"></div>
<div style="position:absolute;left:667.0px;top:240.0px;width:3.0px;height:1.0px;background:#333"></div>
<div style="position:absolute;left:664.8000000000001px;top:231.25px;width:1.9px;height:0.75px;background:#999"></div>
<div style="position:absolute;left:670.9000000000001px;top:231.25px;width:1.9px;height:0.75px;background:#999"></div>
<div style="position:absolute;left:663.7px;top:257.05px;width:3.2px;height:1.1px;background:#444"></div>
<div style="position:absolute;left:670.3000000000001px;top:257.05px;width:3.2px;height:1.1px;background:#444"></div>
<div style="position:absolute;left:664.8000000000001px;top:265.15px;width:1.9px;height:0.75px;background:#999"></div>
<div style="position:absolute;left:670.9000000000001px;top:265.15px;width:1.9px;height:0.75px;background:#999"></div>
<div style="position:absolute;left:675.5px;top:229.2px;font:normal 4.6px/5.29px 'Liberation Sans', sans-serif;color:#2b2b2b;white-space:nowrap;">+64</div>
<div style="position:absolute;left:677.6px;top:255.6px;font:normal 4.8px/5.52px 'Liberation Sans', sans-serif;color:#222;white-space:nowrap;">0</div>
<div style="position:absolute;left:675.9000000000001px;top:263.1px;font:normal 4.6px/5.29px 'Liberation Sans', sans-serif;color:#2b2b2b;white-space:nowrap;">-20</div>
<svg style="position:absolute;left:698.6px;top:227.6px" width="5" height="44"><rect x="0.6" y="0.00" width="3.1" height="3.4" rx="0.5" fill="#000"/><rect x="0.6" y="3.90" width="3.1" height="3.4" rx="0.5" fill="#000"/><rect x="0.6" y="7.80" width="3.1" height="3.4" rx="0.5" fill="#000"/><rect x="0.6" y="11.70" width="3.1" height="3.4" rx="0.5" fill="#000"/><rect x="0.6" y="15.60" width="3.1" height="3.4" rx="0.5" fill="#000"/><rect x="0.6" y="19.50" width="3.1" height="3.4" rx="0.5" fill="#000"/><rect x="0.6" y="23.40" width="3.1" height="3.4" rx="0.5" fill="#000"/><rect x="0.6" y="27.30" width="3.1" height="3.4" rx="0.5" fill="#000"/><rect x="0.6" y="31.20" width="3.1" height="3.4" rx="0.5" fill="#000"/><rect x="0.6" y="35.10" width="3.1" height="3.4" rx="0.5" fill="#000"/><rect x="0.6" y="39.00" width="3.1" height="3.4" rx="0.5" fill="#000"/><rect x="0" y="21.5" width="3.8" height="3.7" fill="#000"/></svg>
<div style="position:absolute;left:690.5px;top:227.2px;font:normal 4.3px/4.94px 'Liberation Sans', sans-serif;color:#2b2b2b;white-space:nowrap;">Clip</div>
<div style="position:absolute;left:692.3000000000001px;top:231.5px;font:normal 4.3px/4.94px 'Liberation Sans', sans-serif;color:#2b2b2b;white-space:nowrap;">20</div>
<div style="position:absolute;left:693.5px;top:249.2px;font:normal 4.3px/4.94px 'Liberation Sans', sans-serif;color:#2b2b2b;white-space:nowrap;">0</div>
<div style="position:absolute;left:691.1px;top:266.0px;font:normal 4.3px/4.94px 'Liberation Sans', sans-serif;color:#2b2b2b;white-space:nowrap;">-30</div>
<div style="position:absolute;left:663.8000000000001px;top:271.9px;width:12px;height:8.6px;background:#000;border:0.5px solid #3a3a3a;box-sizing:border-box;color:#2fb52f;font:5.3px/7.6px 'Liberation Sans', sans-serif;text-align:center">43</div>
<div style="position:absolute;left:677.7px;top:274.3px;font:normal 4.6px/5.29px 'Liberation Sans', sans-serif;color:#2b2b2b;white-space:nowrap;">dB</div>
<div style="position:absolute;left:685.6px;top:272.4px;width:17.9px;height:10.9px;background:#fff;border:0.6px solid #d6d6d6"></div>
<div style="position:absolute;left:644.7px;top:274.2px;width:100px;text-align:center;font:normal 4.6px/5.29px 'Liberation Sans', sans-serif;color:#2b2b2b;white-space:nowrap;">Mute</div>
<div style="position:absolute;left:688.3000000000001px;top:280.0px;width:12.2px;height:1.7px;background:#000"></div>
<div style="position:absolute;left:662.2px;top:286.6px;width:41.8px;height:9.2px;background:#8ce98c;border-bottom:0.8px solid #66c266"></div>
<div style="position:absolute;left:663.0px;top:289.0px;font:bold 5.0px/5.75px 'Liberation Sans', sans-serif;color:#0f700f;white-space:nowrap;">Automixer</div>
<div style="position:absolute;left:662.2px;top:295.8px;width:41.8px;height:109.1px;background:#eef4fc;border-radius:0 0 1.5px 1.5px"></div>
<div style="position:absolute;left:664.6px;top:299.0px;width:3.2px;height:3.0px;background:#000"></div>
<div style="position:absolute;left:670.4000000000001px;top:298.4px;font:normal 4.6px/5.29px 'Liberation Sans', sans-serif;color:#2b2b2b;white-space:nowrap;">Gate</div>
<div style="position:absolute;left:686.6px;top:299.0px;width:3.2px;height:3.0px;background:#000"></div>
<div style="position:absolute;left:692.7px;top:298.4px;font:normal 4.6px/5.29px 'Liberation Sans', sans-serif;color:#2b2b2b;white-space:nowrap;">Cam</div>
<div style="position:absolute;left:633.2px;top:306.8px;width:100px;text-align:center;font:normal 4.6px/5.29px 'Liberation Sans', sans-serif;color:#2b2b2b;white-space:nowrap;">Channel Bias:</div>
<svg style="position:absolute;left:662.80px;top:310.70px;overflow:visible" width="18.20" height="18.20"><g stroke="#858585" stroke-width="0.95"><line x1="4.29" y1="13.91" x2="3.30" y2="14.90"/><line x1="2.63" y1="11.20" x2="1.30" y2="11.63"/><line x1="2.38" y1="8.04" x2="1.00" y2="7.82"/><line x1="3.60" y1="5.10" x2="2.47" y2="4.28"/><line x1="6.01" y1="3.04" x2="5.38" y2="1.79"/><line x1="9.10" y1="2.30" x2="9.10" y2="0.90"/><line x1="12.19" y1="3.04" x2="12.82" y2="1.79"/><line x1="14.60" y1="5.10" x2="15.73" y2="4.28"/><line x1="15.82" y1="8.04" x2="17.20" y2="7.82"/><line x1="15.57" y1="11.20" x2="16.90" y2="11.63"/><line x1="13.91" y1="13.91" x2="14.90" y2="14.90"/></g><circle cx="9.1" cy="9.1" r="6.1" fill="url(#kg)"/><circle cx="6.73" cy="11.47" r="1.34" fill="#f0eee6" opacity="0.8"/></svg>
<div style="position:absolute;left:680.7px;top:314.1px;width:13px;height:8.8px;background:#000;border:0.5px solid #3a3a3a;box-sizing:border-box;color:#2fb52f;font:5.3px/7.800000000000001px 'Liberation Sans', sans-serif;text-align:center">0</div>
<div style="position:absolute;left:694.7px;top:316.8px;font:normal 4.6px/5.29px 'Liberation Sans', sans-serif;color:#2b2b2b;white-space:nowrap;">dB</div>
<div style="position:absolute;left:633.2px;top:330.6px;width:100px;text-align:center;font:normal 4.6px/5.29px 'Liberation Sans', sans-serif;color:#2b2b2b;white-space:nowrap;">Threshold:</div>
<svg style="position:absolute;left:662.80px;top:334.30px;overflow:visible" width="18.20" height="18.20"><g stroke="#858585" stroke-width="0.95"><line x1="4.29" y1="13.91" x2="3.30" y2="14.90"/><line x1="2.63" y1="11.20" x2="1.30" y2="11.63"/><line x1="2.38" y1="8.04" x2="1.00" y2="7.82"/><line x1="3.60" y1="5.10" x2="2.47" y2="4.28"/><line x1="6.01" y1="3.04" x2="5.38" y2="1.79"/><line x1="9.10" y1="2.30" x2="9.10" y2="0.90"/><line x1="12.19" y1="3.04" x2="12.82" y2="1.79"/><line x1="14.60" y1="5.10" x2="15.73" y2="4.28"/><line x1="15.82" y1="8.04" x2="17.20" y2="7.82"/><line x1="15.57" y1="11.20" x2="16.90" y2="11.63"/><line x1="13.91" y1="13.91" x2="14.90" y2="14.90"/></g><circle cx="9.1" cy="9.1" r="6.1" fill="url(#kg)"/><circle cx="6.73" cy="11.47" r="1.34" fill="#f0eee6" opacity="0.8"/></svg>
<div style="position:absolute;left:680.7px;top:338.3px;width:13px;height:8.8px;background:#000;border:0.5px solid #3a3a3a;box-sizing:border-box;color:#2fb52f;font:5.3px/7.800000000000001px 'Liberation Sans', sans-serif;text-align:center">10</div>
<div style="position:absolute;left:694.7px;top:340.8px;font:normal 4.6px/5.29px 'Liberation Sans', sans-serif;color:#2b2b2b;white-space:nowrap;">dB</div>
<div style="position:absolute;left:633.2px;top:354.9px;width:100px;text-align:center;font:normal 4.6px/5.29px 'Liberation Sans', sans-serif;color:#2b2b2b;white-space:nowrap;">Priority:</div>
<svg style="position:absolute;left:662.80px;top:358.20px;overflow:visible" width="18.20" height="18.20"><g stroke="#858585" stroke-width="0.95"><line x1="4.29" y1="13.91" x2="3.30" y2="14.90"/><line x1="2.63" y1="11.20" x2="1.30" y2="11.63"/><line x1="2.38" y1="8.04" x2="1.00" y2="7.82"/><line x1="3.60" y1="5.10" x2="2.47" y2="4.28"/><line x1="6.01" y1="3.04" x2="5.38" y2="1.79"/><line x1="9.10" y1="2.30" x2="9.10" y2="0.90"/><line x1="12.19" y1="3.04" x2="12.82" y2="1.79"/><line x1="14.60" y1="5.10" x2="15.73" y2="4.28"/><line x1="15.82" y1="8.04" x2="17.20" y2="7.82"/><line x1="15.57" y1="11.20" x2="16.90" y2="11.63"/><line x1="13.91" y1="13.91" x2="14.90" y2="14.90"/></g><circle cx="9.1" cy="9.1" r="6.1" fill="url(#kg)"/><circle cx="6.73" cy="11.47" r="1.34" fill="#f0eee6" opacity="0.8"/></svg>
<div style="position:absolute;left:680.7px;top:362.5px;width:13px;height:8.8px;background:#000;border:0.5px solid #3a3a3a;box-sizing:border-box;color:#2fb52f;font:5.3px/7.800000000000001px 'Liberation Sans', sans-serif;text-align:center">1</div>
<div style="position:absolute;left:670.7px;top:377.4px;width:25.5px;height:10.9px;background:#fff;border:0.6px solid #d4d4d4"></div>
<div style="position:absolute;left:633.4000000000001px;top:379.0px;width:100px;text-align:center;font:normal 4.6px/5.29px 'Liberation Sans', sans-serif;color:#2b2b2b;white-space:nowrap;">Chairman</div>
<div style="position:absolute;left:676.8000000000001px;top:384.29999999999995px;width:13.4px;height:2.0px;background:#000;border-radius:0.5px"></div>
<div style="position:absolute;left:670.7px;top:392.8px;width:25.5px;height:10.9px;background:#fff;border:0.6px solid #d4d4d4"></div>
<div style="position:absolute;left:633.4000000000001px;top:394.40000000000003px;width:100px;text-align:center;font:normal 4.6px/5.29px 'Liberation Sans', sans-serif;color:#2b2b2b;white-space:nowrap;">Last Mic</div>
<div style="position:absolute;left:676.8000000000001px;top:399.7px;width:13.4px;height:2.0px;background:#000;border-radius:0.5px"></div>
<div style="position:absolute;left:708.95px;top:195.8px;width:44.8px;height:210.6px;background:#5f6e7e;border-radius:3px"></div>
<div style="position:absolute;left:710.45px;top:197.4px;width:41.8px;height:6.6px;background:#20892a;border-radius:2px 2px 0 0"></div>
<svg style="position:absolute;left:710.45px;top:197px" width="10" height="7"><path d="M1.4 3.5 L2.9 1.1 L4.4 3.5 L2.9 6.0 Z" fill="#9fd39f" opacity="0.9"/><circle cx="6.6" cy="3.8" r="1.7" fill="#fff"/></svg>
<div style="position:absolute;left:710.45px;top:206.4px;width:41.8px;height:8.0px;background:#fde7c9;border-bottom:0.8px solid #a8957c"></div>
<div style="position:absolute;left:711.0500000000001px;top:208.0px;font:bold 5.0px/5.75px 'Liberation Sans', sans-serif;color:#000;white-space:nowrap;">XLR 7</div>
<div style="position:absolute;left:710.45px;top:216.8px;width:41.8px;height:9.0px;background:#8ce98c;border-bottom:0.8px solid #66c266"></div>
<div style="position:absolute;left:711.25px;top:219.3px;font:bold 5.2px/5.98px 'Liberation Sans', sans-serif;color:#0f700f;white-space:nowrap;">Level</div>
<svg style="position:absolute;left:743.25px;top:217.5px" width="8" height="8"><circle cx="4.2" cy="4" r="3.3" fill="#fff" stroke="#d6d6d6" stroke-width="0.7"/><path d="M3 3.1 L4.2 4.1 L5.4 3.1 M3 4.2 L4.2 5.2 L5.4 4.2" fill="none" stroke="#a0a0a0" stroke-width="0.55"/></svg>
<div style="position:absolute;left:710.45px;top:225.9px;width:41.8px;height:57.8px;background:#eef4fc"></div>
<div style="position:absolute;left:715.85px;top:232.0px;width:1.8px;height:33.0px;background:#e0dccd;border-left:0.5px solid #b9b9b9"></div>
<div style="position:absolute;left:714.0500000000001px;top:235.8px;width:5.4px;height:8.2px;background:linear-gradient(90deg,#cdc7b4,#e8e4d8,#cdc7b4);border:0.4px solid #b3ac9a;border-radius:1.5px"></div>
<div style="position:absolute;left:715.25px;top:240.0px;width:3.0px;height:1.0px;background:#333"></div>
<div style="position:absolute;left:713.0500000000001px;top:231.25px;width:1.9px;height:0.75px;background:#999"></div>
<div style="position:absolute;left:719.1500000000001px;top:231.25px;width:1.9px;height:0.75px;background:#999"></div>
<div style="position:absolute;left:711.95px;top:257.05px;width:3.2px;height:1.1px;background:#444"></div>
<div style="position:absolute;left:718.5500000000001px;top:257.05px;width:3.2px;height:1.1px;background:#444"></div>
<div style="position:absolute;left:713.0500000000001px;top:265.15px;width:1.9px;height:0.75px;background:#999"></div>
<div style="position:absolute;left:719.1500000000001px;top:265.15px;width:1.9px;height:0.75px;background:#999"></div>
<div style="position:absolute;left:723.75px;top:229.2px;font:normal 4.6px/5.29px 'Liberation Sans', sans-serif;color:#2b2b2b;white-space:nowrap;">+64</div>
<div style="position:absolute;left:725.85px;top:255.6px;font:normal 4.8px/5.52px 'Liberation Sans', sans-serif;color:#222;white-space:nowrap;">0</div>
<div style="position:absolute;left:724.1500000000001px;top:263.1px;font:normal 4.6px/5.29px 'Liberation Sans', sans-serif;color:#2b2b2b;white-space:nowrap;">-20</div>
<svg style="position:absolute;left:746.85px;top:227.6px" width="5" height="44"><rect x="0.6" y="0.00" width="3.1" height="3.4" rx="0.5" fill="#000"/><rect x="0.6" y="3.90" width="3.1" height="3.4" rx="0.5" fill="#000"/><rect x="0.6" y="7.80" width="3.1" height="3.4" rx="0.5" fill="#000"/><rect x="0.6" y="11.70" width="3.1" height="3.4" rx="0.5" fill="#000"/><rect x="0.6" y="15.60" width="3.1" height="3.4" rx="0.5" fill="#000"/><rect x="0.6" y="19.50" width="3.1" height="3.4" rx="0.5" fill="#000"/><rect x="0.6" y="23.40" width="3.1" height="3.4" rx="0.5" fill="#000"/><rect x="0.6" y="27.30" width="3.1" height="3.4" rx="0.5" fill="#000"/><rect x="0.6" y="31.20" width="3.1" height="3.4" rx="0.5" fill="#000"/><rect x="0.6" y="35.10" width="3.1" height="3.4" rx="0.5" fill="#000"/><rect x="0.6" y="39.00" width="3.1" height="3.4" rx="0.5" fill="#000"/><rect x="0" y="21.5" width="3.8" height="3.7" fill="#000"/></svg>
<div style="position:absolute;left:738.75px;top:227.2px;font:normal 4.3px/4.94px 'Liberation Sans', sans-serif;color:#2b2b2b;white-space:nowrap;">Clip</div>
<div style="position:absolute;left:740.5500000000001px;top:231.5px;font:normal 4.3px/4.94px 'Liberation Sans', sans-serif;color:#2b2b2b;white-space:nowrap;">20</div>
<div style="position:absolute;left:741.75px;top:249.2px;font:normal 4.3px/4.94px 'Liberation Sans', sans-serif;color:#2b2b2b;white-space:nowrap;">0</div>
<div style="position:absolute;left:739.35px;top:266.0px;font:normal 4.3px/4.94px 'Liberation Sans', sans-serif;color:#2b2b2b;white-space:nowrap;">-30</div>
<div style="position:absolute;left:712.0500000000001px;top:271.9px;width:12px;height:8.6px;background:#000;border:0.5px solid #3a3a3a;box-sizing:border-box;color:#2fb52f;font:5.3px/7.6px 'Liberation Sans', sans-serif;text-align:center">43</div>
<div style="position:absolute;left:725.95px;top:274.3px;font:normal 4.6px/5.29px 'Liberation Sans', sans-serif;color:#2b2b2b;white-space:nowrap;">dB</div>
<div style="position:absolute;left:733.85px;top:272.4px;width:17.9px;height:10.9px;background:#fff;border:0.6px solid #d6d6d6"></div>
<div style="position:absolute;left:692.95px;top:274.2px;width:100px;text-align:center;font:normal 4.6px/5.29px 'Liberation Sans', sans-serif;color:#2b2b2b;white-space:nowrap;">Mute</div>
<div style="position:absolute;left:736.5500000000001px;top:280.0px;width:12.2px;height:1.7px;background:#000"></div>
<div style="position:absolute;left:710.45px;top:286.6px;width:41.8px;height:9.2px;background:#8ce98c;border-bottom:0.8px solid #66c266"></div>
<div style="position:absolute;left:711.25px;top:289.0px;font:bold 5.0px/5.75px 'Liberation Sans', sans-serif;color:#0f700f;white-space:nowrap;">Automixer</div>
<div style="position:absolute;left:710.45px;top:295.8px;width:41.8px;height:109.1px;background:#eef4fc;border-radius:0 0 1.5px 1.5px"></div>
<div style="position:absolute;left:712.85px;top:299.0px;width:3.2px;height:3.0px;background:#000"></div>
<div style="position:absolute;left:718.6500000000001px;top:298.4px;font:normal 4.6px/5.29px 'Liberation Sans', sans-serif;color:#2b2b2b;white-space:nowrap;">Gate</div>
<div style="position:absolute;left:734.85px;top:299.0px;width:3.2px;height:3.0px;background:#000"></div>
<div style="position:absolute;left:740.95px;top:298.4px;font:normal 4.6px/5.29px 'Liberation Sans', sans-serif;color:#2b2b2b;white-space:nowrap;">Cam</div>
<div style="position:absolute;left:681.45px;top:306.8px;width:100px;text-align:center;font:normal 4.6px/5.29px 'Liberation Sans', sans-serif;color:#2b2b2b;white-space:nowrap;">Channel Bias:</div>
<svg style="position:absolute;left:711.05px;top:310.70px;overflow:visible" width="18.20" height="18.20"><g stroke="#858585" stroke-width="0.95"><line x1="4.29" y1="13.91" x2="3.30" y2="14.90"/><line x1="2.63" y1="11.20" x2="1.30" y2="11.63"/><line x1="2.38" y1="8.04" x2="1.00" y2="7.82"/><line x1="3.60" y1="5.10" x2="2.47" y2="4.28"/><line x1="6.01" y1="3.04" x2="5.38" y2="1.79"/><line x1="9.10" y1="2.30" x2="9.10" y2="0.90"/><line x1="12.19" y1="3.04" x2="12.82" y2="1.79"/><line x1="14.60" y1="5.10" x2="15.73" y2="4.28"/><line x1="15.82" y1="8.04" x2="17.20" y2="7.82"/><line x1="15.57" y1="11.20" x2="16.90" y2="11.63"/><line x1="13.91" y1="13.91" x2="14.90" y2="14.90"/></g><circle cx="9.1" cy="9.1" r="6.1" fill="url(#kg)"/><circle cx="6.73" cy="11.47" r="1.34" fill="#f0eee6" opacity="0.8"/></svg>
<div style="position:absolute;left:728.95px;top:314.1px;width:13px;height:8.8px;background:#000;border:0.5px solid #3a3a3a;box-sizing:border-box;color:#2fb52f;font:5.3px/7.800000000000001px 'Liberation Sans', sans-serif;text-align:center">0</div>
<div style="position:absolute;left:742.95px;top:316.8px;font:normal 4.6px/5.29px 'Liberation Sans', sans-serif;color:#2b2b2b;white-space:nowrap;">dB</div>
<div style="position:absolute;left:681.45px;top:330.6px;width:100px;text-align:center;font:normal 4.6px/5.29px 'Liberation Sans', sans-serif;color:#2b2b2b;white-space:nowrap;">Threshold:</div>
<svg style="position:absolute;left:711.05px;top:334.30px;overflow:visible" width="18.20" height="18.20"><g stroke="#858585" stroke-width="0.95"><line x1="4.29" y1="13.91" x2="3.30" y2="14.90"/><line x1="2.63" y1="11.20" x2="1.30" y2="11.63"/><line x1="2.38" y1="8.04" x2="1.00" y2="7.82"/><line x1="3.60" y1="5.10" x2="2.47" y2="4.28"/><line x1="6.01" y1="3.04" x2="5.38" y2="1.79"/><line x1="9.10" y1="2.30" x2="9.10" y2="0.90"/><line x1="12.19" y1="3.04" x2="12.82" y2="1.79"/><line x1="14.60" y1="5.10" x2="15.73" y2="4.28"/><line x1="15.82" y1="8.04" x2="17.20" y2="7.82"/><line x1="15.57" y1="11.20" x2="16.90" y2="11.63"/><line x1="13.91" y1="13.91" x2="14.90" y2="14.90"/></g><circle cx="9.1" cy="9.1" r="6.1" fill="url(#kg)"/><circle cx="6.73" cy="11.47" r="1.34" fill="#f0eee6" opacity="0.8"/></svg>
<div style="position:absolute;left:728.95px;top:338.3px;width:13px;height:8.8px;background:#000;border:0.5px solid #3a3a3a;box-sizing:border-box;color:#2fb52f;font:5.3px/7.800000000000001px 'Liberation Sans', sans-serif;text-align:center">10</div>
<div style="position:absolute;left:742.95px;top:340.8px;font:normal 4.6px/5.29px 'Liberation Sans', sans-serif;color:#2b2b2b;white-space:nowrap;">dB</div>
<div style="position:absolute;left:681.45px;top:354.9px;width:100px;text-align:center;font:normal 4.6px/5.29px 'Liberation Sans', sans-serif;color:#2b2b2b;white-space:nowrap;">Priority:</div>
<svg style="position:absolute;left:711.05px;top:358.20px;overflow:visible" width="18.20" height="18.20"><g stroke="#858585" stroke-width="0.95"><line x1="4.29" y1="13.91" x2="3.30" y2="14.90"/><line x1="2.63" y1="11.20" x2="1.30" y2="11.63"/><line x1="2.38" y1="8.04" x2="1.00" y2="7.82"/><line x1="3.60" y1="5.10" x2="2.47" y2="4.28"/><line x1="6.01" y1="3.04" x2="5.38" y2="1.79"/><line x1="9.10" y1="2.30" x2="9.10" y2="0.90"/><line x1="12.19" y1="3.04" x2="12.82" y2="1.79"/><line x1="14.60" y1="5.10" x2="15.73" y2="4.28"/><line x1="15.82" y1="8.04" x2="17.20" y2="7.82"/><line x1="15.57" y1="11.20" x2="16.90" y2="11.63"/><line x1="13.91" y1="13.91" x2="14.90" y2="14.90"/></g><circle cx="9.1" cy="9.1" r="6.1" fill="url(#kg)"/><circle cx="6.73" cy="11.47" r="1.34" fill="#f0eee6" opacity="0.8"/></svg>
<div style="position:absolute;left:728.95px;top:362.5px;width:13px;height:8.8px;background:#000;border:0.5px solid #3a3a3a;box-sizing:border-box;color:#2fb52f;font:5.3px/7.800000000000001px 'Liberation Sans', sans-serif;text-align:center">1</div>
<div style="position:absolute;left:718.95px;top:377.4px;width:25.5px;height:10.9px;background:#fff;border:0.6px solid #d4d4d4"></div>
<div style="position:absolute;left:681.6500000000001px;top:379.0px;width:100px;text-align:center;font:normal 4.6px/5.29px 'Liberation Sans', sans-serif;color:#2b2b2b;white-space:nowrap;">Chairman</div>
<div style="position:absolute;left:725.0500000000001px;top:384.29999999999995px;width:13.4px;height:2.0px;background:#000;border-radius:0.5px"></div>
<div style="position:absolute;left:718.95px;top:392.8px;width:25.5px;height:10.9px;background:#fff;border:0.6px solid #d4d4d4"></div>
<div style="position:absolute;left:681.6500000000001px;top:394.40000000000003px;width:100px;text-align:center;font:normal 4.6px/5.29px 'Liberation Sans', sans-serif;color:#2b2b2b;white-space:nowrap;">Last Mic</div>
<div style="position:absolute;left:725.0500000000001px;top:399.7px;width:13.4px;height:2.0px;background:#000;border-radius:0.5px"></div>
<div style="position:absolute;left:757.2px;top:195.8px;width:44.8px;height:210.6px;background:#5f6e7e;border-radius:3px"></div>
<div style="position:absolute;left:758.7px;top:197.4px;width:41.8px;height:6.6px;background:#20892a;border-radius:2px 2px 0 0"></div>
<svg style="position:absolute;left:758.7px;top:197px" width="10" height="7"><path d="M1.4 3.5 L2.9 1.1 L4.4 3.5 L2.9 6.0 Z" fill="#9fd39f" opacity="0.9"/><circle cx="6.6" cy="3.8" r="1.7" fill="#fff"/></svg>
<div style="position:absolute;left:758.7px;top:206.4px;width:41.8px;height:8.0px;background:#fde7c9;border-bottom:0.8px solid #a8957c"></div>
<div style="position:absolute;left:759.3000000000001px;top:208.0px;font:bold 5.0px/5.75px 'Liberation Sans', sans-serif;color:#000;white-space:nowrap;">XLR 8</div>
<div style="position:absolute;left:758.7px;top:216.8px;width:41.8px;height:9.0px;background:#8ce98c;border-bottom:0.8px solid #66c266"></div>
<div style="position:absolute;left:759.5px;top:219.3px;font:bold 5.2px/5.98px 'Liberation Sans', sans-serif;color:#0f700f;white-space:nowrap;">Level</div>
<svg style="position:absolute;left:791.5px;top:217.5px" width="8" height="8"><circle cx="4.2" cy="4" r="3.3" fill="#fff" stroke="#d6d6d6" stroke-width="0.7"/><path d="M3 3.1 L4.2 4.1 L5.4 3.1 M3 4.2 L4.2 5.2 L5.4 4.2" fill="none" stroke="#a0a0a0" stroke-width="0.55"/></svg>
<div style="position:absolute;left:758.7px;top:225.9px;width:41.8px;height:57.8px;background:#eef4fc"></div>
<div style="position:absolute;left:764.1px;top:232.0px;width:1.8px;height:33.0px;background:#e0dccd;border-left:0.5px solid #b9b9b9"></div>
<div style="position:absolute;left:762.3000000000001px;top:235.8px;width:5.4px;height:8.2px;background:linear-gradient(90deg,#cdc7b4,#e8e4d8,#cdc7b4);border:0.4px solid #b3ac9a;border-radius:1.5px"></div>
<div style="position:absolute;left:763.5px;top:240.0px;width:3.0px;height:1.0px;background:#333"></div>
<div style="position:absolute;left:761.3000000000001px;top:231.25px;width:1.9px;height:0.75px;background:#999"></div>
<div style="position:absolute;left:767.4000000000001px;top:231.25px;width:1.9px;height:0.75px;background:#999"></div>
<div style="position:absolute;left:760.2px;top:257.05px;width:3.2px;height:1.1px;background:#444"></div>
<div style="position:absolute;left:766.8000000000001px;top:257.05px;width:3.2px;height:1.1px;background:#444"></div>
<div style="position:absolute;left:761.3000000000001px;top:265.15px;width:1.9px;height:0.75px;background:#999"></div>
<div style="position:absolute;left:767.4000000000001px;top:265.15px;width:1.9px;height:0.75px;background:#999"></div>
<div style="position:absolute;left:772.0px;top:229.2px;font:normal 4.6px/5.29px 'Liberation Sans', sans-serif;color:#2b2b2b;white-space:nowrap;">+64</div>
<div style="position:absolute;left:774.1px;top:255.6px;font:normal 4.8px/5.52px 'Liberation Sans', sans-serif;color:#222;white-space:nowrap;">0</div>
<div style="position:absolute;left:772.4000000000001px;top:263.1px;font:normal 4.6px/5.29px 'Liberation Sans', sans-serif;color:#2b2b2b;white-space:nowrap;">-20</div>
<svg style="position:absolute;left:795.1px;top:227.6px" width="5" height="44"><rect x="0.6" y="0.00" width="3.1" height="3.4" rx="0.5" fill="#000"/><rect x="0.6" y="3.90" width="3.1" height="3.4" rx="0.5" fill="#000"/><rect x="0.6" y="7.80" width="3.1" height="3.4" rx="0.5" fill="#000"/><rect x="0.6" y="11.70" width="3.1" height="3.4" rx="0.5" fill="#000"/><rect x="0.6" y="15.60" width="3.1" height="3.4" rx="0.5" fill="#000"/><rect x="0.6" y="19.50" width="3.1" height="3.4" rx="0.5" fill="#000"/><rect x="0.6" y="23.40" width="3.1" height="3.4" rx="0.5" fill="#000"/><rect x="0.6" y="27.30" width="3.1" height="3.4" rx="0.5" fill="#000"/><rect x="0.6" y="31.20" width="3.1" height="3.4" rx="0.5" fill="#000"/><rect x="0.6" y="35.10" width="3.1" height="3.4" rx="0.5" fill="#000"/><rect x="0.6" y="39.00" width="3.1" height="3.4" rx="0.5" fill="#000"/><rect x="0" y="21.5" width="3.8" height="3.7" fill="#000"/></svg>
<div style="position:absolute;left:787.0px;top:227.2px;font:normal 4.3px/4.94px 'Liberation Sans', sans-serif;color:#2b2b2b;white-space:nowrap;">Clip</div>
<div style="position:absolute;left:788.8000000000001px;top:231.5px;font:normal 4.3px/4.94px 'Liberation Sans', sans-serif;color:#2b2b2b;white-space:nowrap;">20</div>
<div style="position:absolute;left:790.0px;top:249.2px;font:normal 4.3px/4.94px 'Liberation Sans', sans-serif;color:#2b2b2b;white-space:nowrap;">0</div>
<div style="position:absolute;left:787.6px;top:266.0px;font:normal 4.3px/4.94px 'Liberation Sans', sans-serif;color:#2b2b2b;white-space:nowrap;">-30</div>
<div style="position:absolute;left:760.3000000000001px;top:271.9px;width:12px;height:8.6px;background:#000;border:0.5px solid #3a3a3a;box-sizing:border-box;color:#2fb52f;font:5.3px/7.6px 'Liberation Sans', sans-serif;text-align:center">43</div>
<div style="position:absolute;left:774.2px;top:274.3px;font:normal 4.6px/5.29px 'Liberation Sans', sans-serif;color:#2b2b2b;white-space:nowrap;">dB</div>
<div style="position:absolute;left:782.1px;top:272.4px;width:17.9px;height:10.9px;background:#fff;border:0.6px solid #d6d6d6"></div>
<div style="position:absolute;left:741.2px;top:274.2px;width:100px;text-align:center;font:normal 4.6px/5.29px 'Liberation Sans', sans-serif;color:#2b2b2b;white-space:nowrap;">Mute</div>
<div style="position:absolute;left:784.8000000000001px;top:280.0px;width:12.2px;height:1.7px;background:#000"></div>
<div style="position:absolute;left:758.7px;top:286.6px;width:41.8px;height:9.2px;background:#8ce98c;border-bottom:0.8px solid #66c266"></div>
<div style="position:absolute;left:759.5px;top:289.0px;font:bold 5.0px/5.75px 'Liberation Sans', sans-serif;color:#0f700f;white-space:nowrap;">Automixer</div>
<div style="position:absolute;left:758.7px;top:295.8px;width:41.8px;height:109.1px;background:#eef4fc;border-radius:0 0 1.5px 1.5px"></div>
<div style="position:absolute;left:761.1px;top:299.0px;width:3.2px;height:3.0px;background:#000"></div>
<div style="position:absolute;left:766.9000000000001px;top:298.4px;font:normal 4.6px/5.29px 'Liberation Sans', sans-serif;color:#2b2b2b;white-space:nowrap;">Gate</div>
<div style="position:absolute;left:783.1px;top:299.0px;width:3.2px;height:3.0px;background:#000"></div>
<div style="position:absolute;left:789.2px;top:298.4px;font:normal 4.6px/5.29px 'Liberation Sans', sans-serif;color:#2b2b2b;white-space:nowrap;">Cam</div>
<div style="position:absolute;left:729.7px;top:306.8px;width:100px;text-align:center;font:normal 4.6px/5.29px 'Liberation Sans', sans-serif;color:#2b2b2b;white-space:nowrap;">Channel Bias:</div>
<svg style="position:absolute;left:759.30px;top:310.70px;overflow:visible" width="18.20" height="18.20"><g stroke="#858585" stroke-width="0.95"><line x1="4.29" y1="13.91" x2="3.30" y2="14.90"/><line x1="2.63" y1="11.20" x2="1.30" y2="11.63"/><line x1="2.38" y1="8.04" x2="1.00" y2="7.82"/><line x1="3.60" y1="5.10" x2="2.47" y2="4.28"/><line x1="6.01" y1="3.04" x2="5.38" y2="1.79"/><line x1="9.10" y1="2.30" x2="9.10" y2="0.90"/><line x1="12.19" y1="3.04" x2="12.82" y2="1.79"/><line x1="14.60" y1="5.10" x2="15.73" y2="4.28"/><line x1="15.82" y1="8.04" x2="17.20" y2="7.82"/><line x1="15.57" y1="11.20" x2="16.90" y2="11.63"/><line x1="13.91" y1="13.91" x2="14.90" y2="14.90"/></g><circle cx="9.1" cy="9.1" r="6.1" fill="url(#kg)"/><circle cx="6.73" cy="11.47" r="1.34" fill="#f0eee6" opacity="0.8"/></svg>
<div style="position:absolute;left:777.2px;top:314.1px;width:13px;height:8.8px;background:#000;border:0.5px solid #3a3a3a;box-sizing:border-box;color:#2fb52f;font:5.3px/7.800000000000001px 'Liberation Sans', sans-serif;text-align:center">0</div>
<div style="position:absolute;left:791.2px;top:316.8px;font:normal 4.6px/5.29px 'Liberation Sans', sans-serif;color:#2b2b2b;white-space:nowrap;">dB</div>
<div style="position:absolute;left:729.7px;top:330.6px;width:100px;text-align:center;font:normal 4.6px/5.29px 'Liberation Sans', sans-serif;color:#2b2b2b;white-space:nowrap;">Threshold:</div>
<svg style="position:absolute;left:759.30px;top:334.30px;overflow:visible" width="18.20" height="18.20"><g stroke="#858585" stroke-width="0.95"><line x1="4.29" y1="13.91" x2="3.30" y2="14.90"/><line x1="2.63" y1="11.20" x2="1.30" y2="11.63"/><line x1="2.38" y1="8.04" x2="1.00" y2="7.82"/><line x1="3.60" y1="5.10" x2="2.47" y2="4.28"/><line x1="6.01" y1="3.04" x2="5.38" y2="1.79"/><line x1="9.10" y1="2.30" x2="9.10" y2="0.90"/><line x1="12.19" y1="3.04" x2="12.82" y2="1.79"/><line x1="14.60" y1="5.10" x2="15.73" y2="4.28"/><line x1="15.82" y1="8.04" x2="17.20" y2="7.82"/><line x1="15.57" y1="11.20" x2="16.90" y2="11.63"/><line x1="13.91" y1="13.91" x2="14.90" y2="14.90"/></g><circle cx="9.1" cy="9.1" r="6.1" fill="url(#kg)"/><circle cx="6.73" cy="11.47" r="1.34" fill="#f0eee6" opacity="0.8"/></svg>
<div style="position:absolute;left:777.2px;top:338.3px;width:13px;height:8.8px;background:#000;border:0.5px solid #3a3a3a;box-sizing:border-box;color:#2fb52f;font:5.3px/7.800000000000001px 'Liberation Sans', sans-serif;text-align:center">10</div>
<div style="position:absolute;left:791.2px;top:340.8px;font:normal 4.6px/5.29px 'Liberation Sans', sans-serif;color:#2b2b2b;white-space:nowrap;">dB</div>
<div style="position:absolute;left:729.7px;top:354.9px;width:100px;text-align:center;font:normal 4.6px/5.29px 'Liberation Sans', sans-serif;color:#2b2b2b;white-space:nowrap;">Priority:</div>
<svg style="position:absolute;left:759.30px;top:358.20px;overflow:visible" width="18.20" height="18.20"><g stroke="#858585" stroke-width="0.95"><line x1="4.29" y1="13.91" x2="3.30" y2="14.90"/><line x1="2.63" y1="11.20" x2="1.30" y2="11.63"/><line x1="2.38" y1="8.04" x2="1.00" y2="7.82"/><line x1="3.60" y1="5.10" x2="2.47" y2="4.28"/><line x1="6.01" y1="3.04" x2="5.38" y2="1.79"/><line x1="9.10" y1="2.30" x2="9.10" y2="0.90"/><line x1="12.19" y1="3.04" x2="12.82" y2="1.79"/><line x1="14.60" y1="5.10" x2="15.73" y2="4.28"/><line x1="15.82" y1="8.04" x2="17.20" y2="7.82"/><line x1="15.57" y1="11.20" x2="16.90" y2="11.63"/><line x1="13.91" y1="13.91" x2="14.90" y2="14.90"/></g><circle cx="9.1" cy="9.1" r="6.1" fill="url(#kg)"/><circle cx="6.73" cy="11.47" r="1.34" fill="#f0eee6" opacity="0.8"/></svg>
<div style="position:absolute;left:777.2px;top:362.5px;width:13px;height:8.8px;background:#000;border:0.5px solid #3a3a3a;box-sizing:border-box;color:#2fb52f;font:5.3px/7.800000000000001px 'Liberation Sans', sans-serif;text-align:center">1</div>
<div style="position:absolute;left:767.2px;top:377.4px;width:25.5px;height:10.9px;background:#fff;border:0.6px solid #d4d4d4"></div>
<div style="position:absolute;left:729.9000000000001px;top:379.0px;width:100px;text-align:center;font:normal 4.6px/5.29px 'Liberation Sans', sans-serif;color:#2b2b2b;white-space:nowrap;">Chairman</div>
<div style="position:absolute;left:773.3000000000001px;top:384.29999999999995px;width:13.4px;height:2.0px;background:#000;border-radius:0.5px"></div>
<div style="position:absolute;left:767.2px;top:392.8px;width:25.5px;height:10.9px;background:#fff;border:0.6px solid #d4d4d4"></div>
<div style="position:absolute;left:729.9000000000001px;top:394.40000000000003px;width:100px;text-align:center;font:normal 4.6px/5.29px 'Liberation Sans', sans-serif;color:#2b2b2b;white-space:nowrap;">Last Mic</div>
<div style="position:absolute;left:773.3000000000001px;top:399.7px;width:13.4px;height:2.0px;background:#000;border-radius:0.5px"></div>
<div style="position:absolute;left:126.5px;top:492.5px;width:745.5px;height:12.1px;background:#f7f7f5;border-radius:0 0 1.5px 0"></div>
<div style="position:absolute;left:126.8px;top:494.5px;width:388.0px;height:8.3px;border:0.6px solid #dcdcd8;border-right-color:#fff;border-bottom-color:#fff"></div>
<div style="position:absolute;left:515.4px;top:494.5px;width:104.29999999999998px;height:8.3px;border:0.6px solid #dcdcd8;border-right-color:#fff;border-bottom-color:#fff"></div>
<div style="position:absolute;left:620.3px;top:494.5px;width:98.4px;height:8.3px;border:0.6px solid #dcdcd8;border-right-color:#fff;border-bottom-color:#fff"></div>
<div style="position:absolute;left:719.3px;top:494.5px;width:96.00000000000003px;height:8.3px;border:0.6px solid #dcdcd8;border-right-color:#fff;border-bottom-color:#fff"></div>
<div style="position:absolute;left:815.9px;top:494.5px;width:49.4px;height:8.3px;border:0.6px solid #dcdcd8;border-right-color:#fff;border-bottom-color:#fff"></div>
<div style="position:absolute;left:127.6px;top:495.6px;font:normal 6.4px/7.36px 'Liberation Sans', sans-serif;color:#222;white-space:nowrap;">Saved C:\Apps\Calturks.str</div>
<div style="position:absolute;left:517.5px;top:495.6px;font:normal 6.4px/7.36px 'Liberation Sans', sans-serif;color:#222;white-space:nowrap;">Last Saved Full Preset: "Power-On"</div>
<div style="position:absolute;left:622.3px;top:495.6px;font:normal 6.4px/7.36px 'Liberation Sans', sans-serif;color:#222;white-space:nowrap;">Last Run Full Preset: "Power-On"</div>
<div style="position:absolute;left:721.3px;top:495.6px;font:normal 6.4px/7.36px 'Liberation Sans', sans-serif;color:#222;white-space:nowrap;">Last Run Partial Preset: &lt;none&gt;</div>
<div style="position:absolute;left:818px;top:495.6px;font:normal 6.4px/7.36px 'Liberation Sans', sans-serif;color:#222;white-space:nowrap;">Meters Enabled</div>
<div style="position:absolute;left:869.2px;top:501.6px;width:0.9px;height:0.9px;background:#b8b8b8"></div>
<div style="position:absolute;left:867.6px;top:501.6px;width:0.9px;height:0.9px;background:#b8b8b8"></div>
<div style="position:absolute;left:869.2px;top:500.0px;width:0.9px;height:0.9px;background:#b8b8b8"></div>
</body></html>
